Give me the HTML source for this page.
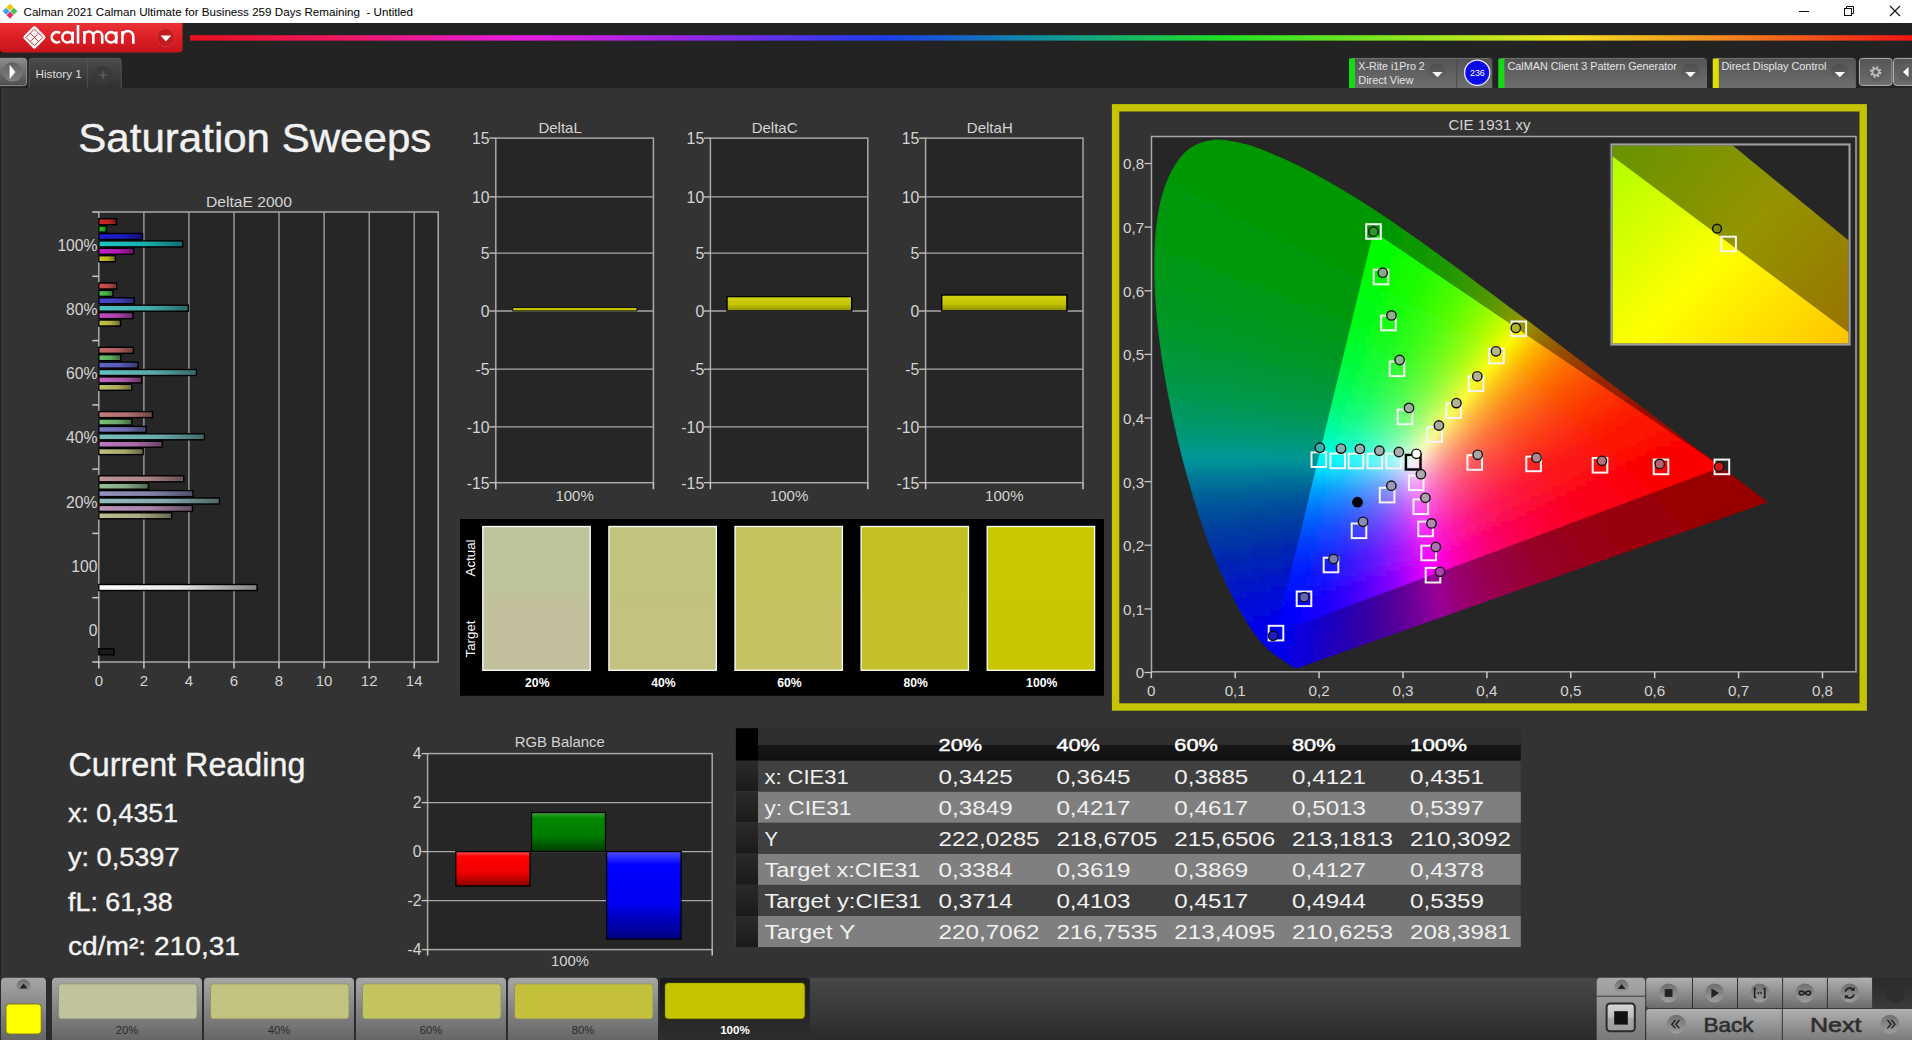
<!DOCTYPE html><html><head><meta charset="utf-8"><title>Calman</title><style>html,body{margin:0;padding:0;background:#333;overflow:hidden}svg{display:block}text{font-family:"Liberation Sans",sans-serif}</style></head><body><svg width="1912" height="1040" viewBox="0 0 1912 1040"><defs><linearGradient id="gRed" x1="0" y1="0" x2="0" y2="1"><stop offset="0" stop-color="#ea3236"/><stop offset="0.5" stop-color="#dc1e24"/><stop offset="1" stop-color="#c5151b"/></linearGradient><linearGradient id="gRain" x1="0" y1="0" x2="1" y2="0"><stop offset="0" stop-color="#e8101c"/><stop offset="0.09" stop-color="#ee1864"/><stop offset="0.192" stop-color="#e81ce0"/><stop offset="0.284" stop-color="#9a26e6"/><stop offset="0.403" stop-color="#1c3cee"/><stop offset="0.5" stop-color="#10949a"/><stop offset="0.6" stop-color="#1ee024"/><stop offset="0.73" stop-color="#a8e81c"/><stop offset="0.8" stop-color="#f4e21e"/><stop offset="0.888" stop-color="#f48a1e"/><stop offset="1" stop-color="#f01414"/></linearGradient><linearGradient id="gBtn" x1="0" y1="0" x2="0" y2="1"><stop offset="0" stop-color="#8c8c8c"/><stop offset="1" stop-color="#4e4e4e"/></linearGradient><linearGradient id="gKnob" x1="0" y1="0" x2="0" y2="1"><stop offset="0" stop-color="#5a5a5a"/><stop offset="1" stop-color="#8a8a8a"/></linearGradient><linearGradient id="gTab" x1="0" y1="0" x2="0" y2="1"><stop offset="0" stop-color="#4c4c4c"/><stop offset="1" stop-color="#303030"/></linearGradient><linearGradient id="gDev" x1="0" y1="0" x2="0" y2="1"><stop offset="0" stop-color="#545454"/><stop offset="1" stop-color="#6e6e6e"/></linearGradient><linearGradient id="gDrop" x1="0" y1="0" x2="0" y2="1"><stop offset="0" stop-color="#4a4a4a"/><stop offset="1" stop-color="#6a6a6a"/></linearGradient><linearGradient id="gb00" x1="0" y1="0" x2="1" y2="0"><stop offset="0" stop-color="#d42828"/><stop offset="0.55" stop-color="#be2424"/><stop offset="1" stop-color="#741616"/></linearGradient><linearGradient id="gb01" x1="0" y1="0" x2="1" y2="0"><stop offset="0" stop-color="#28c428"/><stop offset="0.55" stop-color="#24b024"/><stop offset="1" stop-color="#166b16"/></linearGradient><linearGradient id="gb02" x1="0" y1="0" x2="1" y2="0"><stop offset="0" stop-color="#1e1ed2"/><stop offset="0.55" stop-color="#1b1bbd"/><stop offset="1" stop-color="#101073"/></linearGradient><linearGradient id="gb03" x1="0" y1="0" x2="1" y2="0"><stop offset="0" stop-color="#20c4c4"/><stop offset="0.55" stop-color="#1cb0b0"/><stop offset="1" stop-color="#116b6b"/></linearGradient><linearGradient id="gb04" x1="0" y1="0" x2="1" y2="0"><stop offset="0" stop-color="#c420c4"/><stop offset="0.55" stop-color="#b01cb0"/><stop offset="1" stop-color="#6b116b"/></linearGradient><linearGradient id="gb05" x1="0" y1="0" x2="1" y2="0"><stop offset="0" stop-color="#c8c81e"/><stop offset="0.55" stop-color="#b4b41b"/><stop offset="1" stop-color="#6e6e10"/></linearGradient><linearGradient id="gb10" x1="0" y1="0" x2="1" y2="0"><stop offset="0" stop-color="#cc5151"/><stop offset="0.55" stop-color="#b74848"/><stop offset="1" stop-color="#702c2c"/></linearGradient><linearGradient id="gb11" x1="0" y1="0" x2="1" y2="0"><stop offset="0" stop-color="#51c151"/><stop offset="0.55" stop-color="#48ad48"/><stop offset="1" stop-color="#2c6a2c"/></linearGradient><linearGradient id="gb12" x1="0" y1="0" x2="1" y2="0"><stop offset="0" stop-color="#4949cb"/><stop offset="0.55" stop-color="#4141b6"/><stop offset="1" stop-color="#28286f"/></linearGradient><linearGradient id="gb13" x1="0" y1="0" x2="1" y2="0"><stop offset="0" stop-color="#4bc1c1"/><stop offset="0.55" stop-color="#43adad"/><stop offset="1" stop-color="#296a6a"/></linearGradient><linearGradient id="gb14" x1="0" y1="0" x2="1" y2="0"><stop offset="0" stop-color="#c14bc1"/><stop offset="0.55" stop-color="#ad43ad"/><stop offset="1" stop-color="#6a296a"/></linearGradient><linearGradient id="gb15" x1="0" y1="0" x2="1" y2="0"><stop offset="0" stop-color="#c4c449"/><stop offset="0.55" stop-color="#b0b041"/><stop offset="1" stop-color="#6b6b28"/></linearGradient><linearGradient id="gb20" x1="0" y1="0" x2="1" y2="0"><stop offset="0" stop-color="#c86969"/><stop offset="0.55" stop-color="#b45e5e"/><stop offset="1" stop-color="#6e3939"/></linearGradient><linearGradient id="gb21" x1="0" y1="0" x2="1" y2="0"><stop offset="0" stop-color="#69bf69"/><stop offset="0.55" stop-color="#5eab5e"/><stop offset="1" stop-color="#396939"/></linearGradient><linearGradient id="gb22" x1="0" y1="0" x2="1" y2="0"><stop offset="0" stop-color="#6464c7"/><stop offset="0.55" stop-color="#5a5ab3"/><stop offset="1" stop-color="#37376d"/></linearGradient><linearGradient id="gb23" x1="0" y1="0" x2="1" y2="0"><stop offset="0" stop-color="#65bfbf"/><stop offset="0.55" stop-color="#5aabab"/><stop offset="1" stop-color="#376969"/></linearGradient><linearGradient id="gb24" x1="0" y1="0" x2="1" y2="0"><stop offset="0" stop-color="#bf65bf"/><stop offset="0.55" stop-color="#ab5aab"/><stop offset="1" stop-color="#693769"/></linearGradient><linearGradient id="gb25" x1="0" y1="0" x2="1" y2="0"><stop offset="0" stop-color="#c1c164"/><stop offset="0.55" stop-color="#adad5a"/><stop offset="1" stop-color="#6a6a37"/></linearGradient><linearGradient id="gb30" x1="0" y1="0" x2="1" y2="0"><stop offset="0" stop-color="#c47c7c"/><stop offset="0.55" stop-color="#b06f6f"/><stop offset="1" stop-color="#6b4444"/></linearGradient><linearGradient id="gb31" x1="0" y1="0" x2="1" y2="0"><stop offset="0" stop-color="#7cbe7c"/><stop offset="0.55" stop-color="#6fab6f"/><stop offset="1" stop-color="#446844"/></linearGradient><linearGradient id="gb32" x1="0" y1="0" x2="1" y2="0"><stop offset="0" stop-color="#7878c4"/><stop offset="0.55" stop-color="#6c6cb0"/><stop offset="1" stop-color="#42426b"/></linearGradient><linearGradient id="gb33" x1="0" y1="0" x2="1" y2="0"><stop offset="0" stop-color="#79bebe"/><stop offset="0.55" stop-color="#6cabab"/><stop offset="1" stop-color="#426868"/></linearGradient><linearGradient id="gb34" x1="0" y1="0" x2="1" y2="0"><stop offset="0" stop-color="#be79be"/><stop offset="0.55" stop-color="#ab6cab"/><stop offset="1" stop-color="#684268"/></linearGradient><linearGradient id="gb35" x1="0" y1="0" x2="1" y2="0"><stop offset="0" stop-color="#bfbf78"/><stop offset="0.55" stop-color="#abab6c"/><stop offset="1" stop-color="#696942"/></linearGradient><linearGradient id="gb40" x1="0" y1="0" x2="1" y2="0"><stop offset="0" stop-color="#c09595"/><stop offset="0.55" stop-color="#ac8686"/><stop offset="1" stop-color="#695151"/></linearGradient><linearGradient id="gb41" x1="0" y1="0" x2="1" y2="0"><stop offset="0" stop-color="#95bc95"/><stop offset="0.55" stop-color="#86a986"/><stop offset="1" stop-color="#516751"/></linearGradient><linearGradient id="gb42" x1="0" y1="0" x2="1" y2="0"><stop offset="0" stop-color="#9292bf"/><stop offset="0.55" stop-color="#8383ab"/><stop offset="1" stop-color="#505069"/></linearGradient><linearGradient id="gb43" x1="0" y1="0" x2="1" y2="0"><stop offset="0" stop-color="#93bcbc"/><stop offset="0.55" stop-color="#84a9a9"/><stop offset="1" stop-color="#506767"/></linearGradient><linearGradient id="gb44" x1="0" y1="0" x2="1" y2="0"><stop offset="0" stop-color="#bc93bc"/><stop offset="0.55" stop-color="#a984a9"/><stop offset="1" stop-color="#675067"/></linearGradient><linearGradient id="gb45" x1="0" y1="0" x2="1" y2="0"><stop offset="0" stop-color="#bdbd92"/><stop offset="0.55" stop-color="#aaaa83"/><stop offset="1" stop-color="#676750"/></linearGradient><linearGradient id="gbW" x1="0" y1="0" x2="1" y2="0"><stop offset="0" stop-color="#ffffff"/><stop offset="0.5" stop-color="#e8e8e8"/><stop offset="1" stop-color="#808080"/></linearGradient><linearGradient id="gYbar" x1="0" y1="0" x2="0" y2="1"><stop offset="0" stop-color="#d4d418"/><stop offset="0.55" stop-color="#c4c400"/><stop offset="1" stop-color="#8a8a00"/></linearGradient><linearGradient id="gsw0" x1="0" y1="0" x2="0" y2="1"><stop offset="0" stop-color="#bfc39a"/><stop offset="0.45" stop-color="#bfc39a"/><stop offset="0.55" stop-color="#c2bf9d"/><stop offset="1" stop-color="#c2bf9d"/></linearGradient><linearGradient id="gsw1" x1="0" y1="0" x2="0" y2="1"><stop offset="0" stop-color="#c1c47d"/><stop offset="0.45" stop-color="#c1c47d"/><stop offset="0.55" stop-color="#c3c27f"/><stop offset="1" stop-color="#c3c27f"/></linearGradient><linearGradient id="gsw2" x1="0" y1="0" x2="0" y2="1"><stop offset="0" stop-color="#c3c45e"/><stop offset="0.45" stop-color="#c3c45e"/><stop offset="0.55" stop-color="#c4c262"/><stop offset="1" stop-color="#c4c262"/></linearGradient><linearGradient id="gsw3" x1="0" y1="0" x2="0" y2="1"><stop offset="0" stop-color="#c4c023"/><stop offset="0.45" stop-color="#c4c023"/><stop offset="0.55" stop-color="#c5c02a"/><stop offset="1" stop-color="#c5c02a"/></linearGradient><linearGradient id="gsw4" x1="0" y1="0" x2="0" y2="1"><stop offset="0" stop-color="#c8c800"/><stop offset="0.45" stop-color="#c8c800"/><stop offset="0.55" stop-color="#c8c600"/><stop offset="1" stop-color="#c8c600"/></linearGradient><clipPath id="cLoc"><path d="M1297.2 668.2C1297.1 668.2 1297.1 668.2 1297.1 668.2C1297.0 668.2 1297.0 668.2 1296.9 668.2C1296.8 668.2 1296.8 668.2 1296.7 668.2C1296.7 668.2 1296.6 668.3 1296.5 668.3C1296.4 668.3 1296.3 668.3 1296.2 668.3C1296.1 668.3 1296.0 668.3 1295.9 668.3C1295.8 668.3 1295.6 668.3 1295.5 668.3C1295.3 668.3 1295.1 668.2 1294.9 668.1C1294.6 668.0 1294.3 667.8 1294.0 667.7C1293.6 667.5 1293.3 667.2 1292.8 667.0C1292.3 666.7 1291.7 666.3 1291.1 665.9C1290.5 665.4 1289.8 665.0 1289.0 664.4C1288.2 663.8 1287.3 663.3 1286.2 662.6C1285.2 661.8 1283.9 661.0 1282.5 660.1C1281.1 659.1 1279.5 658.2 1277.8 656.9C1276.0 655.6 1274.1 654.2 1271.9 652.4C1269.7 650.6 1267.5 648.9 1264.8 645.9C1262.0 642.9 1258.8 639.5 1255.2 634.5C1251.6 629.5 1247.6 624.0 1243.0 616.0C1238.4 608.1 1233.4 598.9 1227.6 586.8C1221.9 574.7 1215.1 560.6 1208.7 543.4C1202.3 526.2 1195.4 505.8 1189.1 483.3C1182.8 460.8 1175.9 434.1 1170.7 408.3C1165.5 382.4 1160.6 353.8 1157.9 328.1C1155.1 302.4 1153.5 276.4 1154.3 253.9C1155.1 231.4 1157.8 209.8 1162.7 193.1C1167.6 176.4 1175.2 162.6 1183.7 153.7C1192.1 144.8 1202.8 141.3 1213.4 139.8C1223.9 138.3 1235.6 141.7 1246.9 144.6C1258.1 147.6 1269.9 152.8 1280.9 157.6C1291.9 162.3 1302.5 167.6 1312.9 173.1C1323.4 178.6 1333.5 184.4 1343.7 190.5C1353.9 196.6 1364.1 203.0 1374.1 209.6C1384.2 216.2 1394.2 223.1 1404.2 230.0C1414.2 237.0 1424.2 244.1 1434.2 251.3C1444.2 258.5 1454.2 265.9 1464.2 273.2C1474.2 280.6 1484.2 288.1 1494.1 295.5C1504.0 302.9 1514.0 310.4 1523.8 317.7C1533.6 325.1 1543.4 332.5 1553.0 339.7C1562.5 347.0 1572.0 354.2 1581.2 361.1C1590.5 368.1 1599.6 375.0 1608.4 381.7C1617.1 388.3 1625.8 394.8 1633.9 400.9C1642.0 407.1 1649.9 413.1 1657.1 418.6C1664.4 424.1 1671.0 429.1 1677.4 433.9C1683.7 438.7 1689.7 443.2 1695.2 447.3C1700.6 451.4 1705.5 455.1 1709.9 458.4C1714.4 461.8 1718.3 464.8 1721.9 467.5C1725.5 470.3 1728.6 472.6 1731.5 474.8C1734.4 477.0 1736.9 478.8 1739.2 480.5C1741.4 482.3 1743.4 483.8 1745.3 485.2C1747.2 486.6 1748.8 487.9 1750.4 489.1C1752.0 490.3 1753.3 491.3 1754.6 492.3C1755.9 493.2 1757.0 494.0 1758.0 494.8C1758.9 495.5 1759.7 496.1 1760.5 496.7C1761.2 497.2 1761.8 497.7 1762.4 498.1C1763.0 498.6 1763.4 498.9 1763.8 499.2C1764.2 499.5 1764.5 499.7 1764.8 499.9C1765.0 500.1 1765.3 500.3 1765.5 500.5C1765.7 500.7 1765.9 500.8 1766.1 500.9C1766.3 501.1 1766.5 501.3 1766.7 501.4C1766.9 501.5 1767.1 501.7 1767.2 501.8C1767.3 501.9 1767.4 502.0 1767.5 502.0C1767.6 502.1 1767.7 502.1 1767.7 502.2C1767.7 502.2 1767.8 502.2 1767.8 502.2Z"/></clipPath><clipPath id="cTri"><path d="M1373.5 231.5L1721.9 466.9L1276.0 633.1Z"/></clipPath><clipPath id="cPlot"><rect x="1151.5" y="136.5" width="704.5" height="535.3"/></clipPath><filter id="fBlur" x="-5%" y="-5%" width="110%" height="110%"><feGaussianBlur stdDeviation="3.2"/></filter><clipPath id="cIns"><rect x="1612.5" y="145.5" width="236" height="198"/></clipPath><linearGradient id="gInB" x1="0" y1="0" x2="1" y2="1"><stop offset="0" stop-color="#a8ff00"/><stop offset="0.45" stop-color="#ffff00"/><stop offset="1" stop-color="#ffb000"/></linearGradient><linearGradient id="gInO" x1="0" y1="0" x2="1" y2="1"><stop offset="0" stop-color="#5a9400"/><stop offset="0.5" stop-color="#949400"/><stop offset="1" stop-color="#9a6800"/></linearGradient><linearGradient id="gRb" x1="0" y1="0" x2="0" y2="1"><stop offset="0" stop-color="#ff5050"/><stop offset="0.15" stop-color="#ff0000"/><stop offset="0.6" stop-color="#f00000"/><stop offset="1" stop-color="#880000"/></linearGradient><linearGradient id="gGb" x1="0" y1="0" x2="0" y2="1"><stop offset="0" stop-color="#40a040"/><stop offset="0.15" stop-color="#008800"/><stop offset="0.6" stop-color="#007c00"/><stop offset="1" stop-color="#003c00"/></linearGradient><linearGradient id="gBb" x1="0" y1="0" x2="0" y2="1"><stop offset="0" stop-color="#5050ff"/><stop offset="0.15" stop-color="#0000ff"/><stop offset="0.6" stop-color="#0000f0"/><stop offset="1" stop-color="#000080"/></linearGradient><linearGradient id="gHdr" x1="0" y1="0" x2="0" y2="1"><stop offset="0" stop-color="#2e2e2e"/><stop offset="0.5" stop-color="#2e2e2e"/><stop offset="0.52" stop-color="#161616"/><stop offset="1" stop-color="#101010"/></linearGradient><linearGradient id="gNar" x1="0" y1="0" x2="0" y2="1"><stop offset="0" stop-color="#2a2a2a"/><stop offset="1" stop-color="#1a1a1a"/></linearGradient><linearGradient id="gBar" x1="0" y1="0" x2="0" y2="1"><stop offset="0" stop-color="#484848"/><stop offset="1" stop-color="#2a2a2a"/></linearGradient><linearGradient id="gGb2" x1="0" y1="0" x2="0" y2="1"><stop offset="0" stop-color="#a6a6a6"/><stop offset="0.35" stop-color="#8c8c8c"/><stop offset="1" stop-color="#5e5e5e"/></linearGradient><linearGradient id="gKnb" x1="0" y1="0" x2="0" y2="1"><stop offset="0" stop-color="#6e6e6e"/><stop offset="1" stop-color="#9e9e9e"/></linearGradient><linearGradient id="gSel" x1="0" y1="0" x2="0" y2="1"><stop offset="0" stop-color="#1b1b1d"/><stop offset="1" stop-color="#303030"/></linearGradient><linearGradient id="gCtl" x1="0" y1="0" x2="0" y2="1"><stop offset="0" stop-color="#a8a8a8"/><stop offset="1" stop-color="#747474"/></linearGradient><linearGradient id="gCtl2" x1="0" y1="0" x2="0" y2="1"><stop offset="0" stop-color="#b0b0b0"/><stop offset="1" stop-color="#6c6c6c"/></linearGradient><linearGradient id="gSq" x1="0" y1="0" x2="0" y2="1"><stop offset="0" stop-color="#d8d8d8"/><stop offset="0.5" stop-color="#bdbdbd"/><stop offset="0.52" stop-color="#a8a8a8"/><stop offset="1" stop-color="#9a9a9a"/></linearGradient><linearGradient id="gDk" x1="0" y1="0" x2="0" y2="1"><stop offset="0" stop-color="#2a2a2a"/><stop offset="1" stop-color="#3a3a3a"/></linearGradient></defs><rect x="0.0" y="0.0" width="1912.0" height="1040.0" fill="#333333" /><rect x="0.0" y="0.0" width="1912.0" height="23.0" fill="#ffffff" /><g transform="translate(10,11.2)"><rect x="-2.5" y="-6.4" width="5" height="5" fill="#f5c400" transform="rotate(45 0 -3.9)"/><rect x="-6.4" y="-2.5" width="5" height="5" fill="#3aa6e8" transform="rotate(45 -3.9 0)"/><rect x="1.4" y="-2.5" width="5" height="5" fill="#46c04a" transform="rotate(45 3.9 0)"/><rect x="-2.5" y="1.4" width="5" height="5" fill="#e0306a" transform="rotate(45 0 3.9)"/></g><text x="23.5" y="15.8" font-size="11.60" fill="#000000" textLength="389.5" lengthAdjust="spacingAndGlyphs" >Calman 2021 Calman Ultimate for Business 259 Days Remaining  - Untitled</text><line x1="1799.0" y1="11.5" x2="1809.0" y2="11.5" stroke="#111" stroke-width="1.0" /><rect x="1844.5" y="8.5" width="7" height="7" fill="none" stroke="#111" stroke-width="1"/><path d="M1846.5 8.5v-2h7v7h-2" fill="none" stroke="#111" stroke-width="1"/><path d="M1890 6l10 10M1900 6l-10 10" stroke="#111" stroke-width="1.1"/><rect x="0.0" y="23.0" width="1912.0" height="65.0" fill="#232323" /><rect x="0.0" y="88.0" width="0.9" height="890.0" fill="#1f1f1f" /><rect x="1.6" y="88.0" width="1.6" height="890.0" fill="#383838" /><path d="M0 23H182.5V48.5Q182.5 52.6 178.5 52.6H4Q0 52.6 0 48.5Z" fill="url(#gRed)"/><g transform="translate(34.4,37.4) rotate(45)"><rect x="-8.5" y="-8.5" width="17" height="17" rx="2.4" fill="#fff"/><rect x="-5.9" y="-5.9" width="11.8" height="11.8" fill="none" stroke="#d0262c" stroke-width="0.9"/><path d="M0 -5.9V5.9M-5.9 0H5.9" stroke="#d0262c" stroke-width="0.9"/></g><g fill="none" stroke="#ffffff" stroke-width="2.6"><path d="M60.1 33.2A5.15 5.15 0 1 0 60.1 41.3"/><circle cx="67.5" cy="37.3" r="5.15"/><path d="M72.65 31.6V43.7"/><path d="M78 25V43.7"/><path d="M84.4 30.9V43.7M84.4 43.7V36A4.45 4.45 0 0 1 93.3 36V43.7M93.3 36A4.45 4.45 0 0 1 102.2 36V43.7"/><circle cx="111.1" cy="37.3" r="5.15"/><path d="M116.25 31.6V43.7"/><path d="M122.4 30.9V43.7M122.4 43.7V36.4A5.45 5.45 0 0 1 133.3 36.4V43.7"/></g><circle cx="165.6" cy="37.6" r="9" fill="#c41a20"/><circle cx="165.6" cy="37.6" r="9" fill="none" stroke="#e84a4e" stroke-width="0.8" opacity="0.6"/><path d="M160.6 35.6H171.2L165.9 41.6Z" fill="#fff"/><rect x="190.0" y="35.2" width="1722.0" height="5.4" fill="url(#gRain)" /><rect x="-3" y="58.3" width="29.6" height="27.4" rx="3" fill="url(#gBtn)" stroke="#a0a0a0" stroke-width="0.8"/><circle cx="12.5" cy="72" r="9.8" fill="url(#gKnob)" opacity="0.8"/><path d="M9.6 64.8V79L15.4 71.9Z" fill="#fff"/><path d="M29.2 88V61Q29.2 58.3 32 58.3H118.5Q121.2 58.3 121.2 61V88" fill="url(#gTab)" stroke="#5c5c5c" stroke-width="0.8"/><line x1="87.6" y1="58.5" x2="87.6" y2="88.0" stroke="#555" stroke-width="0.8" /><text x="35.5" y="77.8" font-size="10.60" fill="#dcdcdc" textLength="46.3" lengthAdjust="spacingAndGlyphs" >History 1</text><circle cx="103" cy="75" r="9" fill="#3a3a3a"/><path d="M103 71V79M99 75H107" stroke="#6a6a6a" stroke-width="1.1"/><path d="M1349.0 88V61Q1349.0 58 1352.0 58H1489.3 Q1492.3 58 1492.3 61V88Z" fill="url(#gDev)"/><line x1="1352.0" y1="58.4" x2="1489.3" y2="58.4" stroke="#7a7a7a" stroke-width="0.8" /><rect x="1349.0" y="58.6" width="6.0" height="29.4" fill="#14dc14" /><circle cx="1437.4" cy="72.6" r="9.2" fill="url(#gDrop)" opacity="0.85"/><path d="M1432.2 72H1442.6 L1437.4 77.2Z" fill="#fff"/><line x1="1456.7" y1="61.0" x2="1456.7" y2="88.0" stroke="#4a4a4a" stroke-width="1.0" /><circle cx="1477.2" cy="72.7" r="12.6" fill="#0a0ae6" stroke="#e8e8ff" stroke-width="1.3"/><text x="1477.4" y="76.0" font-size="8.80" fill="#ffffff" text-anchor="middle" textLength="14.8" lengthAdjust="spacingAndGlyphs" >236</text><text x="1358.3" y="70.0" font-size="10.70" fill="#e4e4e4" textLength="66.5" lengthAdjust="spacingAndGlyphs" >X-Rite i1Pro 2</text><text x="1358.3" y="84.0" font-size="10.70" fill="#e4e4e4" textLength="55.0" lengthAdjust="spacingAndGlyphs" >Direct View</text><path d="M1498.4 88V61Q1498.4 58 1501.4 58H1704.0 Q1707.0 58 1707.0 61V88Z" fill="url(#gDev)"/><line x1="1501.4" y1="58.4" x2="1704.0" y2="58.4" stroke="#7a7a7a" stroke-width="0.8" /><rect x="1498.4" y="58.6" width="6.0" height="29.4" fill="#14dc14" /><circle cx="1690.5" cy="72.6" r="9.2" fill="url(#gDrop)" opacity="0.85"/><path d="M1685.3 72H1695.7 L1690.5 77.2Z" fill="#fff"/><text x="1507.5" y="70.0" font-size="10.70" fill="#e4e4e4" textLength="169.3" lengthAdjust="spacingAndGlyphs" >CalMAN Client 3 Pattern Generator</text><path d="M1712.8 88V61Q1712.8 58 1715.8 58H1852.9 Q1855.9 58 1855.9 61V88Z" fill="url(#gDev)"/><line x1="1715.8" y1="58.4" x2="1852.9" y2="58.4" stroke="#7a7a7a" stroke-width="0.8" /><rect x="1712.8" y="58.6" width="6.0" height="29.4" fill="#e0e000" /><circle cx="1839.8" cy="72.6" r="9.2" fill="url(#gDrop)" opacity="0.85"/><path d="M1834.6 72H1845.0 L1839.8 77.2Z" fill="#fff"/><text x="1721.5" y="70.0" font-size="10.70" fill="#e4e4e4" textLength="105.0" lengthAdjust="spacingAndGlyphs" >Direct Display Control</text><rect x="1859.4" y="58.4" width="32.6" height="27" rx="3" fill="url(#gDev)" stroke="#b0b0b0" stroke-width="1"/><circle cx="1875.7" cy="72" r="9" fill="#5e5e5e"/><g transform="translate(1875.7,72)"><circle r="4.6" fill="none" stroke="#bdbdbd" stroke-width="2.4" stroke-dasharray="2 1.6"/><circle r="3.2" fill="none" stroke="#bdbdbd" stroke-width="1.6"/></g><rect x="1893.5" y="58.4" width="30" height="27" rx="3" fill="url(#gDev)" stroke="#b0b0b0" stroke-width="1"/><circle cx="1906" cy="72" r="9" fill="#5e5e5e"/><path d="M1903 72L1908.5 67V77Z" fill="#fff"/><text x="78.3" y="151.5" font-size="41.50" fill="#f2f2f2" textLength="353.0" lengthAdjust="spacingAndGlyphs" stroke="#f2f2f2" stroke-width="0.4">Saturation Sweeps</text><rect x="98.8" y="212.0" width="339.4" height="450.0" fill="#262626" /><line x1="143.9" y1="212.0" x2="143.9" y2="662.0" stroke="#a8a8a8" stroke-width="1.3" /><line x1="188.9" y1="212.0" x2="188.9" y2="662.0" stroke="#a8a8a8" stroke-width="1.3" /><line x1="234.0" y1="212.0" x2="234.0" y2="662.0" stroke="#a8a8a8" stroke-width="1.3" /><line x1="279.0" y1="212.0" x2="279.0" y2="662.0" stroke="#a8a8a8" stroke-width="1.3" /><line x1="324.1" y1="212.0" x2="324.1" y2="662.0" stroke="#a8a8a8" stroke-width="1.3" /><line x1="369.2" y1="212.0" x2="369.2" y2="662.0" stroke="#a8a8a8" stroke-width="1.3" /><line x1="414.2" y1="212.0" x2="414.2" y2="662.0" stroke="#a8a8a8" stroke-width="1.3" /><rect x="98.8" y="212.0" width="339.4" height="450.0" fill="none" stroke="#a8a8a8" stroke-width="1.5"/><text x="206.0" y="207.0" font-size="15.00" fill="#d4d4d4" textLength="86.0" lengthAdjust="spacingAndGlyphs" >DeltaE 2000</text><line x1="92.3" y1="212.0" x2="98.8" y2="212.0" stroke="#c8c8c8" stroke-width="1.5" /><line x1="92.3" y1="276.3" x2="98.8" y2="276.3" stroke="#c8c8c8" stroke-width="1.5" /><line x1="92.3" y1="340.6" x2="98.8" y2="340.6" stroke="#c8c8c8" stroke-width="1.5" /><line x1="92.3" y1="404.9" x2="98.8" y2="404.9" stroke="#c8c8c8" stroke-width="1.5" /><line x1="92.3" y1="469.1" x2="98.8" y2="469.1" stroke="#c8c8c8" stroke-width="1.5" /><line x1="92.3" y1="533.4" x2="98.8" y2="533.4" stroke="#c8c8c8" stroke-width="1.5" /><line x1="92.3" y1="597.7" x2="98.8" y2="597.7" stroke="#c8c8c8" stroke-width="1.5" /><line x1="92.3" y1="662.0" x2="98.8" y2="662.0" stroke="#c8c8c8" stroke-width="1.5" /><line x1="98.8" y1="662.0" x2="98.8" y2="668.6" stroke="#c8c8c8" stroke-width="1.5" /><text x="98.8" y="685.5" font-size="15.00" fill="#d4d4d4" text-anchor="middle" >0</text><line x1="143.9" y1="662.0" x2="143.9" y2="668.6" stroke="#c8c8c8" stroke-width="1.5" /><text x="143.9" y="685.5" font-size="15.00" fill="#d4d4d4" text-anchor="middle" >2</text><line x1="188.9" y1="662.0" x2="188.9" y2="668.6" stroke="#c8c8c8" stroke-width="1.5" /><text x="188.9" y="685.5" font-size="15.00" fill="#d4d4d4" text-anchor="middle" >4</text><line x1="234.0" y1="662.0" x2="234.0" y2="668.6" stroke="#c8c8c8" stroke-width="1.5" /><text x="234.0" y="685.5" font-size="15.00" fill="#d4d4d4" text-anchor="middle" >6</text><line x1="279.0" y1="662.0" x2="279.0" y2="668.6" stroke="#c8c8c8" stroke-width="1.5" /><text x="279.0" y="685.5" font-size="15.00" fill="#d4d4d4" text-anchor="middle" >8</text><line x1="324.1" y1="662.0" x2="324.1" y2="668.6" stroke="#c8c8c8" stroke-width="1.5" /><text x="324.1" y="685.5" font-size="15.00" fill="#d4d4d4" text-anchor="middle" >10</text><line x1="369.2" y1="662.0" x2="369.2" y2="668.6" stroke="#c8c8c8" stroke-width="1.5" /><text x="369.2" y="685.5" font-size="15.00" fill="#d4d4d4" text-anchor="middle" >12</text><line x1="414.2" y1="662.0" x2="414.2" y2="668.6" stroke="#c8c8c8" stroke-width="1.5" /><text x="414.2" y="685.5" font-size="15.00" fill="#d4d4d4" text-anchor="middle" >14</text><text x="97.5" y="250.9" font-size="15.70" fill="#d4d4d4" text-anchor="end" >100%</text><text x="97.5" y="315.1" font-size="15.70" fill="#d4d4d4" text-anchor="end" >80%</text><text x="97.5" y="379.2" font-size="15.70" fill="#d4d4d4" text-anchor="end" >60%</text><text x="97.5" y="443.4" font-size="15.70" fill="#d4d4d4" text-anchor="end" >40%</text><text x="97.5" y="507.5" font-size="15.70" fill="#d4d4d4" text-anchor="end" >20%</text><text x="97.5" y="571.6" font-size="15.70" fill="#d4d4d4" text-anchor="end" >100</text><text x="97.5" y="635.8" font-size="15.70" fill="#d4d4d4" text-anchor="end" >0</text><rect x="98.8" y="218.7" width="17.6" height="6" fill="url(#gb00)" stroke="#000" stroke-width="1.4"/><rect x="98.8" y="226.1" width="7.7" height="6" fill="url(#gb01)" stroke="#000" stroke-width="1.4"/><rect x="98.8" y="233.5" width="43.8" height="6" fill="url(#gb02)" stroke="#000" stroke-width="1.4"/><rect x="98.8" y="240.9" width="84.0" height="6" fill="url(#gb03)" stroke="#000" stroke-width="1.4"/><rect x="98.8" y="248.3" width="34.9" height="6" fill="url(#gb04)" stroke="#000" stroke-width="1.4"/><rect x="98.8" y="255.7" width="16.6" height="6" fill="url(#gb05)" stroke="#000" stroke-width="1.4"/><rect x="98.8" y="283.0" width="17.9" height="6" fill="url(#gb10)" stroke="#000" stroke-width="1.4"/><rect x="98.8" y="290.4" width="14.2" height="6" fill="url(#gb11)" stroke="#000" stroke-width="1.4"/><rect x="98.8" y="297.8" width="35.5" height="6" fill="url(#gb12)" stroke="#000" stroke-width="1.4"/><rect x="98.8" y="305.2" width="89.5" height="6" fill="url(#gb13)" stroke="#000" stroke-width="1.4"/><rect x="98.8" y="312.6" width="34.2" height="6" fill="url(#gb14)" stroke="#000" stroke-width="1.4"/><rect x="98.8" y="320.0" width="21.7" height="6" fill="url(#gb15)" stroke="#000" stroke-width="1.4"/><rect x="98.8" y="347.3" width="34.7" height="6" fill="url(#gb20)" stroke="#000" stroke-width="1.4"/><rect x="98.8" y="354.7" width="21.9" height="6" fill="url(#gb21)" stroke="#000" stroke-width="1.4"/><rect x="98.8" y="362.1" width="39.2" height="6" fill="url(#gb22)" stroke="#000" stroke-width="1.4"/><rect x="98.8" y="369.5" width="97.7" height="6" fill="url(#gb23)" stroke="#000" stroke-width="1.4"/><rect x="98.8" y="376.9" width="42.7" height="6" fill="url(#gb24)" stroke="#000" stroke-width="1.4"/><rect x="98.8" y="384.3" width="33.0" height="6" fill="url(#gb25)" stroke="#000" stroke-width="1.4"/><rect x="98.8" y="411.6" width="53.7" height="6" fill="url(#gb30)" stroke="#000" stroke-width="1.4"/><rect x="98.8" y="419.0" width="33.0" height="6" fill="url(#gb31)" stroke="#000" stroke-width="1.4"/><rect x="98.8" y="426.4" width="47.5" height="6" fill="url(#gb32)" stroke="#000" stroke-width="1.4"/><rect x="98.8" y="433.8" width="105.7" height="6" fill="url(#gb33)" stroke="#000" stroke-width="1.4"/><rect x="98.8" y="441.2" width="63.4" height="6" fill="url(#gb34)" stroke="#000" stroke-width="1.4"/><rect x="98.8" y="448.6" width="44.4" height="6" fill="url(#gb35)" stroke="#000" stroke-width="1.4"/><rect x="98.8" y="475.8" width="84.9" height="6" fill="url(#gb40)" stroke="#000" stroke-width="1.4"/><rect x="98.8" y="483.2" width="49.6" height="6" fill="url(#gb41)" stroke="#000" stroke-width="1.4"/><rect x="98.8" y="490.6" width="94.2" height="6" fill="url(#gb42)" stroke="#000" stroke-width="1.4"/><rect x="98.8" y="498.0" width="120.6" height="6" fill="url(#gb43)" stroke="#000" stroke-width="1.4"/><rect x="98.8" y="505.4" width="93.6" height="6" fill="url(#gb44)" stroke="#000" stroke-width="1.4"/><rect x="98.8" y="512.8" width="72.8" height="6" fill="url(#gb45)" stroke="#000" stroke-width="1.4"/><rect x="98.8" y="584.5" width="158.2" height="6" fill="url(#gbW)" stroke="#000" stroke-width="1.4"/><rect x="98.8" y="648.8" width="15.2" height="6" fill="#1a1a1a" stroke="#000" stroke-width="1.4"/><rect x="495.8" y="138.1" width="157.6" height="344.6" fill="#262626" /><line x1="495.8" y1="196.9" x2="653.4" y2="196.9" stroke="#a8a8a8" stroke-width="1.3" /><line x1="495.8" y1="253.1" x2="653.4" y2="253.1" stroke="#a8a8a8" stroke-width="1.3" /><line x1="495.8" y1="311.0" x2="653.4" y2="311.0" stroke="#a8a8a8" stroke-width="1.3" /><line x1="495.8" y1="369.2" x2="653.4" y2="369.2" stroke="#a8a8a8" stroke-width="1.3" /><line x1="495.8" y1="426.9" x2="653.4" y2="426.9" stroke="#a8a8a8" stroke-width="1.3" /><rect x="495.8" y="138.1" width="157.6" height="344.6" fill="none" stroke="#a8a8a8" stroke-width="1.5"/><line x1="489.3" y1="138.1" x2="495.8" y2="138.1" stroke="#c8c8c8" stroke-width="1.3" /><text x="489.6" y="144.1" font-size="15.80" fill="#d4d4d4" text-anchor="end" >15</text><line x1="489.3" y1="196.9" x2="495.8" y2="196.9" stroke="#c8c8c8" stroke-width="1.3" /><text x="489.6" y="202.9" font-size="15.80" fill="#d4d4d4" text-anchor="end" >10</text><line x1="489.3" y1="253.1" x2="495.8" y2="253.1" stroke="#c8c8c8" stroke-width="1.3" /><text x="489.6" y="259.1" font-size="15.80" fill="#d4d4d4" text-anchor="end" >5</text><line x1="489.3" y1="311.0" x2="495.8" y2="311.0" stroke="#c8c8c8" stroke-width="1.3" /><text x="489.6" y="317.0" font-size="15.80" fill="#d4d4d4" text-anchor="end" >0</text><line x1="489.3" y1="369.2" x2="495.8" y2="369.2" stroke="#c8c8c8" stroke-width="1.3" /><text x="489.6" y="375.2" font-size="15.80" fill="#d4d4d4" text-anchor="end" >-5</text><line x1="489.3" y1="426.9" x2="495.8" y2="426.9" stroke="#c8c8c8" stroke-width="1.3" /><text x="489.6" y="432.9" font-size="15.80" fill="#d4d4d4" text-anchor="end" >-10</text><line x1="489.3" y1="482.7" x2="495.8" y2="482.7" stroke="#c8c8c8" stroke-width="1.3" /><text x="489.6" y="488.7" font-size="15.80" fill="#d4d4d4" text-anchor="end" >-15</text><line x1="495.8" y1="482.7" x2="495.8" y2="489.2" stroke="#c8c8c8" stroke-width="1.5" /><line x1="653.4" y1="482.7" x2="653.4" y2="489.2" stroke="#c8c8c8" stroke-width="1.5" /><text x="560.1" y="132.8" font-size="15.00" fill="#d4d4d4" text-anchor="middle" >DeltaL</text><text x="574.6" y="500.8" font-size="15.00" fill="#d4d4d4" text-anchor="middle" >100%</text><rect x="512.8" y="307.6" width="124.2" height="3.4" fill="url(#gYbar)" stroke="#000" stroke-width="0.9"/><rect x="710.4" y="138.1" width="157.4" height="344.6" fill="#262626" /><line x1="710.4" y1="196.9" x2="867.8" y2="196.9" stroke="#a8a8a8" stroke-width="1.3" /><line x1="710.4" y1="253.1" x2="867.8" y2="253.1" stroke="#a8a8a8" stroke-width="1.3" /><line x1="710.4" y1="311.0" x2="867.8" y2="311.0" stroke="#a8a8a8" stroke-width="1.3" /><line x1="710.4" y1="369.2" x2="867.8" y2="369.2" stroke="#a8a8a8" stroke-width="1.3" /><line x1="710.4" y1="426.9" x2="867.8" y2="426.9" stroke="#a8a8a8" stroke-width="1.3" /><rect x="710.4" y="138.1" width="157.4" height="344.6" fill="none" stroke="#a8a8a8" stroke-width="1.5"/><line x1="703.9" y1="138.1" x2="710.4" y2="138.1" stroke="#c8c8c8" stroke-width="1.3" /><text x="704.2" y="144.1" font-size="15.80" fill="#d4d4d4" text-anchor="end" >15</text><line x1="703.9" y1="196.9" x2="710.4" y2="196.9" stroke="#c8c8c8" stroke-width="1.3" /><text x="704.2" y="202.9" font-size="15.80" fill="#d4d4d4" text-anchor="end" >10</text><line x1="703.9" y1="253.1" x2="710.4" y2="253.1" stroke="#c8c8c8" stroke-width="1.3" /><text x="704.2" y="259.1" font-size="15.80" fill="#d4d4d4" text-anchor="end" >5</text><line x1="703.9" y1="311.0" x2="710.4" y2="311.0" stroke="#c8c8c8" stroke-width="1.3" /><text x="704.2" y="317.0" font-size="15.80" fill="#d4d4d4" text-anchor="end" >0</text><line x1="703.9" y1="369.2" x2="710.4" y2="369.2" stroke="#c8c8c8" stroke-width="1.3" /><text x="704.2" y="375.2" font-size="15.80" fill="#d4d4d4" text-anchor="end" >-5</text><line x1="703.9" y1="426.9" x2="710.4" y2="426.9" stroke="#c8c8c8" stroke-width="1.3" /><text x="704.2" y="432.9" font-size="15.80" fill="#d4d4d4" text-anchor="end" >-10</text><line x1="703.9" y1="482.7" x2="710.4" y2="482.7" stroke="#c8c8c8" stroke-width="1.3" /><text x="704.2" y="488.7" font-size="15.80" fill="#d4d4d4" text-anchor="end" >-15</text><line x1="710.4" y1="482.7" x2="710.4" y2="489.2" stroke="#c8c8c8" stroke-width="1.5" /><line x1="867.8" y1="482.7" x2="867.8" y2="489.2" stroke="#c8c8c8" stroke-width="1.5" /><text x="774.6" y="132.8" font-size="15.00" fill="#d4d4d4" text-anchor="middle" >DeltaC</text><text x="789.1" y="500.8" font-size="15.00" fill="#d4d4d4" text-anchor="middle" >100%</text><rect x="727.0" y="296.6" width="124.7" height="14.4" fill="url(#gYbar)" stroke="#000" stroke-width="1.4"/><rect x="925.6" y="138.1" width="157.4" height="344.6" fill="#262626" /><line x1="925.6" y1="196.9" x2="1083.0" y2="196.9" stroke="#a8a8a8" stroke-width="1.3" /><line x1="925.6" y1="253.1" x2="1083.0" y2="253.1" stroke="#a8a8a8" stroke-width="1.3" /><line x1="925.6" y1="311.0" x2="1083.0" y2="311.0" stroke="#a8a8a8" stroke-width="1.3" /><line x1="925.6" y1="369.2" x2="1083.0" y2="369.2" stroke="#a8a8a8" stroke-width="1.3" /><line x1="925.6" y1="426.9" x2="1083.0" y2="426.9" stroke="#a8a8a8" stroke-width="1.3" /><rect x="925.6" y="138.1" width="157.4" height="344.6" fill="none" stroke="#a8a8a8" stroke-width="1.5"/><line x1="919.1" y1="138.1" x2="925.6" y2="138.1" stroke="#c8c8c8" stroke-width="1.3" /><text x="919.4" y="144.1" font-size="15.80" fill="#d4d4d4" text-anchor="end" >15</text><line x1="919.1" y1="196.9" x2="925.6" y2="196.9" stroke="#c8c8c8" stroke-width="1.3" /><text x="919.4" y="202.9" font-size="15.80" fill="#d4d4d4" text-anchor="end" >10</text><line x1="919.1" y1="253.1" x2="925.6" y2="253.1" stroke="#c8c8c8" stroke-width="1.3" /><text x="919.4" y="259.1" font-size="15.80" fill="#d4d4d4" text-anchor="end" >5</text><line x1="919.1" y1="311.0" x2="925.6" y2="311.0" stroke="#c8c8c8" stroke-width="1.3" /><text x="919.4" y="317.0" font-size="15.80" fill="#d4d4d4" text-anchor="end" >0</text><line x1="919.1" y1="369.2" x2="925.6" y2="369.2" stroke="#c8c8c8" stroke-width="1.3" /><text x="919.4" y="375.2" font-size="15.80" fill="#d4d4d4" text-anchor="end" >-5</text><line x1="919.1" y1="426.9" x2="925.6" y2="426.9" stroke="#c8c8c8" stroke-width="1.3" /><text x="919.4" y="432.9" font-size="15.80" fill="#d4d4d4" text-anchor="end" >-10</text><line x1="919.1" y1="482.7" x2="925.6" y2="482.7" stroke="#c8c8c8" stroke-width="1.3" /><text x="919.4" y="488.7" font-size="15.80" fill="#d4d4d4" text-anchor="end" >-15</text><line x1="925.6" y1="482.7" x2="925.6" y2="489.2" stroke="#c8c8c8" stroke-width="1.5" /><line x1="1083.0" y1="482.7" x2="1083.0" y2="489.2" stroke="#c8c8c8" stroke-width="1.5" /><text x="989.8" y="132.8" font-size="15.00" fill="#d4d4d4" text-anchor="middle" >DeltaH</text><text x="1004.3" y="500.8" font-size="15.00" fill="#d4d4d4" text-anchor="middle" >100%</text><rect x="941.7" y="295.0" width="125.2" height="16.0" fill="url(#gYbar)" stroke="#000" stroke-width="1.4"/><rect x="460.0" y="519.0" width="644.0" height="176.8" fill="#000000" /><rect x="482.8" y="526.5" width="107.4" height="143.8" fill="url(#gsw0)" stroke="#ffffff" stroke-width="1.3"/><text x="537.3" y="686.8" font-size="12.20" fill="#ffffff" text-anchor="middle" font-weight="bold" >20%</text><rect x="608.9" y="526.5" width="107.4" height="143.8" fill="url(#gsw1)" stroke="#ffffff" stroke-width="1.3"/><text x="663.4" y="686.8" font-size="12.20" fill="#ffffff" text-anchor="middle" font-weight="bold" >40%</text><rect x="735.0" y="526.5" width="107.4" height="143.8" fill="url(#gsw2)" stroke="#ffffff" stroke-width="1.3"/><text x="789.5" y="686.8" font-size="12.20" fill="#ffffff" text-anchor="middle" font-weight="bold" >60%</text><rect x="861.1" y="526.5" width="107.4" height="143.8" fill="url(#gsw3)" stroke="#ffffff" stroke-width="1.3"/><text x="915.6" y="686.8" font-size="12.20" fill="#ffffff" text-anchor="middle" font-weight="bold" >80%</text><rect x="987.2" y="526.5" width="107.4" height="143.8" fill="url(#gsw4)" stroke="#ffffff" stroke-width="1.3"/><text x="1041.7" y="686.8" font-size="12.20" fill="#ffffff" text-anchor="middle" font-weight="bold" >100%</text><text transform="translate(474.6,558) rotate(-90)" font-size="13" fill="#ffffff" text-anchor="middle" textLength="37" lengthAdjust="spacingAndGlyphs">Actual</text><text transform="translate(474.6,639) rotate(-90)" font-size="13" fill="#ffffff" text-anchor="middle" textLength="37" lengthAdjust="spacingAndGlyphs">Target</text><rect x="1115.6" y="107.8" width="747.6" height="599.2" fill="none" stroke="#c4c400" stroke-width="7.4"/><rect x="1151.5" y="136.5" width="704.5" height="535.3" fill="#262626" /><text x="1489.5" y="130.3" font-size="14.20" fill="#d4d4d4" text-anchor="middle" textLength="82.0" lengthAdjust="spacingAndGlyphs" >CIE 1931 xy</text><g clip-path="url(#cLoc)"><g filter="url(#fBlur)"><path fill="#009804" d="M1163 136h6v6h-6zM1163 142h18v6h-18zM1157 148h36v6h-36zM1157 154h42v6h-42zM1151 160h60v6h-60zM1151 166h72v6h-72zM1157 172h72v6h-72zM1169 178h72v6h-72zM1181 184h72v6h-72zM1193 190h66v6h-66zM1205 196h66v6h-66zM1217 202h66v6h-66zM1223 208h66v6h-66zM1235 214h66v6h-66zM1247 220h66v6h-66zM1259 226h60v6h-60zM1271 232h60v6h-60zM1283 238h60v6h-60zM1295 244h54v6h-54zM1307 250h54v6h-54zM1319 256h54v6h-54zM1331 262h48v6h-48zM1343 268h36v6h-36zM1355 274h18v6h-18zM1367 280h6v6h-6z"/><path fill="#009800" d="M1169 136h114v6h-114zM1181 142h114v6h-114zM1193 148h114v6h-114zM1199 154h126v6h-126zM1211 160h126v6h-126zM1223 166h120v6h-120zM1229 172h126v6h-126zM1241 178h126v6h-126zM1253 184h120v6h-120zM1259 190h126v6h-126zM1271 196h120v6h-120zM1283 202h114v6h-114zM1289 208h102v6h-102zM1301 214h90v6h-90zM1313 220h78v6h-78zM1319 226h72v6h-72zM1331 232h54v6h-54zM1343 238h42v6h-42zM1349 244h36v6h-36zM1361 250h18v6h-18zM1373 256h6v6h-6z"/><path fill="#009808" d="M1151 172h6v6h-6zM1151 178h18v6h-18zM1151 184h30v6h-30zM1151 190h42v6h-42zM1151 196h54v6h-54zM1157 202h60v6h-60zM1169 208h54v6h-54zM1181 214h54v6h-54zM1193 220h54v6h-54zM1205 226h54v6h-54zM1217 232h54v6h-54zM1235 238h48v6h-48zM1247 244h48v6h-48zM1259 250h48v6h-48zM1271 256h48v6h-48zM1283 262h48v6h-48zM1295 268h48v6h-48zM1313 274h42v6h-42zM1325 280h42v6h-42zM1337 286h36v6h-36zM1349 292h24v6h-24zM1361 298h6v6h-6z"/><path fill="#00980c" d="M1151 202h6v6h-6zM1151 208h18v6h-18zM1151 214h30v6h-30zM1151 220h42v6h-42zM1157 226h48v6h-48zM1169 232h48v6h-48zM1181 238h54v6h-54zM1199 244h48v6h-48zM1211 250h48v6h-48zM1229 256h42v6h-42zM1241 262h42v6h-42zM1253 268h42v6h-42zM1271 274h42v6h-42zM1283 280h42v6h-42zM1295 286h42v6h-42zM1313 292h36v6h-36zM1325 298h36v6h-36zM1343 304h24v6h-24zM1355 310h12v6h-12z"/><path fill="#049800" d="M1391 208h18v6h-18zM1391 214h18v6h-18zM1391 220h18v6h-18zM1391 226h12v6h-12zM1385 232h18v6h-18zM1385 238h18v6h-18zM1385 244h12v6h-12zM1379 250h18v6h-18zM1379 256h18v6h-18zM1379 262h12v6h-12z"/><path fill="#089800" d="M1409 214h6v6h-6zM1409 220h12v6h-12zM1403 226h12v6h-12zM1403 232h12v6h-12zM1403 238h12v6h-12zM1397 244h12v6h-12zM1397 250h12v6h-12zM1397 256h12v6h-12zM1391 262h12v6h-12zM1391 268h12v6h-12z"/><path fill="#0c9800" d="M1421 220h6v6h-6zM1415 226h12v6h-12zM1415 232h12v6h-12zM1415 238h6v6h-6zM1409 244h12v6h-12zM1409 250h12v6h-12zM1409 256h6v6h-6zM1403 262h12v6h-12zM1403 268h6v6h-6zM1403 274h6v6h-6z"/><path fill="#009810" d="M1151 226h6v6h-6zM1151 232h18v6h-18zM1151 238h30v6h-30zM1151 244h48v6h-48zM1163 250h48v6h-48zM1181 256h48v6h-48zM1199 262h42v6h-42zM1211 268h42v6h-42zM1229 274h42v6h-42zM1241 280h42v6h-42zM1259 286h36v6h-36zM1277 292h36v6h-36zM1289 298h36v6h-36zM1307 304h36v6h-36zM1319 310h36v6h-36zM1337 316h24v6h-24zM1355 322h6v6h-6z"/><path fill="#109800" d="M1427 226h6v6h-6zM1427 232h6v6h-6zM1421 238h12v6h-12zM1421 244h6v6h-6zM1421 250h6v6h-6zM1415 256h12v6h-12zM1415 262h6v6h-6zM1409 268h12v6h-12zM1409 274h6v6h-6z"/><path fill="#149800" d="M1433 232h12v6h-12zM1433 238h6v6h-6zM1427 244h12v6h-12zM1427 250h6v6h-6zM1427 256h6v6h-6zM1421 262h6v6h-6zM1421 268h6v6h-6zM1415 274h12v6h-12zM1415 280h6v6h-6z"/><path fill="#189800" d="M1439 238h6v6h-6zM1439 244h6v6h-6zM1433 250h12v6h-12zM1433 256h6v6h-6zM1427 262h12v6h-12zM1427 268h6v6h-6zM1427 274h6v6h-6zM1421 280h6v6h-6zM1421 286h6v6h-6z"/><path fill="#1c9800" d="M1445 238h6v6h-6zM1445 244h6v6h-6zM1445 250h6v6h-6zM1439 256h6v6h-6zM1439 262h6v6h-6zM1433 268h6v6h-6zM1433 274h6v6h-6zM1427 280h6v6h-6zM1427 286h6v6h-6z"/><path fill="#209800" d="M1451 244h6v6h-6zM1451 250h6v6h-6zM1445 256h6v6h-6zM1445 262h6v6h-6zM1439 268h6v6h-6zM1439 274h6v6h-6zM1433 280h6v6h-6zM1433 286h6v6h-6zM1433 292h6v6h-6z"/><path fill="#009814" d="M1151 250h12v6h-12zM1151 256h30v6h-30zM1151 262h48v6h-48zM1169 268h42v6h-42zM1187 274h42v6h-42zM1205 280h36v6h-36zM1223 286h36v6h-36zM1235 292h42v6h-42zM1253 298h36v6h-36zM1271 304h36v6h-36zM1289 310h30v6h-30zM1307 316h30v6h-30zM1319 322h36v6h-36zM1337 328h24v6h-24zM1355 334h6v6h-6z"/><path fill="#249800" d="M1457 250h6v6h-6zM1451 256h6v6h-6zM1451 262h6v6h-6zM1445 268h6v6h-6zM1445 274h6v6h-6zM1439 280h6v6h-6zM1439 286h6v6h-6z"/><path fill="#289800" d="M1463 250h6v6h-6zM1457 256h6v6h-6zM1457 262h6v6h-6zM1451 268h6v6h-6zM1451 274h6v6h-6zM1445 280h6v6h-6zM1445 286h6v6h-6zM1439 292h6v6h-6z"/><path fill="#2c9800" d="M1463 256h6v6h-6zM1463 262h6v6h-6zM1457 268h6v6h-6zM1457 274h6v6h-6zM1451 280h6v6h-6zM1451 286h6v6h-6zM1445 292h6v6h-6zM1445 298h6v6h-6z"/><path fill="#309800" d="M1469 256h6v6h-6zM1469 262h6v6h-6zM1463 268h6v6h-6zM1463 274h6v6h-6zM1457 280h6v6h-6zM1457 286h6v6h-6zM1451 292h6v6h-6zM1451 298h6v6h-6z"/><path fill="#349800" d="M1475 262h6v6h-6zM1469 268h6v6h-6zM1463 280h6v6h-6zM1457 292h6v6h-6zM1451 304h6v6h-6z"/><path fill="#009818" d="M1151 268h18v6h-18zM1151 274h36v6h-36zM1163 280h42v6h-42zM1181 286h42v6h-42zM1199 292h36v6h-36zM1217 298h36v6h-36zM1235 304h36v6h-36zM1253 310h36v6h-36zM1271 316h36v6h-36zM1289 322h30v6h-30zM1307 328h30v6h-30zM1325 334h30v6h-30zM1343 340h12v6h-12z"/><path fill="#049804" d="M1379 268h12v6h-12zM1373 274h18v6h-18zM1373 280h12v6h-12zM1379 286h6v6h-6z"/><path fill="#389800" d="M1475 268h6v6h-6zM1469 274h6v6h-6zM1469 280h6v6h-6zM1463 286h6v6h-6zM1463 292h6v6h-6zM1457 298h6v6h-6z"/><path fill="#3c9800" d="M1481 268h6v6h-6zM1475 274h6v6h-6zM1469 286h6v6h-6zM1463 298h6v6h-6zM1457 304h6v6h-6z"/><path fill="#089804" d="M1391 274h6v6h-6zM1385 280h12v6h-12zM1385 286h12v6h-12z"/><path fill="#0c9804" d="M1397 274h6v6h-6zM1397 280h12v6h-12zM1397 286h6v6h-6zM1397 292h6v6h-6z"/><path fill="#409800" d="M1481 274h6v6h-6zM1475 280h6v6h-6zM1475 286h6v6h-6zM1469 292h6v6h-6zM1463 304h6v6h-6z"/><path fill="#449800" d="M1487 274h6v6h-6zM1481 280h6v6h-6zM1475 292h6v6h-6zM1469 298h6v6h-6zM1469 304h6v6h-6zM1463 310h6v6h-6z"/><path fill="#4c9800" d="M1493 274h6v6h-6zM1487 286h6v6h-6zM1481 292h6v6h-6zM1475 304h6v6h-6z"/><path fill="#00981c" d="M1151 280h12v6h-12zM1151 286h30v6h-30zM1157 292h42v6h-42zM1175 298h42v6h-42zM1199 304h36v6h-36zM1217 310h36v6h-36zM1235 316h36v6h-36zM1259 322h30v6h-30zM1277 328h30v6h-30zM1295 334h30v6h-30zM1313 340h30v6h-30zM1337 346h18v6h-18z"/><path fill="#109804" d="M1409 280h6v6h-6zM1403 286h12v6h-12zM1403 292h6v6h-6zM1403 298h6v6h-6z"/><path fill="#489800" d="M1487 280h6v6h-6zM1481 286h6v6h-6zM1475 298h6v6h-6zM1469 310h6v6h-6z"/><path fill="#509800" d="M1493 280h6v6h-6zM1487 292h6v6h-6zM1481 298h6v6h-6zM1475 310h6v6h-6z"/><path fill="#549800" d="M1499 280h6v6h-6zM1493 286h6v6h-6zM1487 298h6v6h-6zM1481 304h6v6h-6zM1475 316h6v6h-6z"/><path fill="#049808" d="M1373 286h6v6h-6zM1373 292h12v6h-12zM1367 298h12v6h-12zM1373 304h6v6h-6z"/><path fill="#149804" d="M1415 286h6v6h-6zM1409 292h6v6h-6zM1409 298h6v6h-6z"/><path fill="#589800" d="M1499 286h6v6h-6zM1493 292h6v6h-6zM1487 304h6v6h-6zM1481 310h6v6h-6z"/><path fill="#609800" d="M1505 286h6v6h-6zM1499 292h6v6h-6zM1493 304h6v6h-6zM1487 310h6v6h-6zM1481 322h6v6h-6z"/><path fill="#689800" d="M1511 286h6v6h-6zM1499 304h6v6h-6zM1487 322h6v6h-6z"/><path fill="#009820" d="M1151 292h6v6h-6zM1151 298h24v6h-24zM1157 304h42v6h-42zM1181 310h36v6h-36zM1199 316h36v6h-36zM1223 322h36v6h-36zM1241 328h36v6h-36zM1265 334h30v6h-30zM1283 340h30v6h-30zM1307 346h30v6h-30zM1325 352h30v6h-30zM1349 358h6v6h-6z"/><path fill="#089808" d="M1385 292h6v6h-6zM1379 298h6v6h-6zM1379 304h6v6h-6z"/><path fill="#189804" d="M1415 292h12v6h-12zM1415 298h6v6h-6zM1415 304h6v6h-6z"/><path fill="#1c9804" d="M1427 292h6v6h-6zM1421 298h6v6h-6zM1421 304h6v6h-6z"/><path fill="#649800" d="M1505 292h6v6h-6zM1499 298h6v6h-6zM1493 310h6v6h-6zM1487 316h6v6h-6z"/><path fill="#6c9800" d="M1511 292h6v6h-6zM1505 298h6v6h-6zM1499 310h6v6h-6zM1493 316h6v6h-6z"/><path fill="#749800" d="M1517 292h6v6h-6zM1505 310h6v6h-6zM1499 316h6v6h-6z"/><path fill="#209804" d="M1427 298h6v6h-6zM1427 304h6v6h-6zM1421 310h6v6h-6z"/><path fill="#249804" d="M1433 298h6v6h-6zM1433 304h6v6h-6zM1427 310h6v6h-6z"/><path fill="#289804" d="M1439 298h6v6h-6zM1433 310h6v6h-6z"/><path fill="#5c9800" d="M1493 298h6v6h-6zM1481 316h6v6h-6z"/><path fill="#709800" d="M1511 298h6v6h-6zM1505 304h6v6h-6zM1493 322h6v6h-6z"/><path fill="#789800" d="M1517 298h6v6h-6zM1511 304h6v6h-6zM1499 322h6v6h-6zM1493 328h6v6h-6z"/><path fill="#849800" d="M1523 298h6v6h-6zM1511 316h6v6h-6zM1505 322h6v6h-6z"/><path fill="#8c9800" d="M1529 298h6v6h-6zM1517 316h6v6h-6zM1511 322h6v6h-6z"/><path fill="#009824" d="M1151 304h6v6h-6zM1151 310h30v6h-30zM1163 316h36v6h-36zM1187 322h36v6h-36zM1211 328h30v6h-30zM1229 334h36v6h-36zM1253 340h30v6h-30zM1277 346h30v6h-30zM1301 352h24v6h-24zM1319 358h30v6h-30zM1343 364h6v6h-6z"/><path fill="#04980c" d="M1367 304h6v6h-6zM1367 310h12v6h-12zM1367 316h6v6h-6z"/><path fill="#2c9804" d="M1439 304h6v6h-6zM1439 310h6v6h-6zM1433 316h6v6h-6z"/><path fill="#309804" d="M1445 304h6v6h-6zM1439 316h6v6h-6z"/><path fill="#809800" d="M1517 304h6v6h-6zM1499 328h6v6h-6z"/><path fill="#889800" d="M1523 304h6v6h-6zM1517 310h6v6h-6zM1505 328h6v6h-6z"/><path fill="#909800" d="M1529 304h6v6h-6zM1523 310h6v6h-6zM1505 334h6v6h-6z"/><path fill="#989800" d="M1535 304h6v6h-6zM1529 310h6v6h-6zM1523 316h6v6h-6zM1511 334h6v6h-6z"/><path fill="#08980c" d="M1379 310h6v6h-6zM1373 316h12v6h-12z"/><path fill="#349804" d="M1445 310h6v6h-6zM1445 316h6v6h-6z"/><path fill="#389804" d="M1451 310h6v6h-6zM1445 322h6v6h-6z"/><path fill="#3c9804" d="M1457 310h6v6h-6zM1451 316h6v6h-6z"/><path fill="#7c9800" d="M1511 310h6v6h-6zM1505 316h6v6h-6z"/><path fill="#989000" d="M1535 310h6v6h-6zM1529 316h6v6h-6zM1511 340h6v6h-6z"/><path fill="#988800" d="M1541 310h6v6h-6zM1535 316h6v6h-6zM1529 322h6v6h-6z"/><path fill="#009828" d="M1151 316h12v6h-12zM1151 322h36v6h-36zM1175 328h36v6h-36zM1199 334h30v6h-30zM1223 340h30v6h-30zM1247 346h30v6h-30zM1271 352h30v6h-30zM1295 358h24v6h-24zM1319 364h24v6h-24zM1343 370h6v6h-6z"/><path fill="#049810" d="M1361 316h6v6h-6zM1361 322h12v6h-12zM1367 328h6v6h-6z"/><path fill="#409804" d="M1457 316h6v6h-6zM1451 322h6v6h-6z"/><path fill="#489804" d="M1463 316h6v6h-6zM1457 328h6v6h-6z"/><path fill="#4c9804" d="M1469 316h6v6h-6zM1463 322h6v6h-6z"/><path fill="#988000" d="M1541 316h6v6h-6zM1535 322h6v6h-6zM1517 346h6v6h-6z"/><path fill="#987800" d="M1547 316h6v6h-6zM1541 322h6v6h-6zM1523 346h6v6h-6z"/><path fill="#987000" d="M1553 316h6v6h-6zM1535 340h6v6h-6zM1529 346h6v6h-6z"/><path fill="#089810" d="M1373 322h6v6h-6zM1373 328h6v6h-6z"/><path fill="#349808" d="M1439 322h6v6h-6z"/><path fill="#449804" d="M1457 322h6v6h-6z"/><path fill="#509804" d="M1469 322h6v6h-6zM1463 328h6v6h-6z"/><path fill="#589804" d="M1475 322h6v6h-6zM1469 328h6v6h-6z"/><path fill="#949800" d="M1517 322h6v6h-6zM1511 328h6v6h-6z"/><path fill="#989400" d="M1523 322h6v6h-6zM1517 328h6v6h-6z"/><path fill="#987400" d="M1547 322h6v6h-6zM1541 328h6v6h-6zM1535 334h6v6h-6zM1529 340h6v6h-6z"/><path fill="#986c00" d="M1553 322h6v6h-6zM1547 328h6v6h-6zM1541 334h6v6h-6z"/><path fill="#986800" d="M1559 322h6v6h-6zM1553 328h6v6h-6zM1547 334h6v6h-6zM1541 340h6v6h-6zM1535 346h6v6h-6zM1529 352h6v6h-6z"/><path fill="#00982c" d="M1151 328h24v6h-24zM1163 334h36v6h-36zM1187 340h36v6h-36zM1211 346h36v6h-36zM1241 352h30v6h-30zM1265 358h30v6h-30zM1289 364h30v6h-30zM1313 370h30v6h-30zM1343 376h6v6h-6z"/><path fill="#049814" d="M1361 328h6v6h-6zM1361 334h12v6h-12z"/><path fill="#409808" d="M1451 328h6v6h-6z"/><path fill="#609804" d="M1475 328h6v6h-6z"/><path fill="#649804" d="M1481 328h6v6h-6zM1475 334h6v6h-6z"/><path fill="#709804" d="M1487 328h6v6h-6zM1481 340h6v6h-6z"/><path fill="#988c00" d="M1523 328h6v6h-6zM1517 334h6v6h-6z"/><path fill="#988400" d="M1529 328h6v6h-6zM1523 334h6v6h-6zM1517 340h6v6h-6z"/><path fill="#987c00" d="M1535 328h6v6h-6zM1529 334h6v6h-6zM1523 340h6v6h-6z"/><path fill="#986000" d="M1559 328h6v6h-6zM1553 334h6v6h-6zM1547 340h6v6h-6zM1541 346h6v6h-6z"/><path fill="#985c00" d="M1565 328h6v6h-6zM1559 334h6v6h-6zM1553 340h6v6h-6zM1547 346h6v6h-6zM1541 352h6v6h-6zM1535 358h6v6h-6z"/><path fill="#009830" d="M1151 334h12v6h-12zM1151 340h36v6h-36zM1181 346h30v6h-30zM1205 352h36v6h-36zM1235 358h30v6h-30zM1259 364h30v6h-30zM1289 370h24v6h-24zM1313 376h30v6h-30z"/><path fill="#089814" d="M1373 334h6v6h-6zM1373 340h6v6h-6z"/><path fill="#4c9808" d="M1457 334h6v6h-6z"/><path fill="#549808" d="M1463 334h6v6h-6z"/><path fill="#5c9804" d="M1469 334h6v6h-6z"/><path fill="#6c9804" d="M1481 334h6v6h-6z"/><path fill="#749804" d="M1487 334h6v6h-6z"/><path fill="#7c9804" d="M1493 334h6v6h-6zM1487 340h6v6h-6z"/><path fill="#889804" d="M1499 334h6v6h-6z"/><path fill="#985800" d="M1565 334h6v6h-6zM1559 340h6v6h-6zM1553 346h6v6h-6zM1547 352h6v6h-6zM1541 358h6v6h-6z"/><path fill="#985000" d="M1571 334h6v6h-6zM1565 340h6v6h-6zM1559 346h6v6h-6zM1553 352h6v6h-6zM1547 358h6v6h-6zM1541 364h6v6h-6z"/><path fill="#049818" d="M1355 340h12v6h-12zM1361 346h6v6h-6z"/><path fill="#089818" d="M1367 340h6v6h-6zM1367 346h6v6h-6z"/><path fill="#609808" d="M1469 340h6v6h-6z"/><path fill="#689808" d="M1475 340h6v6h-6z"/><path fill="#849804" d="M1493 340h6v6h-6z"/><path fill="#909804" d="M1499 340h6v6h-6z"/><path fill="#989804" d="M1505 340h6v6h-6zM1499 346h6v6h-6z"/><path fill="#984c00" d="M1571 340h6v6h-6zM1565 346h6v6h-6zM1559 352h6v6h-6zM1553 358h6v6h-6zM1547 364h6v6h-6z"/><path fill="#984800" d="M1577 340h6v6h-6zM1571 346h6v6h-6zM1565 352h6v6h-6zM1559 358h6v6h-6zM1553 364h6v6h-6zM1547 370h6v6h-6z"/><path fill="#984400" d="M1583 340h6v6h-6zM1577 346h6v6h-6zM1571 352h6v6h-6zM1565 358h6v6h-6zM1559 364h6v6h-6zM1553 370h6v6h-6z"/><path fill="#009834" d="M1151 346h30v6h-30zM1169 352h36v6h-36zM1199 358h36v6h-36zM1229 364h30v6h-30zM1259 370h30v6h-30zM1289 376h24v6h-24zM1319 382h24v6h-24z"/><path fill="#04981c" d="M1355 346h6v6h-6zM1355 352h12v6h-12z"/><path fill="#709808" d="M1475 346h6v6h-6z"/><path fill="#789808" d="M1481 346h6v6h-6z"/><path fill="#849808" d="M1487 346h6v6h-6z"/><path fill="#8c9804" d="M1493 346h6v6h-6z"/><path fill="#989004" d="M1505 346h6v6h-6z"/><path fill="#988804" d="M1511 346h6v6h-6zM1505 352h6v6h-6z"/><path fill="#984000" d="M1583 346h6v6h-6zM1577 352h6v6h-6zM1571 358h6v6h-6zM1565 364h6v6h-6zM1559 370h6v6h-6z"/><path fill="#983c00" d="M1589 346h6v6h-6zM1583 352h6v6h-6zM1577 358h6v6h-6zM1571 364h6v6h-6zM1565 370h6v6h-6zM1559 376h6v6h-6z"/><path fill="#009838" d="M1151 352h18v6h-18zM1163 358h36v6h-36zM1199 364h30v6h-30zM1229 370h30v6h-30zM1259 376h30v6h-30zM1289 382h30v6h-30zM1325 388h18v6h-18z"/><path fill="#08981c" d="M1367 352h6v6h-6z"/><path fill="#889808" d="M1487 352h6v6h-6z"/><path fill="#949808" d="M1493 352h6v6h-6z"/><path fill="#989408" d="M1499 352h6v6h-6zM1493 358h6v6h-6z"/><path fill="#988004" d="M1511 352h6v6h-6z"/><path fill="#987804" d="M1517 352h6v6h-6zM1511 358h6v6h-6z"/><path fill="#987004" d="M1523 352h6v6h-6zM1517 358h6v6h-6z"/><path fill="#986400" d="M1535 352h6v6h-6z"/><path fill="#983800" d="M1589 352h12v6h-12zM1583 358h12v6h-12zM1577 364h6v6h-6zM1571 370h6v6h-6zM1565 376h6v6h-6z"/><path fill="#00983c" d="M1151 358h12v6h-12zM1163 364h36v6h-36zM1193 370h36v6h-36zM1229 376h30v6h-30zM1259 382h30v6h-30zM1295 388h30v6h-30zM1331 394h12v6h-12z"/><path fill="#049820" d="M1355 358h6v6h-6z"/><path fill="#089820" d="M1361 358h12v6h-12z"/><path fill="#988c08" d="M1499 358h6v6h-6z"/><path fill="#988008" d="M1505 358h6v6h-6z"/><path fill="#986804" d="M1523 358h6v6h-6zM1517 364h6v6h-6z"/><path fill="#986404" d="M1529 358h6v6h-6zM1523 364h6v6h-6z"/><path fill="#983400" d="M1595 358h6v6h-6zM1583 364h12v6h-12zM1577 370h12v6h-12zM1571 376h6v6h-6zM1565 382h6v6h-6z"/><path fill="#983000" d="M1601 358h12v6h-12zM1595 364h6v6h-6zM1589 370h6v6h-6zM1577 376h12v6h-12zM1571 382h12v6h-12z"/><path fill="#009840" d="M1151 364h12v6h-12zM1157 370h36v6h-36zM1193 376h36v6h-36zM1229 382h30v6h-30zM1265 388h30v6h-30zM1301 394h30v6h-30zM1337 400h6v6h-6z"/><path fill="#049824" d="M1349 364h12v6h-12z"/><path fill="#089824" d="M1361 364h6v6h-6z"/><path fill="#0c9820" d="M1367 364h6v6h-6z"/><path fill="#987808" d="M1505 364h6v6h-6z"/><path fill="#987008" d="M1511 364h6v6h-6z"/><path fill="#985c04" d="M1529 364h6v6h-6zM1523 370h6v6h-6z"/><path fill="#985804" d="M1535 364h6v6h-6zM1529 370h6v6h-6z"/><path fill="#982c00" d="M1601 364h12v6h-12zM1595 370h12v6h-12zM1589 376h6v6h-6zM1583 382h6v6h-6zM1571 388h12v6h-12z"/><path fill="#982800" d="M1613 364h6v6h-6zM1607 370h6v6h-6zM1595 376h12v6h-12zM1589 382h12v6h-12zM1583 388h12v6h-12zM1577 394h6v6h-6z"/><path fill="#009844" d="M1151 370h6v6h-6zM1157 376h36v6h-36zM1199 382h30v6h-30zM1235 388h30v6h-30zM1277 394h24v6h-24zM1313 400h24v6h-24z"/><path fill="#049828" d="M1349 370h12v6h-12z"/><path fill="#089828" d="M1361 370h6v6h-6z"/><path fill="#986c08" d="M1511 370h6v6h-6z"/><path fill="#986408" d="M1517 370h6v6h-6z"/><path fill="#985004" d="M1535 370h6v6h-6zM1529 376h6v6h-6z"/><path fill="#984c04" d="M1541 370h6v6h-6zM1535 376h6v6h-6z"/><path fill="#982400" d="M1613 370h12v6h-12zM1607 376h12v6h-12zM1601 382h12v6h-12zM1595 388h6v6h-6zM1583 394h12v6h-12z"/><path fill="#009848" d="M1151 376h6v6h-6zM1163 382h36v6h-36zM1205 388h30v6h-30zM1241 394h36v6h-36zM1283 400h30v6h-30zM1325 406h12v6h-12z"/><path fill="#04982c" d="M1349 376h6v6h-6z"/><path fill="#08982c" d="M1355 376h12v6h-12z"/><path fill="#985808" d="M1523 376h6v6h-6z"/><path fill="#984804" d="M1541 376h6v6h-6zM1535 382h6v6h-6z"/><path fill="#984404" d="M1547 376h6v6h-6zM1541 382h6v6h-6z"/><path fill="#984004" d="M1553 376h6v6h-6zM1547 382h6v6h-6zM1541 388h6v6h-6z"/><path fill="#982000" d="M1619 376h12v6h-12zM1613 382h12v6h-12zM1601 388h18v6h-18zM1595 394h12v6h-12zM1589 400h12v6h-12z"/><path fill="#981c00" d="M1631 376h6v6h-6zM1625 382h12v6h-12zM1619 388h12v6h-12zM1607 394h18v6h-18zM1601 400h12v6h-12zM1595 406h12v6h-12z"/><path fill="#00984c" d="M1151 382h12v6h-12zM1169 388h36v6h-36zM1211 394h30v6h-30zM1253 400h30v6h-30zM1295 406h30v6h-30z"/><path fill="#049830" d="M1343 382h12v6h-12z"/><path fill="#089830" d="M1355 382h6v6h-6z"/><path fill="#0c9830" d="M1361 382h6v6h-6z"/><path fill="#984c08" d="M1529 382h6v6h-6z"/><path fill="#983c04" d="M1553 382h6v6h-6zM1547 388h6v6h-6z"/><path fill="#983804" d="M1559 382h6v6h-6zM1553 388h6v6h-6zM1547 394h6v6h-6z"/><path fill="#981800" d="M1637 382h6v6h-6zM1631 388h18v6h-18zM1625 394h12v6h-12zM1613 400h18v6h-18zM1607 406h12v6h-12zM1601 412h12v6h-12z"/><path fill="#009850" d="M1151 388h18v6h-18zM1175 394h36v6h-36zM1223 400h30v6h-30zM1265 406h30v6h-30zM1313 412h24v6h-24z"/><path fill="#049838" d="M1343 388h6v6h-6z"/><path fill="#049834" d="M1349 388h6v6h-6z"/><path fill="#089834" d="M1355 388h6v6h-6z"/><path fill="#0c9834" d="M1361 388h6v6h-6z"/><path fill="#983404" d="M1559 388h6v6h-6zM1553 394h6v6h-6z"/><path fill="#983004" d="M1565 388h6v6h-6zM1559 394h6v6h-6z"/><path fill="#009854" d="M1151 394h24v6h-24zM1187 400h36v6h-36zM1235 406h30v6h-30zM1283 412h30v6h-30z"/><path fill="#04983c" d="M1343 394h6v6h-6z"/><path fill="#08983c" d="M1349 394h6v6h-6z"/><path fill="#089838" d="M1355 394h6v6h-6z"/><path fill="#0c9838" d="M1361 394h6v6h-6z"/><path fill="#982c04" d="M1565 394h12v6h-12zM1559 400h6v6h-6z"/><path fill="#981400" d="M1637 394h24v6h-24zM1631 400h18v6h-18zM1619 406h18v6h-18zM1613 412h18v6h-18zM1607 418h12v6h-12z"/><path fill="#009858" d="M1151 400h36v6h-36zM1199 406h36v6h-36zM1253 412h30v6h-30zM1307 418h30v6h-30z"/><path fill="#049840" d="M1343 400h6v6h-6z"/><path fill="#089840" d="M1349 400h6v6h-6z"/><path fill="#0c9840" d="M1355 400h6v6h-6z"/><path fill="#982804" d="M1565 400h12v6h-12zM1565 406h6v6h-6z"/><path fill="#982404" d="M1577 400h12v6h-12zM1571 406h6v6h-6z"/><path fill="#981000" d="M1649 400h18v6h-18zM1637 406h24v6h-24zM1631 412h18v6h-18zM1619 418h24v6h-24zM1619 424h12v6h-12z"/><path fill="#009860" d="M1151 406h12v6h-12zM1181 412h36v6h-36zM1241 418h36v6h-36zM1301 424h30v6h-30z"/><path fill="#00985c" d="M1163 406h36v6h-36zM1217 412h36v6h-36zM1277 418h30v6h-30z"/><path fill="#049848" d="M1337 406h12v6h-12z"/><path fill="#089844" d="M1349 406h6v6h-6z"/><path fill="#0c9844" d="M1355 406h6v6h-6z"/><path fill="#982004" d="M1577 406h12v6h-12zM1577 412h6v6h-6z"/><path fill="#981c04" d="M1589 406h6v6h-6zM1583 412h12v6h-12zM1583 418h6v6h-6z"/><path fill="#980c00" d="M1661 406h12v6h-12zM1649 412h30v6h-30zM1643 418h24v6h-24zM1631 424h30v6h-30zM1625 430h24v6h-24zM1631 436h6v6h-6z"/><path fill="#009864" d="M1151 412h30v6h-30zM1205 418h36v6h-36zM1271 424h30v6h-30z"/><path fill="#049850" d="M1337 412h6v6h-6z"/><path fill="#08984c" d="M1343 412h12v6h-12z"/><path fill="#10984c" d="M1355 412h6v6h-6z"/><path fill="#981804" d="M1595 412h6v6h-6zM1589 418h12v6h-12z"/><path fill="#980800" d="M1679 412h6v6h-6zM1667 418h24v6h-24zM1661 424h36v6h-36zM1649 430h36v6h-36zM1637 436h36v6h-36zM1637 442h24v6h-24z"/><path fill="#00986c" d="M1151 418h6v6h-6zM1187 424h48v6h-48zM1271 430h36v6h-36z"/><path fill="#009868" d="M1157 418h48v6h-48zM1235 424h36v6h-36zM1307 430h24v6h-24z"/><path fill="#049854" d="M1337 418h6v6h-6z"/><path fill="#089854" d="M1343 418h6v6h-6z"/><path fill="#0c9854" d="M1349 418h6v6h-6z"/><path fill="#109854" d="M1355 418h6v6h-6z"/><path fill="#981404" d="M1601 418h6v6h-6zM1595 424h18v6h-18z"/><path fill="#009870" d="M1151 424h36v6h-36zM1229 430h42v6h-42zM1313 436h18v6h-18z"/><path fill="#04985c" d="M1331 424h12v6h-12z"/><path fill="#08985c" d="M1343 424h6v6h-6z"/><path fill="#0c985c" d="M1349 424h6v6h-6z"/><path fill="#981004" d="M1613 424h6v6h-6zM1601 430h18v6h-18z"/><path fill="#009878" d="M1157 430h24v6h-24zM1229 436h48v6h-48z"/><path fill="#009874" d="M1181 430h48v6h-48zM1277 436h36v6h-36z"/><path fill="#049868" d="M1331 430h6v6h-6z"/><path fill="#089864" d="M1337 430h12v6h-12z"/><path fill="#109864" d="M1349 430h6v6h-6z"/><path fill="#980c04" d="M1619 430h6v6h-6zM1613 436h18v6h-18zM1619 442h6v6h-6z"/><path fill="#980400" d="M1685 430h24v6h-24zM1673 436h42v6h-42zM1661 442h54v6h-54zM1649 448h54v6h-54zM1655 454h30v6h-30zM1661 460h12v6h-12z"/><path fill="#009880" d="M1157 436h18v6h-18zM1241 442h48v6h-48z"/><path fill="#00987c" d="M1175 436h54v6h-54zM1289 442h42v6h-42z"/><path fill="#049870" d="M1331 436h6v6h-6z"/><path fill="#089870" d="M1337 436h6v6h-6z"/><path fill="#0c9870" d="M1343 436h6v6h-6z"/><path fill="#10986c" d="M1349 436h6v6h-6z"/><path fill="#009888" d="M1157 442h24v6h-24zM1271 448h54v6h-54z"/><path fill="#009884" d="M1181 442h60v6h-60z"/><path fill="#049878" d="M1331 442h6v6h-6z"/><path fill="#089878" d="M1337 442h6v6h-6z"/><path fill="#0c9878" d="M1343 442h6v6h-6z"/><path fill="#149878" d="M1349 442h6v6h-6z"/><path fill="#980804" d="M1625 442h12v6h-12zM1631 448h18v6h-18zM1625 454h12v6h-12zM1613 460h12v6h-12z"/><path fill="#980000" d="M1715 442h6v6h-6zM1703 448h30v6h-30zM1685 454h60v6h-60zM1673 460h78v6h-78zM1667 466h90v6h-90zM1679 472h90v6h-90zM1685 478h90v6h-90zM1691 484h90v6h-90zM1697 490h84v6h-84zM1703 496h78v6h-78zM1715 502h66v6h-66zM1721 508h60v6h-60zM1727 514h36v6h-36zM1733 520h12v6h-12z"/><path fill="#009890" d="M1157 448h42v6h-42z"/><path fill="#00988c" d="M1199 448h72v6h-72z"/><path fill="#049884" d="M1325 448h12v6h-12z"/><path fill="#0c9884" d="M1337 448h6v6h-6z"/><path fill="#109884" d="M1343 448h6v6h-6z"/><path fill="#009898" d="M1163 454h90v6h-90z"/><path fill="#009894" d="M1253 454h72v6h-72z"/><path fill="#049894" d="M1325 454h6v6h-6z"/><path fill="#089890" d="M1331 454h6v6h-6z"/><path fill="#0c9890" d="M1337 454h6v6h-6z"/><path fill="#109890" d="M1343 454h6v6h-6z"/><path fill="#980404" d="M1637 454h18v6h-18zM1625 460h36v6h-36zM1619 466h42v6h-42zM1625 472h18v6h-18z"/><path fill="#009098" d="M1163 460h150v6h-150z"/><path fill="#009498" d="M1313 460h12v6h-12z"/><path fill="#049498" d="M1325 460h6v6h-6z"/><path fill="#089498" d="M1331 460h6v6h-6z"/><path fill="#0c9498" d="M1337 460h6v6h-6z"/><path fill="#149498" d="M1343 460h6v6h-6z"/><path fill="#008898" d="M1163 466h96v6h-96z"/><path fill="#008498" d="M1259 466h66v6h-66z"/><path fill="#048498" d="M1325 466h6v6h-6z"/><path fill="#088498" d="M1331 466h6v6h-6z"/><path fill="#108498" d="M1337 466h6v6h-6z"/><path fill="#148498" d="M1343 466h6v6h-6z"/><path fill="#980808" d="M1595 466h18v6h-18zM1595 472h6v6h-6z"/><path fill="#980408" d="M1613 466h6v6h-6zM1601 472h24v6h-24zM1601 478h30v6h-30zM1607 484h12v6h-12z"/><path fill="#980004" d="M1661 466h6v6h-6zM1643 472h36v6h-36zM1637 478h48v6h-48zM1643 484h48v6h-48zM1649 490h48v6h-48zM1655 496h48v6h-48zM1661 502h54v6h-54zM1667 508h54v6h-54zM1673 514h54v6h-54zM1679 520h54v6h-54zM1685 526h48v6h-48zM1691 532h24v6h-24z"/><path fill="#007c98" d="M1163 472h156v6h-156z"/><path fill="#047898" d="M1319 472h12v6h-12z"/><path fill="#087898" d="M1331 472h6v6h-6z"/><path fill="#107898" d="M1337 472h6v6h-6z"/><path fill="#98080c" d="M1577 472h18v6h-18zM1583 478h6v6h-6z"/><path fill="#007498" d="M1169 478h96v6h-96z"/><path fill="#007098" d="M1265 478h54v6h-54z"/><path fill="#047098" d="M1319 478h6v6h-6z"/><path fill="#087098" d="M1325 478h6v6h-6z"/><path fill="#0c7098" d="M1331 478h6v6h-6z"/><path fill="#106c98" d="M1337 478h6v6h-6z"/><path fill="#980810" d="M1565 478h18v6h-18zM1565 484h6v6h-6z"/><path fill="#98040c" d="M1589 478h12v6h-12zM1583 484h24v6h-24zM1589 490h12v6h-12z"/><path fill="#980008" d="M1631 478h6v6h-6zM1619 484h24v6h-24zM1613 490h36v6h-36zM1619 496h36v6h-36zM1625 502h36v6h-36zM1631 508h36v6h-36zM1637 514h36v6h-36zM1643 520h36v6h-36zM1649 526h36v6h-36zM1655 532h36v6h-36zM1661 538h36v6h-36zM1661 544h18v6h-18z"/><path fill="#006c98" d="M1169 484h78v6h-78z"/><path fill="#006898" d="M1247 484h60v6h-60zM1169 490h12v6h-12z"/><path fill="#006498" d="M1307 484h12v6h-12zM1181 490h66v6h-66z"/><path fill="#046498" d="M1319 484h6v6h-6z"/><path fill="#086498" d="M1325 484h6v6h-6z"/><path fill="#0c6498" d="M1331 484h6v6h-6z"/><path fill="#106498" d="M1337 484h6v6h-6z"/><path fill="#980818" d="M1547 484h6v6h-6zM1541 490h18v6h-18z"/><path fill="#980814" d="M1553 484h12v6h-12z"/><path fill="#980410" d="M1571 484h12v6h-12zM1571 490h18v6h-18zM1577 496h12v6h-12z"/><path fill="#006098" d="M1247 490h48v6h-48zM1169 496h30v6h-30z"/><path fill="#005c98" d="M1295 490h24v6h-24zM1199 496h48v6h-48z"/><path fill="#045c98" d="M1319 490h6v6h-6z"/><path fill="#085c98" d="M1325 490h6v6h-6z"/><path fill="#0c5c98" d="M1331 490h6v6h-6z"/><path fill="#105c9c" d="M1337 490h6v6h-6z"/><path fill="#98081c" d="M1535 490h6v6h-6zM1535 496h12v6h-12z"/><path fill="#980414" d="M1559 490h12v6h-12zM1559 496h18v6h-18zM1565 502h12v6h-12z"/><path fill="#98000c" d="M1601 490h12v6h-12zM1595 496h24v6h-24zM1601 502h24v6h-24zM1607 508h24v6h-24zM1613 514h24v6h-24zM1613 520h30v6h-30zM1619 526h30v6h-30zM1625 532h30v6h-30zM1631 538h30v6h-30zM1637 544h24v6h-24zM1643 550h18v6h-18z"/><path fill="#005c9c" d="M1247 496h6v6h-6z"/><path fill="#00589c" d="M1253 496h42v6h-42zM1175 502h42v6h-42z"/><path fill="#00549c" d="M1295 496h24v6h-24zM1217 502h42v6h-42zM1175 508h12v6h-12z"/><path fill="#04549c" d="M1319 496h6v6h-6z"/><path fill="#08549c" d="M1325 496h6v6h-6z"/><path fill="#0c549c" d="M1331 496h6v6h-6z"/><path fill="#980c24" d="M1517 496h6v6h-6z"/><path fill="#980824" d="M1523 496h6v6h-6zM1523 502h6v6h-6z"/><path fill="#980820" d="M1529 496h6v6h-6zM1529 502h6v6h-6z"/><path fill="#980418" d="M1547 496h12v6h-12zM1553 502h12v6h-12zM1553 508h6v6h-6z"/><path fill="#980010" d="M1589 496h6v6h-6zM1583 502h18v6h-18zM1583 508h24v6h-24zM1589 514h24v6h-24zM1595 520h18v6h-18zM1601 526h18v6h-18zM1601 532h24v6h-24zM1607 538h24v6h-24zM1613 544h24v6h-24zM1619 550h24v6h-24zM1625 556h18v6h-18zM1625 562h6v6h-6z"/><path fill="#00509c" d="M1259 502h42v6h-42zM1187 508h48v6h-48z"/><path fill="#004c9c" d="M1301 502h12v6h-12zM1235 508h42v6h-42zM1181 514h36v6h-36z"/><path fill="#044c9c" d="M1313 502h12v6h-12z"/><path fill="#084c9c" d="M1325 502h6v6h-6z"/><path fill="#0c4c9c" d="M1331 502h6v6h-6z"/><path fill="#980c30" d="M1499 502h6v6h-6zM1499 508h6v6h-6z"/><path fill="#980c2c" d="M1505 502h6v6h-6z"/><path fill="#980c28" d="M1511 502h6v6h-6z"/><path fill="#980828" d="M1517 502h6v6h-6zM1517 508h6v6h-6z"/><path fill="#980420" d="M1535 502h6v6h-6zM1535 508h6v6h-6zM1535 514h12v6h-12z"/><path fill="#98041c" d="M1541 502h12v6h-12zM1541 508h12v6h-12z"/><path fill="#980014" d="M1577 502h6v6h-6zM1571 508h12v6h-12zM1571 514h18v6h-18zM1577 520h18v6h-18zM1583 526h18v6h-18zM1589 532h12v6h-12zM1589 538h18v6h-18zM1595 544h18v6h-18zM1601 550h18v6h-18zM1601 556h24v6h-24zM1607 562h18v6h-18z"/><path fill="#00489c" d="M1277 508h36v6h-36zM1217 514h36v6h-36zM1181 520h18v6h-18z"/><path fill="#04449c" d="M1313 508h6v6h-6z"/><path fill="#08449c" d="M1319 508h6v6h-6z"/><path fill="#0c44a0" d="M1325 508h6v6h-6z"/><path fill="#1044a0" d="M1331 508h6v6h-6z"/><path fill="#980c3c" d="M1487 508h6v6h-6zM1487 514h6v6h-6z"/><path fill="#980c34" d="M1493 508h6v6h-6z"/><path fill="#980830" d="M1505 508h6v6h-6zM1505 514h6v6h-6z"/><path fill="#98082c" d="M1511 508h6v6h-6z"/><path fill="#980424" d="M1523 508h12v6h-12zM1529 514h6v6h-6zM1529 520h6v6h-6z"/><path fill="#980018" d="M1559 508h12v6h-12zM1559 514h12v6h-12zM1565 520h12v6h-12zM1565 526h18v6h-18zM1571 532h18v6h-18zM1577 538h12v6h-12zM1577 544h18v6h-18zM1583 550h18v6h-18zM1589 556h12v6h-12zM1589 562h18v6h-18zM1595 568h18v6h-18z"/><path fill="#00449c" d="M1253 514h18v6h-18zM1199 520h18v6h-18z"/><path fill="#0044a0" d="M1271 514h18v6h-18zM1217 520h24v6h-24zM1181 526h6v6h-6z"/><path fill="#0040a0" d="M1289 514h24v6h-24zM1241 520h36v6h-36zM1187 526h42v6h-42z"/><path fill="#0440a0" d="M1313 514h6v6h-6z"/><path fill="#0840a0" d="M1319 514h6v6h-6z"/><path fill="#0c3ca0" d="M1325 514h6v6h-6z"/><path fill="#103ca0" d="M1331 514h6v6h-6z"/><path fill="#98104c" d="M1469 514h6v6h-6z"/><path fill="#980c44" d="M1475 514h6v6h-6z"/><path fill="#980c40" d="M1481 514h6v6h-6z"/><path fill="#980838" d="M1493 514h6v6h-6zM1493 520h6v6h-6z"/><path fill="#980834" d="M1499 514h6v6h-6z"/><path fill="#98042c" d="M1511 514h6v6h-6zM1517 520h6v6h-6z"/><path fill="#980428" d="M1517 514h12v6h-12zM1523 520h6v6h-6z"/><path fill="#98001c" d="M1547 514h12v6h-12zM1553 520h12v6h-12zM1553 526h12v6h-12zM1559 532h12v6h-12zM1559 538h18v6h-18zM1565 544h12v6h-12zM1571 550h12v6h-12zM1571 556h18v6h-18zM1577 562h12v6h-12zM1583 568h12v6h-12zM1583 574h12v6h-12z"/><path fill="#003ca0" d="M1277 520h30v6h-30zM1229 526h36v6h-36zM1187 532h30v6h-30z"/><path fill="#003ca4" d="M1307 520h6v6h-6zM1217 532h6v6h-6z"/><path fill="#0438a4" d="M1313 520h6v6h-6z"/><path fill="#0838a4" d="M1319 520h6v6h-6z"/><path fill="#0c38a4" d="M1325 520h6v6h-6z"/><path fill="#981464" d="M1451 520h6v6h-6z"/><path fill="#98105c" d="M1457 520h6v6h-6z"/><path fill="#981054" d="M1463 520h6v6h-6z"/><path fill="#980c4c" d="M1469 520h6v6h-6z"/><path fill="#980c48" d="M1475 520h6v6h-6z"/><path fill="#980844" d="M1481 520h6v6h-6zM1481 526h6v6h-6z"/><path fill="#98083c" d="M1487 520h6v6h-6z"/><path fill="#980434" d="M1499 520h6v6h-6zM1505 526h6v6h-6z"/><path fill="#980430" d="M1505 520h12v6h-12zM1511 526h6v6h-6z"/><path fill="#980024" d="M1535 520h6v6h-6zM1535 526h6v6h-6zM1535 532h12v6h-12zM1541 538h12v6h-12zM1541 544h12v6h-12zM1547 550h12v6h-12zM1553 556h6v6h-6zM1553 562h12v6h-12zM1559 568h6v6h-6zM1559 574h12v6h-12zM1565 580h12v6h-12z"/><path fill="#980020" d="M1541 520h12v6h-12zM1541 526h12v6h-12zM1547 532h12v6h-12zM1553 538h6v6h-6zM1553 544h12v6h-12zM1559 550h12v6h-12zM1559 556h12v6h-12zM1565 562h12v6h-12zM1565 568h18v6h-18zM1571 574h12v6h-12z"/><path fill="#0038a4" d="M1265 526h36v6h-36zM1223 532h36v6h-36zM1187 538h30v6h-30z"/><path fill="#0034a4" d="M1301 526h6v6h-6zM1259 532h18v6h-18zM1217 538h18v6h-18zM1193 544h6v6h-6z"/><path fill="#0434a4" d="M1307 526h12v6h-12z"/><path fill="#0834a8" d="M1319 526h6v6h-6z"/><path fill="#0c34a8" d="M1325 526h6v6h-6z"/><path fill="#981478" d="M1439 526h6v6h-6z"/><path fill="#98106c" d="M1445 526h6v6h-6z"/><path fill="#981064" d="M1451 526h6v6h-6z"/><path fill="#980c5c" d="M1457 526h6v6h-6z"/><path fill="#980c58" d="M1463 526h6v6h-6z"/><path fill="#980850" d="M1469 526h6v6h-6zM1469 532h6v6h-6z"/><path fill="#980848" d="M1475 526h6v6h-6z"/><path fill="#980440" d="M1487 526h6v6h-6zM1487 532h6v6h-6z"/><path fill="#98043c" d="M1493 526h6v6h-6zM1493 532h6v6h-6z"/><path fill="#980438" d="M1499 526h6v6h-6zM1499 532h6v6h-6z"/><path fill="#98002c" d="M1517 526h6v6h-6zM1523 532h6v6h-6zM1523 538h6v6h-6zM1523 544h12v6h-12zM1529 550h6v6h-6zM1529 556h12v6h-12zM1535 562h6v6h-6zM1535 568h12v6h-12zM1541 574h6v6h-6zM1541 580h12v6h-12zM1547 586h6v6h-6z"/><path fill="#980028" d="M1523 526h12v6h-12zM1529 532h6v6h-6zM1529 538h12v6h-12zM1535 544h6v6h-6zM1535 550h12v6h-12zM1541 556h12v6h-12zM1541 562h12v6h-12zM1547 568h12v6h-12zM1547 574h12v6h-12zM1553 580h12v6h-12zM1553 586h6v6h-6z"/><path fill="#0034a8" d="M1277 532h12v6h-12zM1235 538h18v6h-18zM1199 544h18v6h-18z"/><path fill="#0030a8" d="M1289 532h18v6h-18zM1253 538h30v6h-30zM1217 544h30v6h-30zM1193 550h18v6h-18z"/><path fill="#0430a8" d="M1307 532h12v6h-12z"/><path fill="#082cac" d="M1319 532h6v6h-6z"/><path fill="#0c2cac" d="M1325 532h6v6h-6z"/><path fill="#941898" d="M1421 532h6v6h-6z"/><path fill="#981490" d="M1427 532h6v6h-6z"/><path fill="#981084" d="M1433 532h6v6h-6z"/><path fill="#981078" d="M1439 532h6v6h-6z"/><path fill="#980c70" d="M1445 532h6v6h-6z"/><path fill="#980c68" d="M1451 532h6v6h-6z"/><path fill="#980860" d="M1457 532h6v6h-6zM1457 538h6v6h-6z"/><path fill="#980858" d="M1463 532h6v6h-6z"/><path fill="#98044c" d="M1475 532h6v6h-6zM1475 538h6v6h-6z"/><path fill="#980448" d="M1481 532h6v6h-6zM1481 538h6v6h-6z"/><path fill="#980034" d="M1505 532h6v6h-6zM1511 538h6v6h-6zM1511 544h6v6h-6zM1517 550h6v6h-6zM1517 556h6v6h-6zM1517 562h12v6h-12zM1523 568h6v6h-6zM1523 574h12v6h-12zM1529 580h6v6h-6zM1529 586h6v6h-6zM1535 592h6v6h-6z"/><path fill="#980030" d="M1511 532h12v6h-12zM1517 538h6v6h-6zM1517 544h6v6h-6zM1523 550h6v6h-6zM1523 556h6v6h-6zM1529 562h6v6h-6zM1529 568h6v6h-6zM1535 574h6v6h-6zM1535 580h6v6h-6zM1535 586h12v6h-12z"/><path fill="#002cac" d="M1283 538h24v6h-24zM1253 544h30v6h-30zM1217 550h30v6h-30zM1193 556h24v6h-24z"/><path fill="#042cac" d="M1307 538h6v6h-6z"/><path fill="#0828b0" d="M1313 538h6v6h-6z"/><path fill="#0c28b0" d="M1319 538h6v6h-6z"/><path fill="#1028b0" d="M1325 538h6v6h-6z"/><path fill="#6c1498" d="M1403 538h6v6h-6z"/><path fill="#781498" d="M1409 538h6v6h-6z"/><path fill="#841498" d="M1415 538h6v6h-6z"/><path fill="#901098" d="M1421 538h6v6h-6z"/><path fill="#981094" d="M1427 538h6v6h-6z"/><path fill="#980c88" d="M1433 538h6v6h-6zM1433 544h6v6h-6z"/><path fill="#980c7c" d="M1439 538h6v6h-6z"/><path fill="#980874" d="M1445 538h6v6h-6zM1445 544h6v6h-6z"/><path fill="#980868" d="M1451 538h6v6h-6z"/><path fill="#98045c" d="M1463 538h6v6h-6zM1463 544h6v6h-6z"/><path fill="#980454" d="M1469 538h6v6h-6zM1469 544h6v6h-6z"/><path fill="#980444" d="M1487 538h6v6h-6z"/><path fill="#980040" d="M1493 538h6v6h-6zM1493 544h6v6h-6zM1499 556h6v6h-6zM1499 562h6v6h-6zM1505 568h6v6h-6zM1505 574h6v6h-6zM1505 580h6v6h-6zM1511 586h6v6h-6zM1511 592h6v6h-6zM1517 598h6v6h-6z"/><path fill="#98003c" d="M1499 538h6v6h-6zM1499 544h6v6h-6zM1499 550h6v6h-6zM1505 556h6v6h-6zM1505 562h6v6h-6zM1511 568h6v6h-6zM1511 574h6v6h-6zM1511 580h12v6h-12zM1517 586h6v6h-6zM1517 592h6v6h-6zM1523 598h6v6h-6z"/><path fill="#980038" d="M1505 538h6v6h-6zM1505 544h6v6h-6zM1505 550h12v6h-12zM1511 556h6v6h-6zM1511 562h6v6h-6zM1517 568h6v6h-6zM1517 574h6v6h-6zM1523 580h6v6h-6zM1523 586h6v6h-6zM1523 592h12v6h-12z"/><path fill="#0030ac" d="M1247 544h6v6h-6zM1211 550h6v6h-6z"/><path fill="#0028b0" d="M1283 544h24v6h-24zM1247 550h30v6h-30zM1217 556h30v6h-30zM1199 562h18v6h-18z"/><path fill="#0428b4" d="M1307 544h6v6h-6z"/><path fill="#0824b4" d="M1313 544h6v6h-6z"/><path fill="#0c24b4" d="M1319 544h6v6h-6z"/><path fill="#1024b4" d="M1325 544h6v6h-6z"/><path fill="#58149c" d="M1391 544h6v6h-6z"/><path fill="#601098" d="M1397 544h6v6h-6z"/><path fill="#6c1098" d="M1403 544h6v6h-6z"/><path fill="#781098" d="M1409 544h6v6h-6z"/><path fill="#841098" d="M1415 544h6v6h-6z"/><path fill="#900c98" d="M1421 544h6v6h-6z"/><path fill="#980c94" d="M1427 544h6v6h-6z"/><path fill="#980880" d="M1439 544h6v6h-6z"/><path fill="#98046c" d="M1451 544h6v6h-6zM1451 550h6v6h-6z"/><path fill="#980464" d="M1457 544h6v6h-6zM1457 550h6v6h-6z"/><path fill="#980050" d="M1475 544h6v6h-6zM1475 550h6v6h-6zM1481 562h6v6h-6zM1481 568h6v6h-6zM1487 580h6v6h-6zM1487 586h6v6h-6zM1493 598h6v6h-6zM1493 604h6v6h-6z"/><path fill="#98004c" d="M1481 544h6v6h-6zM1481 550h6v6h-6zM1481 556h6v6h-6zM1487 562h6v6h-6zM1487 568h6v6h-6zM1487 574h6v6h-6zM1493 580h6v6h-6zM1493 586h6v6h-6zM1493 592h6v6h-6zM1499 598h6v6h-6zM1499 604h6v6h-6z"/><path fill="#980044" d="M1487 544h6v6h-6zM1493 550h6v6h-6zM1493 556h6v6h-6zM1493 562h6v6h-6zM1499 568h6v6h-6zM1499 574h6v6h-6zM1505 586h6v6h-6zM1505 592h6v6h-6zM1511 598h6v6h-6z"/><path fill="#0028b4" d="M1277 550h6v6h-6zM1247 556h6v6h-6z"/><path fill="#0024b4" d="M1283 550h18v6h-18zM1253 556h24v6h-24zM1217 562h30v6h-30zM1199 568h18v6h-18z"/><path fill="#0424b8" d="M1301 550h6v6h-6z"/><path fill="#0420b8" d="M1307 550h6v6h-6z"/><path fill="#0820b8" d="M1313 550h6v6h-6z"/><path fill="#0c20b8" d="M1319 550h6v6h-6z"/><path fill="#4014a0" d="M1373 550h6v6h-6z"/><path fill="#48109c" d="M1379 550h6v6h-6z"/><path fill="#50109c" d="M1385 550h6v6h-6z"/><path fill="#58109c" d="M1391 550h6v6h-6z"/><path fill="#600c98" d="M1397 550h6v6h-6zM1397 556h6v6h-6z"/><path fill="#6c0c98" d="M1403 550h6v6h-6z"/><path fill="#740c98" d="M1409 550h6v6h-6z"/><path fill="#800c98" d="M1415 550h6v6h-6z"/><path fill="#8c0898" d="M1421 550h6v6h-6zM1421 556h6v6h-6z"/><path fill="#980898" d="M1427 550h6v6h-6z"/><path fill="#98088c" d="M1433 550h6v6h-6z"/><path fill="#980480" d="M1439 550h6v6h-6z"/><path fill="#980478" d="M1445 550h6v6h-6zM1445 556h6v6h-6z"/><path fill="#980060" d="M1463 550h6v6h-6zM1463 556h6v6h-6zM1469 574h6v6h-6zM1469 580h6v6h-6zM1475 592h6v6h-6zM1475 598h6v6h-6zM1475 604h6v6h-6z"/><path fill="#980058" d="M1469 550h6v6h-6zM1469 556h6v6h-6zM1475 568h6v6h-6zM1475 574h6v6h-6zM1481 586h6v6h-6zM1481 592h6v6h-6zM1487 604h6v6h-6zM1487 610h6v6h-6z"/><path fill="#980048" d="M1487 550h6v6h-6zM1487 556h6v6h-6zM1493 568h6v6h-6zM1493 574h6v6h-6zM1499 580h6v6h-6zM1499 586h6v6h-6zM1499 592h6v6h-6zM1505 598h6v6h-6zM1505 604h6v6h-6z"/><path fill="#0024b8" d="M1277 556h6v6h-6zM1247 562h6v6h-6zM1217 568h6v6h-6z"/><path fill="#0020b8" d="M1283 556h12v6h-12zM1253 562h18v6h-18zM1223 568h18v6h-18zM1205 574h6v6h-6z"/><path fill="#0020bc" d="M1295 556h6v6h-6zM1271 562h12v6h-12zM1241 568h12v6h-12zM1211 574h18v6h-18z"/><path fill="#0420bc" d="M1301 556h6v6h-6z"/><path fill="#041cbc" d="M1307 556h6v6h-6z"/><path fill="#081cbc" d="M1313 556h6v6h-6z"/><path fill="#0c1cc0" d="M1319 556h6v6h-6z"/><path fill="#2c14ac" d="M1355 556h6v6h-6z"/><path fill="#3410a8" d="M1361 556h6v6h-6z"/><path fill="#3810a4" d="M1367 556h6v6h-6z"/><path fill="#4010a0" d="M1373 556h6v6h-6z"/><path fill="#480c9c" d="M1379 556h6v6h-6z"/><path fill="#500c9c" d="M1385 556h6v6h-6z"/><path fill="#580c9c" d="M1391 556h6v6h-6z"/><path fill="#680898" d="M1403 556h6v6h-6zM1403 562h6v6h-6z"/><path fill="#740898" d="M1409 556h6v6h-6z"/><path fill="#800898" d="M1415 556h6v6h-6z"/><path fill="#980498" d="M1427 556h6v6h-6z"/><path fill="#98048c" d="M1433 556h6v6h-6z"/><path fill="#980484" d="M1439 556h6v6h-6z"/><path fill="#980070" d="M1451 556h6v6h-6zM1451 562h6v6h-6zM1457 580h6v6h-6zM1457 586h6v6h-6zM1463 604h6v6h-6zM1463 610h6v6h-6z"/><path fill="#980068" d="M1457 556h6v6h-6zM1457 562h6v6h-6zM1463 574h6v6h-6zM1463 580h6v6h-6zM1463 586h6v6h-6zM1469 598h6v6h-6zM1469 604h6v6h-6z"/><path fill="#980054" d="M1475 556h6v6h-6zM1475 562h6v6h-6zM1481 574h6v6h-6zM1481 580h6v6h-6zM1487 592h6v6h-6zM1487 598h6v6h-6z"/><path fill="#001cbc" d="M1283 562h6v6h-6zM1253 568h12v6h-12zM1229 574h6v6h-6zM1205 580h6v6h-6z"/><path fill="#001cc0" d="M1289 562h12v6h-12zM1265 568h18v6h-18zM1235 574h24v6h-24zM1211 580h24v6h-24z"/><path fill="#041cc0" d="M1301 562h6v6h-6z"/><path fill="#0818c4" d="M1307 562h6v6h-6z"/><path fill="#0c18c4" d="M1313 562h6v6h-6z"/><path fill="#1018c4" d="M1319 562h6v6h-6z"/><path fill="#2410b8" d="M1343 562h6v6h-6z"/><path fill="#2810b0" d="M1349 562h6v6h-6z"/><path fill="#2c10ac" d="M1355 562h6v6h-6z"/><path fill="#340ca8" d="M1361 562h6v6h-6zM1361 568h6v6h-6z"/><path fill="#380ca4" d="M1367 562h6v6h-6z"/><path fill="#400ca0" d="M1373 562h6v6h-6z"/><path fill="#48089c" d="M1379 562h6v6h-6zM1379 568h6v6h-6z"/><path fill="#50089c" d="M1385 562h6v6h-6z"/><path fill="#58089c" d="M1391 562h6v6h-6z"/><path fill="#600898" d="M1397 562h6v6h-6z"/><path fill="#740498" d="M1409 562h6v6h-6zM1409 568h6v6h-6z"/><path fill="#800498" d="M1415 562h6v6h-6z"/><path fill="#880498" d="M1421 562h6v6h-6z"/><path fill="#940498" d="M1427 562h6v6h-6z"/><path fill="#980090" d="M1433 562h6v6h-6zM1439 592h6v6h-6zM1439 598h6v6h-6zM1445 622h6v6h-6z"/><path fill="#980084" d="M1439 562h6v6h-6zM1445 586h6v6h-6zM1445 592h6v6h-6zM1451 616h6v6h-6zM1451 622h6v6h-6z"/><path fill="#98007c" d="M1445 562h6v6h-6zM1445 568h6v6h-6zM1451 592h6v6h-6zM1451 598h6v6h-6zM1457 616h6v6h-6z"/><path fill="#980064" d="M1463 562h6v6h-6zM1463 568h6v6h-6zM1469 586h6v6h-6zM1469 592h6v6h-6zM1475 610h6v6h-6z"/><path fill="#98005c" d="M1469 562h6v6h-6zM1469 568h6v6h-6zM1475 580h6v6h-6zM1475 586h6v6h-6zM1481 598h6v6h-6zM1481 604h6v6h-6zM1481 610h6v6h-6z"/><path fill="#0018c4" d="M1283 568h18v6h-18zM1259 574h18v6h-18zM1235 580h18v6h-18zM1211 586h18v6h-18z"/><path fill="#0418c8" d="M1301 568h6v6h-6z"/><path fill="#0818c8" d="M1307 568h6v6h-6z"/><path fill="#0c14c8" d="M1313 568h6v6h-6z"/><path fill="#1014cc" d="M1319 568h6v6h-6z"/><path fill="#1414cc" d="M1325 568h6v6h-6z"/><path fill="#1810c4" d="M1331 568h6v6h-6z"/><path fill="#2010bc" d="M1337 568h6v6h-6z"/><path fill="#2410b4" d="M1343 568h6v6h-6z"/><path fill="#280cb0" d="M1349 568h6v6h-6z"/><path fill="#2c0cac" d="M1355 568h6v6h-6z"/><path fill="#3808a4" d="M1367 568h6v6h-6zM1367 574h6v6h-6z"/><path fill="#4008a0" d="M1373 568h6v6h-6z"/><path fill="#4c049c" d="M1385 568h6v6h-6zM1385 574h6v6h-6z"/><path fill="#58049c" d="M1391 568h6v6h-6z"/><path fill="#600498" d="M1397 568h6v6h-6zM1397 574h6v6h-6z"/><path fill="#680498" d="M1403 568h6v6h-6z"/><path fill="#7c0498" d="M1415 568h6v6h-6z"/><path fill="#880098" d="M1421 568h6v6h-6zM1421 574h6v6h-6zM1427 604h6v6h-6zM1427 610h6v6h-6z"/><path fill="#940098" d="M1427 568h6v6h-6zM1433 598h6v6h-6zM1433 604h6v6h-6z"/><path fill="#980094" d="M1433 568h6v6h-6zM1433 574h6v6h-6zM1439 604h6v6h-6zM1439 610h6v6h-6z"/><path fill="#980088" d="M1439 568h6v6h-6zM1439 574h6v6h-6zM1445 598h6v6h-6zM1445 604h6v6h-6z"/><path fill="#980074" d="M1451 568h6v6h-6zM1451 574h6v6h-6zM1457 592h6v6h-6zM1457 598h6v6h-6zM1463 616h6v6h-6z"/><path fill="#98006c" d="M1457 568h6v6h-6zM1457 574h6v6h-6zM1463 592h6v6h-6zM1463 598h6v6h-6zM1469 610h6v6h-6zM1469 616h6v6h-6z"/><path fill="#0018c8" d="M1277 574h12v6h-12zM1253 580h12v6h-12zM1229 586h12v6h-12zM1211 592h6v6h-6z"/><path fill="#0014c8" d="M1289 574h6v6h-6zM1265 580h6v6h-6zM1241 586h6v6h-6zM1217 592h6v6h-6z"/><path fill="#0014cc" d="M1295 574h6v6h-6zM1271 580h18v6h-18zM1247 586h18v6h-18zM1223 592h24v6h-24zM1211 598h12v6h-12z"/><path fill="#0414cc" d="M1301 574h6v6h-6z"/><path fill="#0814cc" d="M1307 574h6v6h-6z"/><path fill="#0c10d0" d="M1313 574h6v6h-6z"/><path fill="#1010d0" d="M1319 574h6v6h-6z"/><path fill="#1410c8" d="M1325 574h6v6h-6z"/><path fill="#180cc4" d="M1331 574h6v6h-6z"/><path fill="#200cbc" d="M1337 574h6v6h-6z"/><path fill="#240cb4" d="M1343 574h6v6h-6z"/><path fill="#2808b0" d="M1349 574h6v6h-6zM1349 580h6v6h-6z"/><path fill="#2c08ac" d="M1355 574h6v6h-6z"/><path fill="#3408a8" d="M1361 574h6v6h-6z"/><path fill="#4004a0" d="M1373 574h6v6h-6zM1373 580h6v6h-6z"/><path fill="#48049c" d="M1379 574h6v6h-6zM1379 580h6v6h-6z"/><path fill="#54049c" d="M1391 574h6v6h-6z"/><path fill="#680098" d="M1403 574h6v6h-6zM1403 580h6v6h-6zM1409 622h6v6h-6zM1409 628h6v6h-6zM1409 634h6v6h-6z"/><path fill="#700098" d="M1409 574h6v6h-6zM1409 580h6v6h-6zM1409 586h6v6h-6zM1415 622h6v6h-6zM1415 628h6v6h-6zM1415 634h6v6h-6z"/><path fill="#7c0098" d="M1415 574h6v6h-6zM1421 610h6v6h-6zM1421 616h6v6h-6zM1421 622h6v6h-6z"/><path fill="#900098" d="M1427 574h6v6h-6zM1427 580h6v6h-6zM1427 586h6v6h-6zM1433 610h6v6h-6zM1433 616h6v6h-6zM1433 622h6v6h-6z"/><path fill="#980080" d="M1445 574h6v6h-6zM1445 580h6v6h-6zM1451 604h6v6h-6zM1451 610h6v6h-6z"/><path fill="#0010d0" d="M1289 580h6v6h-6zM1271 586h12v6h-12zM1247 592h12v6h-12zM1223 598h18v6h-18z"/><path fill="#0410d0" d="M1295 580h12v6h-12z"/><path fill="#0810d4" d="M1307 580h6v6h-6z"/><path fill="#0c10d4" d="M1313 580h6v6h-6z"/><path fill="#100cd0" d="M1319 580h6v6h-6z"/><path fill="#140cc8" d="M1325 580h6v6h-6z"/><path fill="#1c08c0" d="M1331 580h6v6h-6zM1331 586h6v6h-6z"/><path fill="#2008bc" d="M1337 580h6v6h-6z"/><path fill="#2408b4" d="M1343 580h6v6h-6z"/><path fill="#3004ac" d="M1355 580h6v6h-6zM1355 586h6v6h-6z"/><path fill="#3404a8" d="M1361 580h6v6h-6zM1361 586h6v6h-6z"/><path fill="#3804a4" d="M1367 580h6v6h-6z"/><path fill="#4c009c" d="M1385 580h6v6h-6zM1385 586h6v6h-6zM1385 592h6v6h-6zM1385 598h6v6h-6zM1385 604h6v6h-6zM1385 610h6v6h-6zM1385 616h6v6h-6zM1385 622h6v6h-6zM1385 628h6v6h-6zM1385 634h6v6h-6zM1385 640h6v6h-6zM1385 646h6v6h-6z"/><path fill="#54009c" d="M1391 580h6v6h-6zM1391 586h6v6h-6zM1391 592h6v6h-6zM1391 598h6v6h-6zM1391 604h6v6h-6zM1391 610h6v6h-6zM1391 616h6v6h-6zM1391 622h6v6h-6z"/><path fill="#5c0098" d="M1397 580h6v6h-6zM1397 586h6v6h-6zM1397 592h6v6h-6zM1397 598h6v6h-6zM1397 604h6v6h-6z"/><path fill="#780098" d="M1415 580h6v6h-6zM1415 586h6v6h-6zM1415 592h6v6h-6zM1415 598h6v6h-6zM1421 628h6v6h-6zM1421 634h6v6h-6z"/><path fill="#840098" d="M1421 580h6v6h-6zM1421 586h6v6h-6zM1427 616h6v6h-6zM1427 622h6v6h-6zM1427 628h6v6h-6z"/><path fill="#980098" d="M1433 580h6v6h-6zM1433 586h6v6h-6zM1433 592h6v6h-6zM1439 616h6v6h-6zM1439 622h6v6h-6zM1439 628h6v6h-6z"/><path fill="#98008c" d="M1439 580h6v6h-6zM1439 586h6v6h-6zM1445 610h6v6h-6zM1445 616h6v6h-6z"/><path fill="#980078" d="M1451 580h6v6h-6zM1451 586h6v6h-6zM1457 604h6v6h-6zM1457 610h6v6h-6z"/><path fill="#0014d0" d="M1265 586h6v6h-6z"/><path fill="#0010d4" d="M1283 586h12v6h-12zM1259 592h18v6h-18zM1241 598h12v6h-12zM1217 604h12v6h-12z"/><path fill="#040cd4" d="M1295 586h6v6h-6z"/><path fill="#080cd8" d="M1301 586h12v6h-12z"/><path fill="#0c0cd4" d="M1313 586h6v6h-6z"/><path fill="#1408d0" d="M1319 586h6v6h-6z"/><path fill="#1808c8" d="M1325 586h6v6h-6z"/><path fill="#2004bc" d="M1337 586h6v6h-6z"/><path fill="#2404b4" d="M1343 586h6v6h-6zM1343 592h6v6h-6z"/><path fill="#2804b0" d="M1349 586h6v6h-6z"/><path fill="#3800a4" d="M1367 586h6v6h-6zM1367 592h6v6h-6zM1367 598h6v6h-6zM1367 604h6v6h-6zM1367 610h6v6h-6zM1367 616h6v6h-6zM1367 622h6v6h-6zM1367 628h6v6h-6zM1367 634h6v6h-6zM1367 640h6v6h-6zM1367 646h6v6h-6zM1367 652h6v6h-6z"/><path fill="#4000a0" d="M1373 586h6v6h-6zM1373 592h6v6h-6zM1373 598h6v6h-6zM1373 604h6v6h-6zM1373 610h6v6h-6zM1373 616h6v6h-6zM1373 622h6v6h-6zM1373 628h6v6h-6zM1373 634h6v6h-6zM1373 640h6v6h-6zM1373 646h6v6h-6z"/><path fill="#48009c" d="M1379 586h6v6h-6z"/><path fill="#640098" d="M1403 586h6v6h-6zM1403 592h6v6h-6zM1403 598h6v6h-6zM1403 604h6v6h-6zM1403 610h6v6h-6z"/><path fill="#000cd8" d="M1277 592h18v6h-18zM1259 598h18v6h-18zM1235 604h18v6h-18zM1217 610h18v6h-18z"/><path fill="#040cdc" d="M1295 592h6v6h-6z"/><path fill="#0808dc" d="M1301 592h6v6h-6z"/><path fill="#0c08dc" d="M1307 592h6v6h-6z"/><path fill="#1008d4" d="M1313 592h6v6h-6z"/><path fill="#1408cc" d="M1319 592h6v6h-6z"/><path fill="#1804c8" d="M1325 592h6v6h-6z"/><path fill="#1c04c0" d="M1331 592h6v6h-6zM1331 598h6v6h-6z"/><path fill="#2004b8" d="M1337 592h6v6h-6z"/><path fill="#2800b0" d="M1349 592h6v6h-6zM1349 598h6v6h-6zM1343 628h6v6h-6zM1343 634h6v6h-6zM1343 640h6v6h-6zM1343 646h6v6h-6zM1343 652h6v6h-6zM1343 658h6v6h-6z"/><path fill="#3000a8" d="M1355 592h6v6h-6zM1355 598h6v6h-6zM1355 604h6v6h-6zM1355 610h6v6h-6zM1355 616h6v6h-6zM1355 622h6v6h-6zM1355 628h6v6h-6zM1355 634h6v6h-6zM1355 640h6v6h-6zM1355 646h6v6h-6zM1355 652h6v6h-6z"/><path fill="#3400a4" d="M1361 592h6v6h-6zM1361 598h6v6h-6zM1361 604h6v6h-6zM1361 610h6v6h-6zM1361 616h6v6h-6zM1361 622h6v6h-6zM1361 628h6v6h-6zM1361 634h6v6h-6zM1361 640h6v6h-6zM1361 646h6v6h-6zM1361 652h6v6h-6z"/><path fill="#44009c" d="M1379 592h6v6h-6zM1379 598h6v6h-6zM1379 604h6v6h-6zM1379 610h6v6h-6zM1379 616h6v6h-6zM1379 622h6v6h-6zM1379 628h6v6h-6zM1379 634h6v6h-6zM1379 640h6v6h-6zM1379 646h6v6h-6z"/><path fill="#6c0098" d="M1409 592h6v6h-6zM1409 598h6v6h-6zM1409 604h6v6h-6zM1409 610h6v6h-6zM1409 616h6v6h-6z"/><path fill="#800098" d="M1421 592h6v6h-6zM1421 598h6v6h-6zM1421 604h6v6h-6z"/><path fill="#8c0098" d="M1427 592h6v6h-6zM1427 598h6v6h-6zM1433 628h6v6h-6z"/><path fill="#000cd4" d="M1253 598h6v6h-6zM1229 604h6v6h-6z"/><path fill="#000cdc" d="M1277 598h6v6h-6zM1253 604h6v6h-6zM1235 610h6v6h-6z"/><path fill="#0008dc" d="M1283 598h6v6h-6zM1259 604h12v6h-12zM1241 610h12v6h-12zM1223 616h12v6h-12z"/><path fill="#0008e0" d="M1289 598h6v6h-6zM1271 604h18v6h-18zM1253 610h18v6h-18zM1235 616h18v6h-18zM1223 622h12v6h-12z"/><path fill="#0408e0" d="M1295 598h6v6h-6z"/><path fill="#0808e0" d="M1301 598h6v6h-6z"/><path fill="#0c04d8" d="M1307 598h6v6h-6zM1307 604h6v6h-6z"/><path fill="#1004d4" d="M1313 598h6v6h-6z"/><path fill="#1404cc" d="M1319 598h6v6h-6z"/><path fill="#1804c4" d="M1325 598h6v6h-6z"/><path fill="#2000b8" d="M1337 598h6v6h-6zM1337 604h6v6h-6zM1337 610h6v6h-6zM1337 616h6v6h-6zM1337 622h6v6h-6zM1331 658h6v6h-6zM1331 664h6v6h-6z"/><path fill="#2400b4" d="M1343 598h6v6h-6zM1343 604h6v6h-6zM1343 610h6v6h-6zM1337 640h6v6h-6zM1337 646h6v6h-6zM1337 652h6v6h-6zM1337 658h6v6h-6zM1337 664h6v6h-6z"/><path fill="#0404e4" d="M1289 604h12v6h-12zM1295 610h6v6h-6z"/><path fill="#0804e0" d="M1301 604h6v6h-6z"/><path fill="#1004d0" d="M1313 604h6v6h-6z"/><path fill="#1400cc" d="M1319 604h6v6h-6zM1319 610h6v6h-6zM1313 634h6v6h-6zM1313 640h6v6h-6zM1313 646h6v6h-6zM1313 652h6v6h-6z"/><path fill="#1800c4" d="M1325 604h6v6h-6zM1325 610h6v6h-6zM1325 616h6v6h-6zM1325 622h6v6h-6zM1319 646h6v6h-6zM1319 652h6v6h-6zM1319 658h6v6h-6zM1319 664h6v6h-6zM1319 670h6v6h-6z"/><path fill="#1c00c0" d="M1331 604h6v6h-6zM1325 628h6v6h-6zM1325 634h6v6h-6zM1325 640h6v6h-6zM1325 646h6v6h-6zM1325 652h6v6h-6zM1325 658h6v6h-6zM1325 664h6v6h-6z"/><path fill="#2c00b0" d="M1349 604h6v6h-6z"/><path fill="#740098" d="M1415 604h6v6h-6zM1415 610h6v6h-6zM1415 616h6v6h-6z"/><path fill="#0004e4" d="M1271 610h18v6h-18zM1253 616h18v6h-18zM1235 622h18v6h-18zM1229 628h6v6h-6z"/><path fill="#0404e8" d="M1289 610h6v6h-6z"/><path fill="#0804dc" d="M1301 610h6v6h-6z"/><path fill="#0c00d8" d="M1307 610h6v6h-6zM1307 616h6v6h-6zM1301 634h6v6h-6zM1301 640h6v6h-6zM1301 646h6v6h-6zM1301 652h6v6h-6zM1295 664h6v6h-6zM1295 670h6v6h-6z"/><path fill="#1000d0" d="M1313 610h6v6h-6zM1313 616h6v6h-6zM1313 622h6v6h-6zM1307 646h6v6h-6zM1307 652h6v6h-6zM1307 658h6v6h-6zM1307 664h6v6h-6zM1307 670h6v6h-6z"/><path fill="#1c00bc" d="M1331 610h6v6h-6zM1331 616h6v6h-6zM1331 622h6v6h-6z"/><path fill="#2c00ac" d="M1349 610h6v6h-6zM1349 616h6v6h-6zM1349 622h6v6h-6zM1349 628h6v6h-6zM1349 634h6v6h-6zM1349 640h6v6h-6zM1349 646h6v6h-6zM1349 652h6v6h-6zM1349 658h6v6h-6z"/><path fill="#5c009c" d="M1397 610h6v6h-6z"/><path fill="#0004e8" d="M1271 616h18v6h-18zM1253 622h18v6h-18zM1235 628h18v6h-18zM1229 634h6v6h-6z"/><path fill="#0400e8" d="M1289 616h6v6h-6zM1283 628h6v6h-6zM1283 634h6v6h-6zM1283 640h6v6h-6zM1283 646h6v6h-6zM1277 658h6v6h-6zM1277 664h6v6h-6zM1277 670h6v6h-6z"/><path fill="#0800e0" d="M1295 616h6v6h-6zM1295 622h6v6h-6zM1295 628h6v6h-6zM1295 634h6v6h-6zM1289 646h6v6h-6zM1289 652h6v6h-6zM1289 658h6v6h-6zM1289 664h6v6h-6zM1289 670h6v6h-6z"/><path fill="#0800dc" d="M1301 616h6v6h-6zM1295 640h6v6h-6zM1295 646h6v6h-6zM1295 652h6v6h-6z"/><path fill="#1400c8" d="M1319 616h6v6h-6zM1319 622h6v6h-6zM1313 658h6v6h-6zM1313 664h6v6h-6zM1313 670h6v6h-6z"/><path fill="#2800b4" d="M1343 616h6v6h-6zM1343 622h6v6h-6z"/><path fill="#58009c" d="M1397 616h6v6h-6zM1397 622h6v6h-6zM1397 628h6v6h-6zM1397 634h6v6h-6zM1397 640h6v6h-6z"/><path fill="#600098" d="M1403 616h6v6h-6zM1403 622h6v6h-6zM1403 628h6v6h-6zM1403 634h6v6h-6zM1403 640h6v6h-6z"/><path fill="#0000ec" d="M1271 622h18v6h-18zM1259 628h24v6h-24zM1241 634h42v6h-42zM1235 640h48v6h-48zM1241 646h42v6h-42zM1247 652h30v6h-30zM1253 658h24v6h-24zM1259 664h18v6h-18zM1271 670h6v6h-6z"/><path fill="#0400e4" d="M1289 622h6v6h-6zM1289 628h6v6h-6zM1289 634h6v6h-6zM1289 640h6v6h-6zM1283 652h6v6h-6zM1283 658h6v6h-6zM1283 664h6v6h-6zM1283 670h6v6h-6z"/><path fill="#0c00dc" d="M1301 622h6v6h-6zM1301 628h6v6h-6zM1295 658h6v6h-6z"/><path fill="#0c00d4" d="M1307 622h6v6h-6zM1301 658h6v6h-6z"/><path fill="#0000e8" d="M1253 628h6v6h-6zM1235 634h6v6h-6zM1277 652h6v6h-6z"/><path fill="#1000d4" d="M1307 628h6v6h-6zM1307 634h6v6h-6zM1307 640h6v6h-6zM1301 664h6v6h-6zM1301 670h6v6h-6z"/><path fill="#1400d0" d="M1313 628h6v6h-6z"/><path fill="#1800c8" d="M1319 628h6v6h-6zM1319 634h6v6h-6zM1319 640h6v6h-6z"/><path fill="#2000bc" d="M1331 628h6v6h-6zM1331 634h6v6h-6zM1331 640h6v6h-6zM1331 646h6v6h-6zM1331 652h6v6h-6z"/><path fill="#2400b8" d="M1337 628h6v6h-6zM1337 634h6v6h-6z"/><path fill="#50009c" d="M1391 628h6v6h-6zM1391 634h6v6h-6zM1391 640h6v6h-6z"/></g></g><g clip-path="url(#cTri)"><g filter="url(#fBlur)"><path fill="#00fc00" d="M1356 211h35v5h-35zM1356 216h35v5h-35zM1356 221h35v5h-35zM1351 226h35v5h-35zM1351 231h35v5h-35zM1351 236h35v5h-35zM1351 241h30v5h-30zM1356 246h25v5h-25zM1366 251h15v5h-15zM1376 256h5v5h-5z"/><path fill="#06fc00" d="M1391 216h5v5h-5zM1391 221h15v5h-15zM1386 226h15v5h-15zM1386 231h15v5h-15zM1386 236h15v5h-15zM1381 241h15v5h-15zM1381 246h15v5h-15zM1381 251h15v5h-15zM1381 256h10v5h-10zM1381 261h10v5h-10z"/><path fill="#0cfc00" d="M1401 226h10v5h-10zM1401 231h10v5h-10zM1401 236h10v5h-10zM1396 241h15v5h-15zM1396 246h10v5h-10zM1396 251h10v5h-10zM1391 256h15v5h-15zM1391 261h10v5h-10zM1391 266h10v5h-10z"/><path fill="#12fc00" d="M1411 231h10v5h-10zM1411 236h10v5h-10zM1411 241h5v5h-5zM1406 246h10v5h-10zM1406 251h10v5h-10zM1406 256h5v5h-5zM1401 261h10v5h-10zM1401 266h10v5h-10zM1401 271h5v5h-5z"/><path fill="#18fc00" d="M1421 236h5v5h-5zM1416 241h10v5h-10zM1416 246h10v5h-10zM1416 251h5v5h-5zM1411 256h10v5h-10zM1411 261h10v5h-10zM1411 266h5v5h-5zM1406 271h10v5h-10zM1406 276h5v5h-5z"/><path fill="#1efc00" d="M1426 241h10v5h-10zM1426 246h5v5h-5zM1421 251h10v5h-10zM1421 256h5v5h-5zM1421 261h5v5h-5zM1416 266h10v5h-10zM1416 271h5v5h-5zM1411 276h10v5h-10z"/><path fill="#00fc06" d="M1346 246h10v5h-10zM1346 251h20v5h-20zM1346 256h30v5h-30zM1346 261h30v5h-30zM1346 266h30v5h-30zM1356 271h20v5h-20zM1361 276h15v5h-15z"/><path fill="#24fc00" d="M1431 246h10v5h-10zM1431 251h5v5h-5zM1426 256h10v5h-10zM1426 261h5v5h-5zM1426 266h5v5h-5zM1421 271h10v5h-10zM1421 276h5v5h-5zM1416 281h10v5h-10z"/><path fill="#2afc00" d="M1436 251h10v5h-10zM1436 256h5v5h-5zM1431 261h10v5h-10zM1431 266h5v5h-5zM1431 271h5v5h-5zM1426 276h5v5h-5zM1426 281h5v5h-5zM1426 286h5v5h-5z"/><path fill="#30fc00" d="M1446 251h5v5h-5zM1441 256h5v5h-5zM1441 261h5v5h-5zM1436 266h5v5h-5zM1436 271h5v5h-5zM1431 276h10v5h-10zM1431 281h5v5h-5zM1431 286h5v5h-5z"/><path fill="#36fc00" d="M1446 256h10v5h-10zM1446 261h5v5h-5zM1441 266h10v5h-10zM1441 271h5v5h-5zM1441 276h5v5h-5zM1436 281h5v5h-5zM1436 286h5v5h-5zM1431 291h5v5h-5z"/><path fill="#06fc06" d="M1376 261h5v5h-5zM1376 266h15v5h-15zM1376 271h10v5h-10zM1376 276h10v5h-10zM1371 281h15v5h-15zM1381 286h5v5h-5z"/><path fill="#3cfc00" d="M1451 261h5v5h-5zM1451 266h5v5h-5zM1446 271h5v5h-5zM1446 276h5v5h-5zM1441 281h5v5h-5zM1441 286h5v5h-5zM1436 291h5v5h-5z"/><path fill="#42fc00" d="M1456 261h5v5h-5zM1456 266h5v5h-5zM1451 271h5v5h-5zM1451 276h5v5h-5zM1446 281h5v5h-5zM1446 286h5v5h-5zM1441 291h5v5h-5zM1441 296h5v5h-5z"/><path fill="#48fc00" d="M1461 261h5v5h-5zM1461 266h5v5h-5zM1456 271h5v5h-5zM1456 276h5v5h-5zM1451 281h5v5h-5zM1451 286h5v5h-5zM1446 291h5v5h-5zM1446 296h5v5h-5z"/><path fill="#00fc0c" d="M1341 266h5v5h-5zM1341 271h15v5h-15zM1341 276h20v5h-20zM1341 281h30v5h-30zM1346 286h25v5h-25zM1356 291h15v5h-15z"/><path fill="#4efc00" d="M1466 266h5v5h-5zM1461 271h5v5h-5zM1461 276h5v5h-5zM1456 281h5v5h-5zM1456 286h5v5h-5zM1451 291h5v5h-5zM1451 296h5v5h-5z"/><path fill="#0cfc06" d="M1386 271h15v5h-15zM1386 276h10v5h-10zM1386 281h10v5h-10zM1386 286h10v5h-10z"/><path fill="#54fc00" d="M1466 271h5v5h-5zM1466 276h5v5h-5zM1461 281h5v5h-5zM1456 291h5v5h-5zM1451 301h5v5h-5z"/><path fill="#5afc00" d="M1471 271h5v5h-5zM1466 281h5v5h-5zM1461 286h5v5h-5zM1461 291h5v5h-5zM1456 296h5v5h-5zM1456 301h5v5h-5z"/><path fill="#60fc00" d="M1476 271h5v5h-5zM1471 276h5v5h-5zM1471 281h5v5h-5zM1466 286h5v5h-5zM1466 291h5v5h-5zM1461 296h5v5h-5zM1456 306h5v5h-5z"/><path fill="#12fc06" d="M1396 276h10v5h-10zM1396 281h10v5h-10zM1396 286h5v5h-5zM1391 291h10v5h-10z"/><path fill="#66fc00" d="M1476 276h5v5h-5zM1476 281h5v5h-5zM1471 286h5v5h-5zM1466 296h5v5h-5zM1461 301h5v5h-5zM1461 306h5v5h-5z"/><path fill="#6cfc00" d="M1481 276h5v5h-5zM1476 286h5v5h-5zM1471 291h5v5h-5zM1471 296h5v5h-5zM1466 301h5v5h-5z"/><path fill="#18fc06" d="M1406 281h5v5h-5zM1401 286h10v5h-10zM1401 291h5v5h-5zM1401 296h5v5h-5z"/><path fill="#1efc06" d="M1411 281h5v5h-5zM1411 286h5v5h-5zM1406 291h10v5h-10zM1406 296h5v5h-5z"/><path fill="#72fc00" d="M1481 281h5v5h-5zM1476 291h5v5h-5zM1471 301h5v5h-5zM1466 306h5v5h-5z"/><path fill="#78fc00" d="M1486 281h5v5h-5zM1481 286h5v5h-5zM1481 291h5v5h-5zM1476 296h5v5h-5zM1471 306h5v5h-5zM1466 311h5v5h-5z"/><path fill="#7efc00" d="M1491 281h5v5h-5zM1486 286h5v5h-5zM1481 296h5v5h-5zM1476 301h5v5h-5zM1471 311h5v5h-5z"/><path fill="#00fc12" d="M1336 286h10v5h-10zM1336 291h20v5h-20zM1336 296h30v5h-30zM1346 301h20v5h-20zM1356 306h10v5h-10z"/><path fill="#06fc0c" d="M1371 286h10v5h-10zM1371 291h10v5h-10zM1366 296h15v5h-15zM1376 301h5v5h-5z"/><path fill="#24fc06" d="M1416 286h5v5h-5zM1416 291h5v5h-5zM1411 296h5v5h-5zM1411 301h5v5h-5z"/><path fill="#2afc06" d="M1421 286h5v5h-5zM1421 291h5v5h-5zM1416 296h10v5h-10zM1416 301h5v5h-5z"/><path fill="#84fc00" d="M1491 286h5v5h-5zM1486 291h5v5h-5zM1481 301h5v5h-5zM1476 306h5v5h-5z"/><path fill="#90fc00" d="M1496 286h5v5h-5zM1491 296h5v5h-5zM1486 301h5v5h-5zM1481 311h5v5h-5zM1476 316h5v5h-5z"/><path fill="#0cfc0c" d="M1381 291h10v5h-10zM1381 296h10v5h-10zM1381 301h5v5h-5z"/><path fill="#30fc06" d="M1426 291h5v5h-5zM1426 296h5v5h-5zM1421 301h5v5h-5zM1421 306h5v5h-5z"/><path fill="#8afc00" d="M1491 291h5v5h-5zM1486 296h5v5h-5zM1481 306h5v5h-5zM1476 311h5v5h-5z"/><path fill="#96fc00" d="M1496 291h5v5h-5zM1491 301h5v5h-5zM1486 306h5v5h-5zM1481 316h5v5h-5z"/><path fill="#9cfc00" d="M1501 291h5v5h-5zM1496 296h5v5h-5zM1491 306h5v5h-5zM1486 311h5v5h-5zM1481 321h5v5h-5z"/><path fill="#12fc0c" d="M1391 296h5v5h-5zM1386 301h10v5h-10zM1386 306h10v5h-10z"/><path fill="#18fc0c" d="M1396 296h5v5h-5zM1396 301h10v5h-10zM1396 306h5v5h-5zM1396 311h5v5h-5z"/><path fill="#36fc06" d="M1431 296h5v5h-5zM1426 301h5v5h-5zM1426 306h5v5h-5z"/><path fill="#3cfc06" d="M1436 296h5v5h-5zM1431 301h5v5h-5zM1431 306h5v5h-5z"/><path fill="#a2fc00" d="M1501 296h5v5h-5zM1496 301h5v5h-5zM1491 311h5v5h-5zM1486 316h5v5h-5z"/><path fill="#aefc00" d="M1506 296h5v5h-5zM1501 301h5v5h-5zM1496 311h5v5h-5zM1491 316h5v5h-5z"/><path fill="#bafc00" d="M1511 296h5v5h-5zM1501 311h5v5h-5zM1491 326h5v5h-5z"/><path fill="#00fc18" d="M1336 301h10v5h-10zM1331 306h25v5h-25zM1336 311h30v5h-30zM1351 316h10v5h-10z"/><path fill="#06fc12" d="M1366 301h10v5h-10zM1366 306h10v5h-10zM1366 311h10v5h-10z"/><path fill="#1efc0c" d="M1406 301h5v5h-5zM1401 306h5v5h-5zM1401 311h5v5h-5z"/><path fill="#42fc06" d="M1436 301h5v5h-5zM1436 306h5v5h-5zM1431 311h5v5h-5z"/><path fill="#48fc06" d="M1441 301h5v5h-5zM1441 306h5v5h-5zM1436 311h5v5h-5z"/><path fill="#4efc06" d="M1446 301h5v5h-5zM1441 311h5v5h-5z"/><path fill="#b4fc00" d="M1506 301h5v5h-5zM1501 306h5v5h-5zM1496 316h5v5h-5zM1491 321h5v5h-5z"/><path fill="#c0fc00" d="M1511 301h5v5h-5zM1506 306h5v5h-5zM1501 316h5v5h-5zM1496 321h5v5h-5z"/><path fill="#ccfc00" d="M1516 301h5v5h-5zM1506 316h5v5h-5zM1501 321h5v5h-5z"/><path fill="#0cfc12" d="M1376 306h10v5h-10zM1376 311h10v5h-10z"/><path fill="#24fc0c" d="M1406 306h10v5h-10zM1406 311h5v5h-5zM1406 316h5v5h-5z"/><path fill="#2afc0c" d="M1416 306h5v5h-5zM1411 311h5v5h-5zM1411 316h5v5h-5z"/><path fill="#54fc06" d="M1446 306h5v5h-5zM1446 311h5v5h-5zM1441 316h5v5h-5z"/><path fill="#5afc06" d="M1451 306h5v5h-5zM1451 311h5v5h-5zM1446 316h5v5h-5z"/><path fill="#a8fc00" d="M1496 306h5v5h-5zM1486 321h5v5h-5z"/><path fill="#c6fc00" d="M1511 306h5v5h-5zM1506 311h5v5h-5zM1496 326h5v5h-5z"/><path fill="#d2fc00" d="M1516 306h5v5h-5zM1511 311h5v5h-5zM1501 326h5v5h-5z"/><path fill="#defc00" d="M1521 306h5v5h-5zM1516 311h5v5h-5zM1506 326h5v5h-5zM1501 331h5v5h-5z"/><path fill="#eafc00" d="M1526 306h5v5h-5zM1521 311h5v5h-5zM1516 316h5v5h-5zM1506 331h5v5h-5z"/><path fill="#00fc1e" d="M1331 311h5v5h-5zM1331 316h20v5h-20zM1336 321h25v5h-25zM1346 326h15v5h-15z"/><path fill="#12fc12" d="M1386 311h5v5h-5zM1381 316h10v5h-10z"/><path fill="#18fc12" d="M1391 311h5v5h-5zM1391 316h5v5h-5zM1391 321h5v5h-5z"/><path fill="#30fc0c" d="M1416 311h5v5h-5zM1416 316h5v5h-5z"/><path fill="#36fc0c" d="M1421 311h5v5h-5zM1421 316h5v5h-5z"/><path fill="#3cfc0c" d="M1426 311h5v5h-5zM1426 316h5v5h-5zM1421 321h5v5h-5z"/><path fill="#66fc06" d="M1456 311h5v5h-5zM1451 321h5v5h-5z"/><path fill="#6cfc06" d="M1461 311h5v5h-5zM1456 316h5v5h-5zM1456 321h5v5h-5z"/><path fill="#f6fc00" d="M1526 311h5v5h-5zM1521 316h5v5h-5zM1506 336h5v5h-5z"/><path fill="#fcfc00" d="M1531 311h5v5h-5zM1526 316h5v5h-5zM1521 321h5v5h-5zM1516 326h5v5h-5zM1511 331h5v5h-5zM1511 336h5v5h-5z"/><path fill="#06fc18" d="M1361 316h15v5h-15zM1361 321h10v5h-10z"/><path fill="#0cfc18" d="M1376 316h5v5h-5zM1371 321h10v5h-10zM1376 326h5v5h-5z"/><path fill="#1efc12" d="M1396 316h10v5h-10zM1396 321h5v5h-5z"/><path fill="#42fc0c" d="M1431 316h5v5h-5zM1426 321h5v5h-5z"/><path fill="#48fc0c" d="M1436 316h5v5h-5zM1431 321h5v5h-5zM1431 326h5v5h-5z"/><path fill="#60fc06" d="M1451 316h5v5h-5z"/><path fill="#72fc06" d="M1461 316h5v5h-5zM1456 326h5v5h-5z"/><path fill="#78fc06" d="M1466 316h5v5h-5zM1461 321h5v5h-5z"/><path fill="#84fc06" d="M1471 316h5v5h-5zM1466 326h5v5h-5z"/><path fill="#d8fc00" d="M1511 316h5v5h-5zM1506 321h5v5h-5z"/><path fill="#fcf000" d="M1531 316h5v5h-5zM1526 321h5v5h-5z"/><path fill="#fce400" d="M1536 316h5v5h-5zM1531 321h5v5h-5zM1516 341h5v5h-5z"/><path fill="#fcd800" d="M1541 316h5v5h-5zM1536 321h5v5h-5zM1521 341h5v5h-5z"/><path fill="#00fc24" d="M1331 321h5v5h-5zM1326 326h20v5h-20zM1336 331h25v5h-25zM1351 336h5v5h-5z"/><path fill="#12fc18" d="M1381 321h10v5h-10zM1381 326h5v5h-5z"/><path fill="#24fc12" d="M1401 321h5v5h-5zM1401 326h5v5h-5z"/><path fill="#2afc12" d="M1406 321h5v5h-5zM1406 326h5v5h-5z"/><path fill="#30fc12" d="M1411 321h5v5h-5zM1411 326h5v5h-5z"/><path fill="#36fc12" d="M1416 321h5v5h-5zM1416 326h5v5h-5z"/><path fill="#4efc0c" d="M1436 321h5v5h-5z"/><path fill="#54fc0c" d="M1441 321h5v5h-5zM1436 326h5v5h-5z"/><path fill="#60fc0c" d="M1446 321h5v5h-5zM1446 326h5v5h-5zM1441 331h5v5h-5z"/><path fill="#7efc06" d="M1466 321h5v5h-5zM1461 326h5v5h-5z"/><path fill="#8afc06" d="M1471 321h5v5h-5zM1466 331h5v5h-5z"/><path fill="#96fc06" d="M1476 321h5v5h-5zM1471 331h5v5h-5z"/><path fill="#e4fc00" d="M1511 321h5v5h-5z"/><path fill="#f0fc00" d="M1516 321h5v5h-5zM1511 326h5v5h-5z"/><path fill="#fccc00" d="M1541 321h5v5h-5zM1526 341h5v5h-5zM1521 346h5v5h-5z"/><path fill="#fcc600" d="M1546 321h5v5h-5zM1541 326h5v5h-5zM1536 331h5v5h-5zM1531 336h5v5h-5z"/><path fill="#06fc1e" d="M1361 326h10v5h-10zM1361 331h10v5h-10z"/><path fill="#0cfc1e" d="M1371 326h5v5h-5zM1371 331h5v5h-5z"/><path fill="#18fc18" d="M1386 326h10v5h-10zM1386 331h5v5h-5z"/><path fill="#1efc18" d="M1396 326h5v5h-5zM1391 331h5v5h-5z"/><path fill="#3cfc12" d="M1421 326h5v5h-5zM1416 331h5v5h-5z"/><path fill="#42fc12" d="M1426 326h5v5h-5zM1421 331h5v5h-5z"/><path fill="#5afc0c" d="M1441 326h5v5h-5z"/><path fill="#6cfc0c" d="M1451 326h5v5h-5z"/><path fill="#90fc06" d="M1471 326h5v5h-5z"/><path fill="#9cfc06" d="M1476 326h5v5h-5z"/><path fill="#a8fc06" d="M1481 326h5v5h-5zM1476 336h5v5h-5z"/><path fill="#aefc06" d="M1486 326h5v5h-5zM1481 331h5v5h-5z"/><path fill="#fcf600" d="M1521 326h5v5h-5zM1516 331h5v5h-5z"/><path fill="#fcea00" d="M1526 326h5v5h-5zM1521 331h5v5h-5zM1516 336h5v5h-5z"/><path fill="#fcde00" d="M1531 326h5v5h-5zM1526 331h5v5h-5zM1521 336h5v5h-5z"/><path fill="#fcd200" d="M1536 326h5v5h-5zM1531 331h5v5h-5zM1526 336h5v5h-5z"/><path fill="#fcba00" d="M1546 326h5v5h-5zM1526 351h5v5h-5z"/><path fill="#fcb400" d="M1551 326h5v5h-5zM1546 331h5v5h-5zM1541 336h5v5h-5zM1536 341h5v5h-5zM1531 346h5v5h-5z"/><path fill="#fca800" d="M1556 326h5v5h-5zM1536 351h5v5h-5zM1531 356h5v5h-5z"/><path fill="#00fc2a" d="M1326 331h10v5h-10zM1326 336h25v5h-25zM1336 341h20v5h-20z"/><path fill="#12fc1e" d="M1376 331h10v5h-10zM1376 336h10v5h-10z"/><path fill="#24fc18" d="M1396 331h10v5h-10z"/><path fill="#2afc18" d="M1406 331h5v5h-5zM1401 336h5v5h-5z"/><path fill="#30fc18" d="M1411 331h5v5h-5zM1406 336h5v5h-5z"/><path fill="#48fc12" d="M1426 331h5v5h-5zM1426 336h5v5h-5z"/><path fill="#4efc12" d="M1431 331h5v5h-5z"/><path fill="#54fc12" d="M1436 331h5v5h-5zM1431 336h5v5h-5z"/><path fill="#66fc0c" d="M1446 331h5v5h-5z"/><path fill="#72fc0c" d="M1451 331h5v5h-5z"/><path fill="#78fc0c" d="M1456 331h5v5h-5zM1451 336h5v5h-5z"/><path fill="#84fc0c" d="M1461 331h5v5h-5z"/><path fill="#a2fc06" d="M1476 331h5v5h-5z"/><path fill="#bafc06" d="M1486 331h5v5h-5z"/><path fill="#c6fc06" d="M1491 331h5v5h-5z"/><path fill="#d2fc06" d="M1496 331h5v5h-5z"/><path fill="#fcc000" d="M1541 331h5v5h-5zM1536 336h5v5h-5zM1531 341h5v5h-5zM1526 346h5v5h-5z"/><path fill="#fcae00" d="M1551 331h5v5h-5zM1546 336h5v5h-5zM1541 341h5v5h-5zM1536 346h5v5h-5zM1531 351h5v5h-5z"/><path fill="#fca200" d="M1556 331h5v5h-5zM1551 336h5v5h-5zM1546 341h5v5h-5zM1541 346h5v5h-5z"/><path fill="#fc9c00" d="M1561 331h5v5h-5zM1556 336h5v5h-5zM1551 341h5v5h-5zM1546 346h5v5h-5zM1541 351h5v5h-5zM1536 356h5v5h-5z"/><path fill="#06fc24" d="M1356 336h10v5h-10z"/><path fill="#0cfc24" d="M1366 336h10v5h-10zM1366 341h10v5h-10z"/><path fill="#18fc1e" d="M1386 336h5v5h-5z"/><path fill="#1efc1e" d="M1391 336h5v5h-5zM1386 341h10v5h-10z"/><path fill="#24fc1e" d="M1396 336h5v5h-5zM1396 341h5v5h-5z"/><path fill="#36fc18" d="M1411 336h5v5h-5zM1411 341h5v5h-5z"/><path fill="#3cfc18" d="M1416 336h5v5h-5z"/><path fill="#42fc18" d="M1421 336h5v5h-5zM1416 341h5v5h-5z"/><path fill="#5afc12" d="M1436 336h5v5h-5z"/><path fill="#66fc12" d="M1441 336h5v5h-5zM1441 341h5v5h-5z"/><path fill="#6cfc12" d="M1446 336h5v5h-5z"/><path fill="#7efc0c" d="M1456 336h5v5h-5z"/><path fill="#8afc0c" d="M1461 336h5v5h-5z"/><path fill="#96fc0c" d="M1466 336h5v5h-5z"/><path fill="#9cfc0c" d="M1471 336h5v5h-5zM1466 341h5v5h-5z"/><path fill="#b4fc06" d="M1481 336h5v5h-5z"/><path fill="#c0fc06" d="M1486 336h5v5h-5z"/><path fill="#ccfc06" d="M1491 336h5v5h-5zM1486 341h5v5h-5z"/><path fill="#d8fc06" d="M1496 336h5v5h-5zM1491 341h5v5h-5z"/><path fill="#eafc06" d="M1501 336h5v5h-5z"/><path fill="#fc9600" d="M1561 336h5v5h-5zM1556 341h5v5h-5zM1551 346h5v5h-5zM1546 351h5v5h-5zM1541 356h5v5h-5z"/><path fill="#fc9000" d="M1566 336h5v5h-5zM1561 341h5v5h-5zM1556 346h5v5h-5zM1551 351h5v5h-5zM1546 356h5v5h-5zM1541 361h5v5h-5z"/><path fill="#fc8400" d="M1571 336h5v5h-5zM1566 341h5v5h-5zM1561 346h5v5h-5zM1556 351h5v5h-5zM1551 356h5v5h-5zM1546 361h5v5h-5z"/><path fill="#00fc30" d="M1326 341h10v5h-10zM1331 346h25v5h-25zM1346 351h5v5h-5z"/><path fill="#06fc2a" d="M1356 341h10v5h-10zM1356 346h10v5h-10z"/><path fill="#12fc24" d="M1376 341h5v5h-5zM1376 346h5v5h-5z"/><path fill="#18fc24" d="M1381 341h5v5h-5zM1381 346h5v5h-5z"/><path fill="#2afc1e" d="M1401 341h5v5h-5z"/><path fill="#30fc1e" d="M1406 341h5v5h-5zM1401 346h5v5h-5z"/><path fill="#48fc18" d="M1421 341h5v5h-5z"/><path fill="#4efc18" d="M1426 341h5v5h-5z"/><path fill="#54fc18" d="M1431 341h5v5h-5zM1426 346h5v5h-5z"/><path fill="#60fc12" d="M1436 341h5v5h-5z"/><path fill="#72fc12" d="M1446 341h5v5h-5z"/><path fill="#78fc12" d="M1451 341h5v5h-5zM1446 346h5v5h-5z"/><path fill="#84fc12" d="M1456 341h5v5h-5zM1451 346h5v5h-5z"/><path fill="#90fc0c" d="M1461 341h5v5h-5z"/><path fill="#a8fc0c" d="M1471 341h5v5h-5z"/><path fill="#b4fc0c" d="M1476 341h5v5h-5z"/><path fill="#c0fc0c" d="M1481 341h5v5h-5z"/><path fill="#e4fc06" d="M1496 341h5v5h-5z"/><path fill="#f6fc06" d="M1501 341h5v5h-5z"/><path fill="#fcfc06" d="M1506 341h5v5h-5zM1501 346h5v5h-5z"/><path fill="#fcf006" d="M1511 341h5v5h-5zM1506 346h5v5h-5z"/><path fill="#fc7e00" d="M1571 341h5v5h-5zM1566 346h5v5h-5zM1561 351h5v5h-5zM1556 356h5v5h-5zM1551 361h5v5h-5zM1546 366h5v5h-5z"/><path fill="#fc7800" d="M1576 341h5v5h-5zM1571 346h5v5h-5zM1566 351h5v5h-5zM1561 356h5v5h-5zM1556 361h5v5h-5zM1551 366h5v5h-5z"/><path fill="#00fc36" d="M1321 346h10v5h-10zM1321 351h25v5h-25zM1336 356h15v5h-15z"/><path fill="#0cfc2a" d="M1366 346h5v5h-5z"/><path fill="#12fc2a" d="M1371 346h5v5h-5zM1371 351h5v5h-5z"/><path fill="#1efc24" d="M1386 346h5v5h-5z"/><path fill="#24fc24" d="M1391 346h5v5h-5zM1391 351h5v5h-5z"/><path fill="#2afc24" d="M1396 346h5v5h-5zM1396 351h5v5h-5z"/><path fill="#36fc1e" d="M1406 346h5v5h-5z"/><path fill="#3cfc1e" d="M1411 346h5v5h-5z"/><path fill="#42fc1e" d="M1416 346h5v5h-5z"/><path fill="#48fc1e" d="M1421 346h5v5h-5zM1416 351h5v5h-5z"/><path fill="#5afc18" d="M1431 346h5v5h-5z"/><path fill="#66fc18" d="M1436 346h5v5h-5z"/><path fill="#6cfc18" d="M1441 346h5v5h-5zM1436 351h5v5h-5z"/><path fill="#8afc12" d="M1456 346h5v5h-5z"/><path fill="#96fc12" d="M1461 346h5v5h-5z"/><path fill="#a2fc12" d="M1466 346h5v5h-5z"/><path fill="#aefc0c" d="M1471 346h5v5h-5z"/><path fill="#bafc0c" d="M1476 346h5v5h-5z"/><path fill="#c6fc0c" d="M1481 346h5v5h-5z"/><path fill="#d2fc0c" d="M1486 346h5v5h-5zM1481 351h5v5h-5z"/><path fill="#e4fc0c" d="M1491 346h5v5h-5z"/><path fill="#f0fc06" d="M1496 346h5v5h-5z"/><path fill="#fce406" d="M1511 346h5v5h-5zM1506 351h5v5h-5z"/><path fill="#fcd806" d="M1516 346h5v5h-5zM1511 351h5v5h-5z"/><path fill="#fc7200" d="M1576 346h10v5h-10zM1571 351h10v5h-10zM1566 356h5v5h-5zM1561 361h5v5h-5zM1556 366h5v5h-5zM1551 371h5v5h-5z"/><path fill="#fc6c00" d="M1586 346h5v5h-5zM1581 351h5v5h-5zM1571 356h10v5h-10zM1566 361h10v5h-10zM1561 366h5v5h-5zM1556 371h5v5h-5z"/><path fill="#06fc30" d="M1351 351h15v5h-15z"/><path fill="#0cfc30" d="M1366 351h5v5h-5zM1361 356h10v5h-10z"/><path fill="#18fc2a" d="M1376 351h10v5h-10z"/><path fill="#1efc2a" d="M1386 351h5v5h-5z"/><path fill="#30fc24" d="M1401 351h5v5h-5z"/><path fill="#36fc24" d="M1406 351h5v5h-5z"/><path fill="#42fc24" d="M1411 351h5v5h-5zM1411 356h5v5h-5z"/><path fill="#4efc1e" d="M1421 351h5v5h-5z"/><path fill="#5afc1e" d="M1426 351h5v5h-5z"/><path fill="#60fc1e" d="M1431 351h5v5h-5z"/><path fill="#72fc18" d="M1441 351h5v5h-5z"/><path fill="#7efc18" d="M1446 351h5v5h-5z"/><path fill="#8afc18" d="M1451 351h5v5h-5z"/><path fill="#90fc18" d="M1456 351h5v5h-5zM1451 356h5v5h-5z"/><path fill="#9cfc12" d="M1461 351h5v5h-5z"/><path fill="#a8fc12" d="M1466 351h5v5h-5z"/><path fill="#b4fc12" d="M1471 351h5v5h-5z"/><path fill="#c0fc12" d="M1476 351h5v5h-5zM1471 356h5v5h-5z"/><path fill="#defc0c" d="M1486 351h5v5h-5z"/><path fill="#eafc0c" d="M1491 351h5v5h-5z"/><path fill="#fcfc0c" d="M1496 351h5v5h-5z"/><path fill="#fcf60c" d="M1501 351h5v5h-5zM1496 356h5v5h-5z"/><path fill="#fccc06" d="M1516 351h5v5h-5zM1511 356h5v5h-5z"/><path fill="#fcc006" d="M1521 351h5v5h-5z"/><path fill="#fc6600" d="M1586 351h5v5h-5zM1581 356h5v5h-5zM1576 361h5v5h-5zM1566 366h10v5h-10zM1561 371h10v5h-10zM1556 376h5v5h-5z"/><path fill="#fc6000" d="M1591 351h5v5h-5zM1586 356h5v5h-5zM1581 361h5v5h-5zM1576 366h5v5h-5zM1571 371h5v5h-5zM1561 376h10v5h-10z"/><path fill="#00fc3c" d="M1321 356h15v5h-15zM1331 361h20v5h-20z"/><path fill="#06fc36" d="M1351 356h10v5h-10zM1356 361h5v5h-5z"/><path fill="#12fc30" d="M1371 356h5v5h-5z"/><path fill="#18fc30" d="M1376 356h5v5h-5z"/><path fill="#1efc30" d="M1381 356h5v5h-5zM1381 361h5v5h-5z"/><path fill="#24fc2a" d="M1386 356h5v5h-5z"/><path fill="#2afc2a" d="M1391 356h5v5h-5z"/><path fill="#30fc2a" d="M1396 356h5v5h-5z"/><path fill="#36fc2a" d="M1401 356h5v5h-5zM1401 361h5v5h-5z"/><path fill="#3cfc24" d="M1406 356h5v5h-5z"/><path fill="#4efc24" d="M1416 356h5v5h-5z"/><path fill="#54fc24" d="M1421 356h5v5h-5z"/><path fill="#5afc24" d="M1426 356h5v5h-5zM1421 361h5v5h-5z"/><path fill="#66fc1e" d="M1431 356h5v5h-5z"/><path fill="#72fc1e" d="M1436 356h5v5h-5z"/><path fill="#78fc1e" d="M1441 356h5v5h-5z"/><path fill="#84fc1e" d="M1446 356h5v5h-5z"/><path fill="#9cfc18" d="M1456 356h5v5h-5z"/><path fill="#a8fc18" d="M1461 356h5v5h-5z"/><path fill="#b4fc18" d="M1466 356h5v5h-5z"/><path fill="#ccfc12" d="M1476 356h5v5h-5z"/><path fill="#d8fc12" d="M1481 356h5v5h-5z"/><path fill="#eafc12" d="M1486 356h5v5h-5z"/><path fill="#f6fc0c" d="M1491 356h5v5h-5z"/><path fill="#fcea0c" d="M1501 356h5v5h-5z"/><path fill="#fcd80c" d="M1506 356h5v5h-5z"/><path fill="#fcc606" d="M1516 356h5v5h-5z"/><path fill="#fcba06" d="M1521 356h5v5h-5zM1516 361h5v5h-5z"/><path fill="#fcae06" d="M1526 356h5v5h-5zM1521 361h5v5h-5z"/><path fill="#fc5a00" d="M1591 356h10v5h-10zM1586 361h5v5h-5zM1581 366h5v5h-5zM1576 371h5v5h-5zM1571 376h5v5h-5zM1566 381h5v5h-5z"/><path fill="#fc5400" d="M1601 356h5v5h-5zM1591 361h10v5h-10zM1586 366h10v5h-10zM1581 371h10v5h-10zM1576 376h5v5h-5zM1571 381h5v5h-5z"/><path fill="#00fc42" d="M1321 361h10v5h-10zM1326 366h25v5h-25z"/><path fill="#06fc3c" d="M1351 361h5v5h-5zM1351 366h10v5h-10z"/><path fill="#0cfc36" d="M1361 361h5v5h-5z"/><path fill="#12fc36" d="M1366 361h10v5h-10z"/><path fill="#18fc36" d="M1376 361h5v5h-5zM1376 366h5v5h-5z"/><path fill="#24fc30" d="M1386 361h5v5h-5z"/><path fill="#2afc30" d="M1391 361h5v5h-5z"/><path fill="#30fc30" d="M1396 361h5v5h-5z"/><path fill="#42fc2a" d="M1406 361h5v5h-5z"/><path fill="#48fc2a" d="M1411 361h5v5h-5z"/><path fill="#4efc2a" d="M1416 361h5v5h-5z"/><path fill="#60fc24" d="M1426 361h5v5h-5z"/><path fill="#6cfc24" d="M1431 361h5v5h-5z"/><path fill="#78fc24" d="M1436 361h5v5h-5z"/><path fill="#7efc1e" d="M1441 361h5v5h-5z"/><path fill="#8afc1e" d="M1446 361h5v5h-5z"/><path fill="#96fc1e" d="M1451 361h5v5h-5z"/><path fill="#a2fc1e" d="M1456 361h5v5h-5z"/><path fill="#aefc18" d="M1461 361h5v5h-5z"/><path fill="#bafc18" d="M1466 361h5v5h-5z"/><path fill="#c6fc18" d="M1471 361h5v5h-5z"/><path fill="#d8fc18" d="M1476 361h5v5h-5z"/><path fill="#e4fc12" d="M1481 361h5v5h-5z"/><path fill="#f6fc12" d="M1486 361h5v5h-5z"/><path fill="#fcfc12" d="M1491 361h5v5h-5z"/><path fill="#fcea12" d="M1496 361h5v5h-5zM1491 366h5v5h-5z"/><path fill="#fcde0c" d="M1501 361h5v5h-5z"/><path fill="#fcd20c" d="M1506 361h5v5h-5zM1501 366h5v5h-5z"/><path fill="#fcc60c" d="M1511 361h5v5h-5zM1506 366h5v5h-5z"/><path fill="#fca806" d="M1526 361h5v5h-5zM1521 366h5v5h-5z"/><path fill="#fc9c06" d="M1531 361h5v5h-5zM1526 366h5v5h-5z"/><path fill="#fc9606" d="M1536 361h5v5h-5zM1531 366h5v5h-5zM1526 371h5v5h-5z"/><path fill="#fc4e00" d="M1601 361h10v5h-10zM1596 366h5v5h-5zM1591 371h5v5h-5zM1581 376h10v5h-10zM1576 381h10v5h-10zM1571 386h10v5h-10z"/><path fill="#00fc48" d="M1316 366h10v5h-10zM1326 371h20v5h-20z"/><path fill="#0cfc3c" d="M1361 366h5v5h-5z"/><path fill="#12fc3c" d="M1366 366h5v5h-5z"/><path fill="#18fc3c" d="M1371 366h5v5h-5zM1371 371h5v5h-5z"/><path fill="#1efc36" d="M1381 366h5v5h-5z"/><path fill="#24fc36" d="M1386 366h5v5h-5z"/><path fill="#30fc36" d="M1391 366h5v5h-5zM1391 371h5v5h-5z"/><path fill="#36fc30" d="M1396 366h5v5h-5z"/><path fill="#3cfc30" d="M1401 366h5v5h-5z"/><path fill="#42fc30" d="M1406 366h5v5h-5z"/><path fill="#4efc30" d="M1411 366h5v5h-5zM1411 371h5v5h-5z"/><path fill="#54fc2a" d="M1416 366h5v5h-5z"/><path fill="#60fc2a" d="M1421 366h5v5h-5z"/><path fill="#66fc2a" d="M1426 366h5v5h-5z"/><path fill="#72fc2a" d="M1431 366h5v5h-5z"/><path fill="#7efc24" d="M1436 366h5v5h-5z"/><path fill="#84fc24" d="M1441 366h5v5h-5z"/><path fill="#90fc24" d="M1446 366h5v5h-5z"/><path fill="#9cfc24" d="M1451 366h5v5h-5z"/><path fill="#a8fc1e" d="M1456 366h5v5h-5z"/><path fill="#bafc1e" d="M1461 366h5v5h-5z"/><path fill="#c6fc1e" d="M1466 366h5v5h-5z"/><path fill="#d2fc1e" d="M1471 366h5v5h-5z"/><path fill="#e4fc18" d="M1476 366h5v5h-5z"/><path fill="#f0fc18" d="M1481 366h5v5h-5z"/><path fill="#fcfc18" d="M1486 366h5v5h-5z"/><path fill="#fcde12" d="M1496 366h5v5h-5z"/><path fill="#fcba0c" d="M1511 366h5v5h-5zM1506 371h5v5h-5z"/><path fill="#fcae0c" d="M1516 366h5v5h-5z"/><path fill="#fc9006" d="M1536 366h5v5h-5zM1531 371h5v5h-5z"/><path fill="#fc8406" d="M1541 366h5v5h-5zM1536 371h5v5h-5zM1531 376h5v5h-5z"/><path fill="#fc4800" d="M1601 366h10v5h-10zM1596 371h10v5h-10zM1591 376h10v5h-10zM1586 381h5v5h-5zM1581 386h5v5h-5zM1576 391h5v5h-5z"/><path fill="#fc4200" d="M1611 366h10v5h-10zM1606 371h10v5h-10zM1601 376h10v5h-10zM1591 381h10v5h-10zM1586 386h10v5h-10zM1581 391h10v5h-10z"/><path fill="#00fc4e" d="M1316 371h10v5h-10zM1321 376h25v5h-25z"/><path fill="#06fc42" d="M1346 371h10v5h-10z"/><path fill="#0cfc42" d="M1356 371h10v5h-10z"/><path fill="#12fc42" d="M1366 371h5v5h-5zM1366 376h5v5h-5z"/><path fill="#1efc3c" d="M1376 371h5v5h-5z"/><path fill="#24fc3c" d="M1381 371h5v5h-5z"/><path fill="#2afc3c" d="M1386 371h5v5h-5z"/><path fill="#36fc36" d="M1396 371h5v5h-5z"/><path fill="#42fc36" d="M1401 371h5v5h-5z"/><path fill="#48fc36" d="M1406 371h5v5h-5z"/><path fill="#5afc30" d="M1416 371h5v5h-5z"/><path fill="#60fc30" d="M1421 371h5v5h-5z"/><path fill="#6cfc30" d="M1426 371h5v5h-5z"/><path fill="#78fc2a" d="M1431 371h5v5h-5z"/><path fill="#84fc2a" d="M1436 371h5v5h-5z"/><path fill="#90fc2a" d="M1441 371h5v5h-5z"/><path fill="#9cfc2a" d="M1446 371h5v5h-5z"/><path fill="#a8fc24" d="M1451 371h5v5h-5z"/><path fill="#b4fc24" d="M1456 371h5v5h-5z"/><path fill="#c0fc24" d="M1461 371h5v5h-5z"/><path fill="#d2fc24" d="M1466 371h5v5h-5z"/><path fill="#defc1e" d="M1471 371h5v5h-5z"/><path fill="#f0fc1e" d="M1476 371h5v5h-5z"/><path fill="#fcfc1e" d="M1481 371h5v5h-5z"/><path fill="#fcf018" d="M1486 371h5v5h-5z"/><path fill="#fce418" d="M1491 371h5v5h-5z"/><path fill="#fcd212" d="M1496 371h5v5h-5z"/><path fill="#fcc612" d="M1501 371h5v5h-5z"/><path fill="#fcb40c" d="M1511 371h5v5h-5z"/><path fill="#fca80c" d="M1516 371h5v5h-5zM1511 376h5v5h-5z"/><path fill="#fc9c0c" d="M1521 371h5v5h-5zM1516 376h5v5h-5z"/><path fill="#fc7e06" d="M1541 371h5v5h-5zM1536 376h5v5h-5z"/><path fill="#fc7806" d="M1546 371h5v5h-5zM1541 376h5v5h-5zM1536 381h5v5h-5z"/><path fill="#fc3c00" d="M1616 371h10v5h-10zM1611 376h10v5h-10zM1601 381h10v5h-10zM1596 386h10v5h-10zM1591 391h10v5h-10zM1581 396h10v5h-10z"/><path fill="#00fc54" d="M1316 376h5v5h-5zM1321 381h25v5h-25z"/><path fill="#06fc48" d="M1346 376h10v5h-10z"/><path fill="#0cfc48" d="M1356 376h5v5h-5z"/><path fill="#12fc48" d="M1361 376h5v5h-5z"/><path fill="#18fc42" d="M1371 376h5v5h-5z"/><path fill="#1efc42" d="M1376 376h5v5h-5z"/><path fill="#24fc42" d="M1381 376h5v5h-5z"/><path fill="#2afc42" d="M1386 376h5v5h-5z"/><path fill="#36fc3c" d="M1391 376h5v5h-5z"/><path fill="#3cfc3c" d="M1396 376h5v5h-5z"/><path fill="#42fc3c" d="M1401 376h5v5h-5z"/><path fill="#4efc3c" d="M1406 376h5v5h-5zM1406 381h5v5h-5z"/><path fill="#54fc36" d="M1411 376h5v5h-5z"/><path fill="#60fc36" d="M1416 376h5v5h-5z"/><path fill="#66fc36" d="M1421 376h5v5h-5z"/><path fill="#72fc30" d="M1426 376h5v5h-5z"/><path fill="#7efc30" d="M1431 376h5v5h-5z"/><path fill="#8afc30" d="M1436 376h5v5h-5z"/><path fill="#96fc30" d="M1441 376h5v5h-5z"/><path fill="#a2fc2a" d="M1446 376h5v5h-5z"/><path fill="#aefc2a" d="M1451 376h5v5h-5z"/><path fill="#c0fc2a" d="M1456 376h5v5h-5z"/><path fill="#ccfc2a" d="M1461 376h5v5h-5z"/><path fill="#d8fc24" d="M1466 376h5v5h-5z"/><path fill="#eafc24" d="M1471 376h5v5h-5z"/><path fill="#fcfc24" d="M1476 376h5v5h-5z"/><path fill="#fcf01e" d="M1481 376h5v5h-5z"/><path fill="#fce41e" d="M1486 376h5v5h-5z"/><path fill="#fcd818" d="M1491 376h5v5h-5z"/><path fill="#fcc618" d="M1496 376h5v5h-5z"/><path fill="#fcc012" d="M1501 376h5v5h-5z"/><path fill="#fcb412" d="M1506 376h5v5h-5z"/><path fill="#fc960c" d="M1521 376h5v5h-5zM1516 381h5v5h-5z"/><path fill="#fc900c" d="M1526 376h5v5h-5zM1521 381h5v5h-5z"/><path fill="#fc7206" d="M1546 376h5v5h-5zM1541 381h5v5h-5z"/><path fill="#fc6c06" d="M1551 376h5v5h-5zM1546 381h5v5h-5zM1541 386h5v5h-5z"/><path fill="#fc3600" d="M1621 376h10v5h-10zM1611 381h15v5h-15zM1606 386h10v5h-10zM1601 391h10v5h-10zM1591 396h15v5h-15zM1591 401h5v5h-5z"/><path fill="#00fc5a" d="M1316 381h5v5h-5zM1326 386h20v5h-20z"/><path fill="#06fc4e" d="M1346 381h10v5h-10z"/><path fill="#0cfc4e" d="M1356 381h5v5h-5z"/><path fill="#12fc4e" d="M1361 381h5v5h-5z"/><path fill="#18fc48" d="M1366 381h5v5h-5z"/><path fill="#1efc48" d="M1371 381h5v5h-5z"/><path fill="#24fc48" d="M1376 381h5v5h-5z"/><path fill="#2afc48" d="M1381 381h5v5h-5z"/><path fill="#30fc42" d="M1386 381h5v5h-5z"/><path fill="#36fc42" d="M1391 381h5v5h-5z"/><path fill="#3cfc42" d="M1396 381h5v5h-5z"/><path fill="#48fc42" d="M1401 381h5v5h-5z"/><path fill="#5afc3c" d="M1411 381h5v5h-5z"/><path fill="#66fc3c" d="M1416 381h5v5h-5z"/><path fill="#6cfc3c" d="M1421 381h5v5h-5z"/><path fill="#78fc36" d="M1426 381h5v5h-5z"/><path fill="#84fc36" d="M1431 381h5v5h-5z"/><path fill="#90fc36" d="M1436 381h5v5h-5z"/><path fill="#9cfc36" d="M1441 381h5v5h-5z"/><path fill="#aefc30" d="M1446 381h5v5h-5z"/><path fill="#bafc30" d="M1451 381h5v5h-5z"/><path fill="#c6fc30" d="M1456 381h5v5h-5z"/><path fill="#d8fc2a" d="M1461 381h5v5h-5z"/><path fill="#e4fc2a" d="M1466 381h5v5h-5z"/><path fill="#f6fc2a" d="M1471 381h5v5h-5z"/><path fill="#fcf624" d="M1476 381h5v5h-5z"/><path fill="#fce424" d="M1481 381h5v5h-5z"/><path fill="#fcd81e" d="M1486 381h5v5h-5z"/><path fill="#fccc18" d="M1491 381h5v5h-5z"/><path fill="#fcc018" d="M1496 381h5v5h-5z"/><path fill="#fcb418" d="M1501 381h5v5h-5zM1496 386h5v5h-5z"/><path fill="#fca812" d="M1506 381h5v5h-5z"/><path fill="#fca212" d="M1511 381h5v5h-5zM1506 386h5v5h-5z"/><path fill="#fc840c" d="M1526 381h5v5h-5zM1521 386h5v5h-5z"/><path fill="#fc7e0c" d="M1531 381h5v5h-5zM1526 386h5v5h-5z"/><path fill="#fc6606" d="M1551 381h5v5h-5zM1546 386h5v5h-5z"/><path fill="#fc6006" d="M1556 381h5v5h-5zM1551 386h5v5h-5zM1546 391h5v5h-5z"/><path fill="#fc5a06" d="M1561 381h5v5h-5zM1556 386h10v5h-10zM1551 391h5v5h-5z"/><path fill="#fc3000" d="M1626 381h10v5h-10zM1616 386h15v5h-15zM1611 391h15v5h-15zM1606 396h10v5h-10zM1596 401h15v5h-15zM1596 406h5v5h-5z"/><path fill="#fc2a00" d="M1636 381h5v5h-5zM1631 386h15v5h-15zM1626 391h10v5h-10zM1616 396h15v5h-15zM1611 401h10v5h-10zM1601 406h15v5h-15zM1601 411h5v5h-5z"/><path fill="#00fc60" d="M1311 386h15v5h-15zM1326 391h15v5h-15z"/><path fill="#06fc54" d="M1346 386h5v5h-5z"/><path fill="#0cfc54" d="M1351 386h10v5h-10z"/><path fill="#12fc54" d="M1361 386h5v5h-5z"/><path fill="#18fc4e" d="M1366 386h5v5h-5z"/><path fill="#1efc4e" d="M1371 386h5v5h-5z"/><path fill="#24fc4e" d="M1376 386h5v5h-5z"/><path fill="#2afc4e" d="M1381 386h5v5h-5z"/><path fill="#30fc48" d="M1386 386h5v5h-5z"/><path fill="#3cfc48" d="M1391 386h5v5h-5z"/><path fill="#42fc48" d="M1396 386h5v5h-5z"/><path fill="#4efc48" d="M1401 386h5v5h-5z"/><path fill="#54fc42" d="M1406 386h5v5h-5z"/><path fill="#60fc42" d="M1411 386h5v5h-5z"/><path fill="#6cfc42" d="M1416 386h5v5h-5z"/><path fill="#72fc42" d="M1421 386h5v5h-5z"/><path fill="#7efc3c" d="M1426 386h5v5h-5z"/><path fill="#8afc3c" d="M1431 386h5v5h-5z"/><path fill="#9cfc3c" d="M1436 386h5v5h-5z"/><path fill="#a8fc3c" d="M1441 386h5v5h-5z"/><path fill="#b4fc36" d="M1446 386h5v5h-5z"/><path fill="#c6fc36" d="M1451 386h5v5h-5z"/><path fill="#d2fc36" d="M1456 386h5v5h-5z"/><path fill="#e4fc30" d="M1461 386h5v5h-5z"/><path fill="#f6fc30" d="M1466 386h5v5h-5z"/><path fill="#fcf630" d="M1471 386h5v5h-5z"/><path fill="#fcea2a" d="M1476 386h5v5h-5z"/><path fill="#fcd824" d="M1481 386h5v5h-5z"/><path fill="#fccc1e" d="M1486 386h5v5h-5z"/><path fill="#fcc01e" d="M1491 386h5v5h-5z"/><path fill="#fca818" d="M1501 386h5v5h-5z"/><path fill="#fc9612" d="M1511 386h5v5h-5z"/><path fill="#fc9012" d="M1516 386h5v5h-5zM1511 391h5v5h-5z"/><path fill="#fc780c" d="M1531 386h5v5h-5zM1526 391h5v5h-5z"/><path fill="#fc720c" d="M1536 386h5v5h-5zM1531 391h5v5h-5z"/><path fill="#fc5406" d="M1566 386h5v5h-5zM1556 391h10v5h-10zM1551 396h10v5h-10z"/><path fill="#00fc66" d="M1311 391h15v5h-15zM1331 396h10v5h-10z"/><path fill="#06fc60" d="M1341 391h10v5h-10z"/><path fill="#0cfc5a" d="M1351 391h5v5h-5z"/><path fill="#12fc5a" d="M1356 391h10v5h-10z"/><path fill="#18fc5a" d="M1366 391h5v5h-5z"/><path fill="#1efc54" d="M1371 391h5v5h-5z"/><path fill="#2afc54" d="M1376 391h5v5h-5z"/><path fill="#30fc54" d="M1381 391h5v5h-5z"/><path fill="#36fc54" d="M1386 391h5v5h-5z"/><path fill="#3cfc4e" d="M1391 391h5v5h-5z"/><path fill="#48fc4e" d="M1396 391h5v5h-5z"/><path fill="#4efc4e" d="M1401 391h5v5h-5z"/><path fill="#5afc4e" d="M1406 391h5v5h-5z"/><path fill="#66fc48" d="M1411 391h5v5h-5z"/><path fill="#72fc48" d="M1416 391h5v5h-5z"/><path fill="#7efc48" d="M1421 391h5v5h-5z"/><path fill="#8afc42" d="M1426 391h5v5h-5z"/><path fill="#96fc42" d="M1431 391h5v5h-5z"/><path fill="#a2fc42" d="M1436 391h5v5h-5z"/><path fill="#aefc42" d="M1441 391h5v5h-5z"/><path fill="#c0fc3c" d="M1446 391h5v5h-5z"/><path fill="#ccfc3c" d="M1451 391h5v5h-5z"/><path fill="#defc3c" d="M1456 391h5v5h-5z"/><path fill="#f0fc36" d="M1461 391h5v5h-5z"/><path fill="#fcfc36" d="M1466 391h5v5h-5z"/><path fill="#fcea30" d="M1471 391h5v5h-5z"/><path fill="#fcde2a" d="M1476 391h5v5h-5z"/><path fill="#fccc2a" d="M1481 391h5v5h-5z"/><path fill="#fcc024" d="M1486 391h5v5h-5z"/><path fill="#fcb41e" d="M1491 391h5v5h-5z"/><path fill="#fca81e" d="M1496 391h5v5h-5z"/><path fill="#fca218" d="M1501 391h5v5h-5z"/><path fill="#fc9618" d="M1506 391h5v5h-5z"/><path fill="#fc8412" d="M1516 391h5v5h-5z"/><path fill="#fc7e12" d="M1521 391h5v5h-5zM1516 396h5v5h-5z"/><path fill="#fc6c0c" d="M1536 391h5v5h-5zM1531 396h5v5h-5z"/><path fill="#fc660c" d="M1541 391h5v5h-5zM1536 396h5v5h-5z"/><path fill="#fc4e06" d="M1566 391h5v5h-5zM1561 396h5v5h-5zM1556 401h5v5h-5z"/><path fill="#fc4806" d="M1571 391h5v5h-5zM1566 396h10v5h-10zM1561 401h5v5h-5z"/><path fill="#fc2400" d="M1636 391h20v5h-20zM1631 396h15v5h-15zM1621 401h20v5h-20zM1616 406h15v5h-15zM1606 411h15v5h-15zM1611 416h5v5h-5z"/><path fill="#00fc6c" d="M1311 396h20v5h-20zM1336 401h5v5h-5z"/><path fill="#06fc66" d="M1341 396h10v5h-10z"/><path fill="#0cfc60" d="M1351 396h5v5h-5z"/><path fill="#12fc60" d="M1356 396h5v5h-5z"/><path fill="#18fc60" d="M1361 396h5v5h-5z"/><path fill="#1efc60" d="M1366 396h5v5h-5z"/><path fill="#24fc60" d="M1371 396h5v5h-5z"/><path fill="#2afc5a" d="M1376 396h5v5h-5z"/><path fill="#30fc5a" d="M1381 396h5v5h-5z"/><path fill="#3cfc5a" d="M1386 396h5v5h-5z"/><path fill="#42fc5a" d="M1391 396h5v5h-5z"/><path fill="#4efc54" d="M1396 396h5v5h-5z"/><path fill="#54fc54" d="M1401 396h5v5h-5z"/><path fill="#60fc54" d="M1406 396h5v5h-5z"/><path fill="#6cfc4e" d="M1411 396h5v5h-5z"/><path fill="#78fc4e" d="M1416 396h5v5h-5z"/><path fill="#84fc4e" d="M1421 396h5v5h-5z"/><path fill="#90fc4e" d="M1426 396h5v5h-5z"/><path fill="#9cfc48" d="M1431 396h5v5h-5z"/><path fill="#aefc48" d="M1436 396h5v5h-5z"/><path fill="#bafc48" d="M1441 396h5v5h-5z"/><path fill="#ccfc42" d="M1446 396h5v5h-5z"/><path fill="#d8fc42" d="M1451 396h5v5h-5z"/><path fill="#eafc42" d="M1456 396h5v5h-5z"/><path fill="#fcfc42" d="M1461 396h5v5h-5z"/><path fill="#fcf03c" d="M1466 396h5v5h-5z"/><path fill="#fcde36" d="M1471 396h5v5h-5z"/><path fill="#fcd230" d="M1476 396h5v5h-5z"/><path fill="#fcc02a" d="M1481 396h5v5h-5z"/><path fill="#fcb424" d="M1486 396h5v5h-5z"/><path fill="#fcae24" d="M1491 396h5v5h-5z"/><path fill="#fca21e" d="M1496 396h5v5h-5z"/><path fill="#fc961e" d="M1501 396h5v5h-5z"/><path fill="#fc9018" d="M1506 396h5v5h-5z"/><path fill="#fc8418" d="M1511 396h5v5h-5z"/><path fill="#fc7812" d="M1521 396h5v5h-5z"/><path fill="#fc7212" d="M1526 396h5v5h-5zM1521 401h5v5h-5z"/><path fill="#fc600c" d="M1541 396h5v5h-5zM1536 401h5v5h-5z"/><path fill="#fc5a0c" d="M1546 396h5v5h-5zM1541 401h5v5h-5z"/><path fill="#fc4206" d="M1576 396h5v5h-5zM1566 401h10v5h-10zM1561 406h10v5h-10z"/><path fill="#fc1e00" d="M1646 396h15v5h-15zM1641 401h15v5h-15zM1631 406h20v5h-20zM1621 411h20v5h-20zM1616 416h15v5h-15zM1616 421h10v5h-10z"/><path fill="#00fc78" d="M1311 401h5v5h-5zM1321 406h15v5h-15z"/><path fill="#00fc72" d="M1316 401h20v5h-20z"/><path fill="#06fc6c" d="M1341 401h5v5h-5z"/><path fill="#0cfc6c" d="M1346 401h10v5h-10z"/><path fill="#12fc6c" d="M1356 401h5v5h-5z"/><path fill="#18fc66" d="M1361 401h5v5h-5z"/><path fill="#1efc66" d="M1366 401h5v5h-5z"/><path fill="#24fc66" d="M1371 401h5v5h-5z"/><path fill="#30fc66" d="M1376 401h5v5h-5z"/><path fill="#36fc60" d="M1381 401h5v5h-5z"/><path fill="#3cfc60" d="M1386 401h5v5h-5z"/><path fill="#48fc60" d="M1391 401h5v5h-5z"/><path fill="#54fc60" d="M1396 401h5v5h-5z"/><path fill="#5afc5a" d="M1401 401h5v5h-5z"/><path fill="#66fc5a" d="M1406 401h5v5h-5z"/><path fill="#72fc5a" d="M1411 401h5v5h-5z"/><path fill="#7efc54" d="M1416 401h5v5h-5z"/><path fill="#8afc54" d="M1421 401h5v5h-5z"/><path fill="#9cfc54" d="M1426 401h5v5h-5z"/><path fill="#a8fc54" d="M1431 401h5v5h-5z"/><path fill="#b4fc4e" d="M1436 401h5v5h-5z"/><path fill="#c6fc4e" d="M1441 401h5v5h-5z"/><path fill="#d8fc4e" d="M1446 401h5v5h-5z"/><path fill="#eafc48" d="M1451 401h5v5h-5z"/><path fill="#fcfc48" d="M1456 401h5v5h-5z"/><path fill="#fcf042" d="M1461 401h5v5h-5z"/><path fill="#fce43c" d="M1466 401h5v5h-5z"/><path fill="#fcd236" d="M1471 401h5v5h-5z"/><path fill="#fcc630" d="M1476 401h5v5h-5z"/><path fill="#fcba30" d="M1481 401h5v5h-5z"/><path fill="#fcae2a" d="M1486 401h5v5h-5z"/><path fill="#fca224" d="M1491 401h5v5h-5z"/><path fill="#fc9624" d="M1496 401h5v5h-5z"/><path fill="#fc901e" d="M1501 401h5v5h-5z"/><path fill="#fc841e" d="M1506 401h5v5h-5zM1501 406h5v5h-5z"/><path fill="#fc7e18" d="M1511 401h5v5h-5z"/><path fill="#fc7818" d="M1516 401h5v5h-5zM1511 406h5v5h-5z"/><path fill="#fc6c12" d="M1526 401h5v5h-5z"/><path fill="#fc6612" d="M1531 401h5v5h-5zM1526 406h5v5h-5z"/><path fill="#fc540c" d="M1546 401h5v5h-5zM1541 406h5v5h-5z"/><path fill="#fc4e0c" d="M1551 401h5v5h-5zM1546 406h10v5h-10z"/><path fill="#fc3c06" d="M1576 401h10v5h-10zM1571 406h10v5h-10zM1566 411h5v5h-5z"/><path fill="#fc3606" d="M1586 401h5v5h-5zM1581 406h10v5h-10zM1571 411h10v5h-10zM1571 416h5v5h-5z"/><path fill="#fc1800" d="M1656 401h15v5h-15zM1651 406h20v5h-20zM1641 411h25v5h-25zM1631 416h25v5h-25zM1626 421h20v5h-20zM1621 426h15v5h-15zM1626 431h5v5h-5z"/><path fill="#00fc7e" d="M1306 406h15v5h-15z"/><path fill="#06fc78" d="M1336 406h10v5h-10z"/><path fill="#0cfc72" d="M1346 406h5v5h-5z"/><path fill="#12fc72" d="M1351 406h5v5h-5z"/><path fill="#18fc72" d="M1356 406h5v5h-5z"/><path fill="#1efc72" d="M1361 406h5v5h-5z"/><path fill="#24fc6c" d="M1366 406h5v5h-5z"/><path fill="#2afc6c" d="M1371 406h5v5h-5z"/><path fill="#30fc6c" d="M1376 406h5v5h-5z"/><path fill="#3cfc6c" d="M1381 406h5v5h-5z"/><path fill="#42fc66" d="M1386 406h5v5h-5z"/><path fill="#4efc66" d="M1391 406h5v5h-5z"/><path fill="#5afc66" d="M1396 406h5v5h-5z"/><path fill="#60fc66" d="M1401 406h5v5h-5z"/><path fill="#6cfc60" d="M1406 406h5v5h-5z"/><path fill="#78fc60" d="M1411 406h5v5h-5z"/><path fill="#84fc60" d="M1416 406h5v5h-5z"/><path fill="#96fc60" d="M1421 406h5v5h-5z"/><path fill="#a2fc5a" d="M1426 406h5v5h-5z"/><path fill="#b4fc5a" d="M1431 406h5v5h-5z"/><path fill="#c0fc5a" d="M1436 406h5v5h-5z"/><path fill="#d2fc54" d="M1441 406h5v5h-5z"/><path fill="#e4fc54" d="M1446 406h5v5h-5z"/><path fill="#f6fc54" d="M1451 406h5v5h-5z"/><path fill="#fcf64e" d="M1456 406h5v5h-5z"/><path fill="#fce448" d="M1461 406h5v5h-5z"/><path fill="#fcd242" d="M1466 406h5v5h-5z"/><path fill="#fcc63c" d="M1471 406h5v5h-5z"/><path fill="#fcba36" d="M1476 406h5v5h-5z"/><path fill="#fcae30" d="M1481 406h5v5h-5z"/><path fill="#fca22a" d="M1486 406h5v5h-5z"/><path fill="#fc962a" d="M1491 406h5v5h-5z"/><path fill="#fc9024" d="M1496 406h5v5h-5z"/><path fill="#fc7e1e" d="M1506 406h5v5h-5z"/><path fill="#fc7218" d="M1516 406h5v5h-5z"/><path fill="#fc6c18" d="M1521 406h5v5h-5zM1516 411h5v5h-5z"/><path fill="#fc6012" d="M1531 406h5v5h-5z"/><path fill="#fc5a12" d="M1536 406h5v5h-5zM1531 411h5v5h-5z"/><path fill="#fc480c" d="M1556 406h5v5h-5zM1546 411h10v5h-10z"/><path fill="#fc3006" d="M1591 406h5v5h-5zM1581 411h15v5h-15zM1576 416h10v5h-10zM1576 421h5v5h-5z"/><path fill="#fc1200" d="M1671 406h5v5h-5zM1666 411h20v5h-20zM1656 416h25v5h-25zM1646 421h25v5h-25zM1636 426h30v5h-30zM1631 431h25v5h-25zM1636 436h10v5h-10z"/><path fill="#00fc8a" d="M1306 411h5v5h-5zM1326 416h10v5h-10z"/><path fill="#00fc84" d="M1311 411h25v5h-25z"/><path fill="#06fc7e" d="M1336 411h10v5h-10z"/><path fill="#0cfc7e" d="M1346 411h5v5h-5z"/><path fill="#12fc7e" d="M1351 411h5v5h-5z"/><path fill="#18fc78" d="M1356 411h5v5h-5z"/><path fill="#1efc78" d="M1361 411h5v5h-5z"/><path fill="#24fc78" d="M1366 411h5v5h-5z"/><path fill="#2afc78" d="M1371 411h5v5h-5z"/><path fill="#36fc72" d="M1376 411h5v5h-5z"/><path fill="#3cfc72" d="M1381 411h5v5h-5z"/><path fill="#48fc72" d="M1386 411h5v5h-5z"/><path fill="#54fc72" d="M1391 411h5v5h-5z"/><path fill="#60fc6c" d="M1396 411h5v5h-5z"/><path fill="#66fc6c" d="M1401 411h5v5h-5z"/><path fill="#72fc6c" d="M1406 411h5v5h-5z"/><path fill="#84fc6c" d="M1411 411h5v5h-5z"/><path fill="#90fc66" d="M1416 411h5v5h-5z"/><path fill="#9cfc66" d="M1421 411h5v5h-5z"/><path fill="#aefc66" d="M1426 411h5v5h-5z"/><path fill="#c0fc66" d="M1431 411h5v5h-5z"/><path fill="#ccfc60" d="M1436 411h5v5h-5z"/><path fill="#defc60" d="M1441 411h5v5h-5z"/><path fill="#f0fc60" d="M1446 411h5v5h-5z"/><path fill="#fcf65a" d="M1451 411h5v5h-5z"/><path fill="#fce454" d="M1456 411h5v5h-5z"/><path fill="#fcd848" d="M1461 411h5v5h-5z"/><path fill="#fcc642" d="M1466 411h5v5h-5z"/><path fill="#fcba3c" d="M1471 411h5v5h-5z"/><path fill="#fcae36" d="M1476 411h5v5h-5z"/><path fill="#fca230" d="M1481 411h5v5h-5z"/><path fill="#fc9630" d="M1486 411h5v5h-5z"/><path fill="#fc902a" d="M1491 411h5v5h-5z"/><path fill="#fc8424" d="M1496 411h5v5h-5z"/><path fill="#fc7e24" d="M1501 411h5v5h-5z"/><path fill="#fc781e" d="M1506 411h5v5h-5z"/><path fill="#fc721e" d="M1511 411h5v5h-5z"/><path fill="#fc6618" d="M1521 411h5v5h-5z"/><path fill="#fc6018" d="M1526 411h5v5h-5z"/><path fill="#fc5412" d="M1536 411h5v5h-5z"/><path fill="#fc4e12" d="M1541 411h5v5h-5zM1536 416h5v5h-5z"/><path fill="#fc420c" d="M1556 411h10v5h-10zM1551 416h5v5h-5z"/><path fill="#fc2a06" d="M1596 411h5v5h-5zM1586 416h15v5h-15zM1581 421h10v5h-10z"/><path fill="#00fc90" d="M1306 416h20v5h-20z"/><path fill="#06fc8a" d="M1336 416h5v5h-5z"/><path fill="#0cfc8a" d="M1341 416h5v5h-5z"/><path fill="#0cfc84" d="M1346 416h5v5h-5z"/><path fill="#12fc84" d="M1351 416h5v5h-5z"/><path fill="#18fc84" d="M1356 416h5v5h-5z"/><path fill="#1efc84" d="M1361 416h5v5h-5z"/><path fill="#2afc84" d="M1366 416h5v5h-5z"/><path fill="#30fc7e" d="M1371 416h5v5h-5z"/><path fill="#3cfc7e" d="M1376 416h5v5h-5z"/><path fill="#42fc7e" d="M1381 416h5v5h-5z"/><path fill="#4efc7e" d="M1386 416h5v5h-5z"/><path fill="#5afc78" d="M1391 416h5v5h-5z"/><path fill="#66fc78" d="M1396 416h5v5h-5z"/><path fill="#72fc78" d="M1401 416h5v5h-5z"/><path fill="#7efc78" d="M1406 416h5v5h-5z"/><path fill="#8afc72" d="M1411 416h5v5h-5z"/><path fill="#9cfc72" d="M1416 416h5v5h-5z"/><path fill="#a8fc72" d="M1421 416h5v5h-5z"/><path fill="#bafc6c" d="M1426 416h5v5h-5z"/><path fill="#ccfc6c" d="M1431 416h5v5h-5z"/><path fill="#defc6c" d="M1436 416h5v5h-5z"/><path fill="#f0fc6c" d="M1441 416h5v5h-5z"/><path fill="#fcfc66" d="M1446 416h5v5h-5z"/><path fill="#fcea60" d="M1451 416h5v5h-5z"/><path fill="#fcd854" d="M1456 416h5v5h-5z"/><path fill="#fccc4e" d="M1461 416h5v5h-5z"/><path fill="#fcba48" d="M1466 416h5v5h-5z"/><path fill="#fcae42" d="M1471 416h5v5h-5z"/><path fill="#fca23c" d="M1476 416h5v5h-5z"/><path fill="#fc9636" d="M1481 416h5v5h-5z"/><path fill="#fc9030" d="M1486 416h5v5h-5z"/><path fill="#fc842a" d="M1491 416h5v5h-5z"/><path fill="#fc7e2a" d="M1496 416h5v5h-5z"/><path fill="#fc7824" d="M1501 416h5v5h-5z"/><path fill="#fc7224" d="M1506 416h5v5h-5z"/><path fill="#fc661e" d="M1511 416h5v5h-5z"/><path fill="#fc601e" d="M1516 416h5v5h-5z"/><path fill="#fc5a18" d="M1521 416h10v5h-10z"/><path fill="#fc5418" d="M1531 416h5v5h-5zM1526 421h5v5h-5z"/><path fill="#fc4812" d="M1541 416h10v5h-10zM1536 421h5v5h-5z"/><path fill="#fc3c0c" d="M1556 416h10v5h-10zM1556 421h5v5h-5z"/><path fill="#fc360c" d="M1566 416h5v5h-5zM1561 421h10v5h-10z"/><path fill="#fc2406" d="M1601 416h10v5h-10zM1591 421h15v5h-15zM1586 426h15v5h-15z"/><path fill="#fc0c00" d="M1681 416h10v5h-10zM1671 421h30v5h-30zM1666 426h35v5h-35zM1656 431h35v5h-35zM1646 436h35v5h-35zM1641 441h30v5h-30zM1646 446h10v5h-10z"/><path fill="#00fc9c" d="M1306 421h10v5h-10z"/><path fill="#00fc96" d="M1316 421h20v5h-20z"/><path fill="#06fc96" d="M1336 421h5v5h-5z"/><path fill="#0cfc90" d="M1341 421h5v5h-5z"/><path fill="#12fc90" d="M1346 421h5v5h-5z"/><path fill="#18fc90" d="M1351 421h5v5h-5z"/><path fill="#1efc90" d="M1356 421h5v5h-5z"/><path fill="#24fc90" d="M1361 421h5v5h-5z"/><path fill="#2afc8a" d="M1366 421h5v5h-5z"/><path fill="#36fc8a" d="M1371 421h5v5h-5z"/><path fill="#3cfc8a" d="M1376 421h5v5h-5z"/><path fill="#48fc8a" d="M1381 421h5v5h-5z"/><path fill="#54fc84" d="M1386 421h5v5h-5z"/><path fill="#60fc84" d="M1391 421h5v5h-5z"/><path fill="#6cfc84" d="M1396 421h5v5h-5z"/><path fill="#78fc84" d="M1401 421h5v5h-5z"/><path fill="#84fc7e" d="M1406 421h5v5h-5z"/><path fill="#96fc7e" d="M1411 421h5v5h-5z"/><path fill="#a2fc7e" d="M1416 421h5v5h-5z"/><path fill="#b4fc7e" d="M1421 421h5v5h-5z"/><path fill="#c6fc78" d="M1426 421h5v5h-5z"/><path fill="#d8fc78" d="M1431 421h5v5h-5z"/><path fill="#eafc78" d="M1436 421h5v5h-5z"/><path fill="#fcfc72" d="M1441 421h5v5h-5z"/><path fill="#fcea6c" d="M1446 421h5v5h-5z"/><path fill="#fcde60" d="M1451 421h5v5h-5z"/><path fill="#fccc5a" d="M1456 421h5v5h-5z"/><path fill="#fcc04e" d="M1461 421h5v5h-5z"/><path fill="#fcae48" d="M1466 421h5v5h-5z"/><path fill="#fca242" d="M1471 421h5v5h-5z"/><path fill="#fc9c3c" d="M1476 421h5v5h-5z"/><path fill="#fc9036" d="M1481 421h5v5h-5z"/><path fill="#fc8436" d="M1486 421h5v5h-5z"/><path fill="#fc7e30" d="M1491 421h5v5h-5z"/><path fill="#fc782a" d="M1496 421h5v5h-5z"/><path fill="#fc6c2a" d="M1501 421h5v5h-5z"/><path fill="#fc6624" d="M1506 421h5v5h-5z"/><path fill="#fc6024" d="M1511 421h5v5h-5zM1506 426h5v5h-5z"/><path fill="#fc5a1e" d="M1516 421h5v5h-5z"/><path fill="#fc541e" d="M1521 421h5v5h-5zM1516 426h5v5h-5z"/><path fill="#fc4e18" d="M1531 421h5v5h-5z"/><path fill="#fc4212" d="M1541 421h10v5h-10zM1541 426h5v5h-5z"/><path fill="#fc3c12" d="M1551 421h5v5h-5zM1546 426h5v5h-5z"/><path fill="#fc300c" d="M1571 421h5v5h-5zM1561 426h10v5h-10z"/><path fill="#fc1e06" d="M1606 421h10v5h-10zM1601 426h15v5h-15zM1591 431h15v5h-15zM1596 436h5v5h-5z"/><path fill="#00fca8" d="M1301 426h10v5h-10z"/><path fill="#00fca2" d="M1311 426h20v5h-20z"/><path fill="#06fca2" d="M1331 426h5v5h-5z"/><path fill="#06fc9c" d="M1336 426h5v5h-5z"/><path fill="#0cfc9c" d="M1341 426h5v5h-5z"/><path fill="#12fc9c" d="M1346 426h5v5h-5z"/><path fill="#18fc9c" d="M1351 426h5v5h-5z"/><path fill="#1efc9c" d="M1356 426h5v5h-5z"/><path fill="#2afc96" d="M1361 426h5v5h-5z"/><path fill="#30fc96" d="M1366 426h5v5h-5z"/><path fill="#36fc96" d="M1371 426h5v5h-5z"/><path fill="#42fc96" d="M1376 426h5v5h-5z"/><path fill="#4efc96" d="M1381 426h5v5h-5z"/><path fill="#5afc90" d="M1386 426h5v5h-5z"/><path fill="#66fc90" d="M1391 426h5v5h-5z"/><path fill="#72fc90" d="M1396 426h5v5h-5z"/><path fill="#7efc90" d="M1401 426h5v5h-5z"/><path fill="#90fc8a" d="M1406 426h5v5h-5z"/><path fill="#9cfc8a" d="M1411 426h5v5h-5z"/><path fill="#aefc8a" d="M1416 426h5v5h-5z"/><path fill="#c0fc8a" d="M1421 426h5v5h-5z"/><path fill="#d2fc84" d="M1426 426h5v5h-5z"/><path fill="#e4fc84" d="M1431 426h5v5h-5z"/><path fill="#fcfc84" d="M1436 426h5v5h-5z"/><path fill="#fcf078" d="M1441 426h5v5h-5z"/><path fill="#fcde6c" d="M1446 426h5v5h-5z"/><path fill="#fccc66" d="M1451 426h5v5h-5z"/><path fill="#fcc05a" d="M1456 426h5v5h-5z"/><path fill="#fcb454" d="M1461 426h5v5h-5z"/><path fill="#fca24e" d="M1466 426h5v5h-5z"/><path fill="#fc9c48" d="M1471 426h5v5h-5z"/><path fill="#fc9042" d="M1476 426h5v5h-5z"/><path fill="#fc843c" d="M1481 426h5v5h-5z"/><path fill="#fc7e36" d="M1486 426h5v5h-5z"/><path fill="#fc7830" d="M1491 426h5v5h-5z"/><path fill="#fc6c30" d="M1496 426h5v5h-5z"/><path fill="#fc662a" d="M1501 426h5v5h-5z"/><path fill="#fc5a24" d="M1511 426h5v5h-5z"/><path fill="#fc4e1e" d="M1521 426h10v5h-10z"/><path fill="#fc4818" d="M1531 426h5v5h-5z"/><path fill="#fc4218" d="M1536 426h5v5h-5zM1531 431h5v5h-5z"/><path fill="#fc3612" d="M1551 426h10v5h-10zM1546 431h10v5h-10z"/><path fill="#fc2a0c" d="M1571 426h15v5h-15zM1566 431h10v5h-10z"/><path fill="#fc1806" d="M1616 426h5v5h-5zM1606 431h20v5h-20zM1601 436h20v5h-20zM1601 441h10v5h-10z"/><path fill="#fc0600" d="M1701 426h5v5h-5zM1691 431h25v5h-25zM1681 436h40v5h-40zM1671 441h50v5h-50zM1656 446h55v5h-55zM1651 451h50v5h-50zM1661 456h25v5h-25zM1666 461h10v5h-10z"/><path fill="#00fcb4" d="M1301 431h10v5h-10z"/><path fill="#00fcae" d="M1311 431h20v5h-20z"/><path fill="#06fcae" d="M1331 431h5v5h-5z"/><path fill="#06fca8" d="M1336 431h5v5h-5z"/><path fill="#0cfca8" d="M1341 431h5v5h-5z"/><path fill="#12fca8" d="M1346 431h5v5h-5z"/><path fill="#18fca8" d="M1351 431h5v5h-5z"/><path fill="#24fca8" d="M1356 431h5v5h-5z"/><path fill="#2afca8" d="M1361 431h5v5h-5z"/><path fill="#36fca2" d="M1366 431h5v5h-5z"/><path fill="#3cfca2" d="M1371 431h5v5h-5z"/><path fill="#48fca2" d="M1376 431h5v5h-5z"/><path fill="#54fca2" d="M1381 431h5v5h-5z"/><path fill="#60fc9c" d="M1386 431h5v5h-5z"/><path fill="#6cfc9c" d="M1391 431h5v5h-5z"/><path fill="#78fc9c" d="M1396 431h5v5h-5z"/><path fill="#8afc9c" d="M1401 431h5v5h-5z"/><path fill="#96fc9c" d="M1406 431h5v5h-5z"/><path fill="#a8fc96" d="M1411 431h5v5h-5z"/><path fill="#bafc96" d="M1416 431h5v5h-5z"/><path fill="#ccfc96" d="M1421 431h5v5h-5z"/><path fill="#defc90" d="M1426 431h5v5h-5z"/><path fill="#f6fc90" d="M1431 431h5v5h-5z"/><path fill="#fcf68a" d="M1436 431h5v5h-5z"/><path fill="#fcde7e" d="M1441 431h5v5h-5z"/><path fill="#fcd272" d="M1446 431h5v5h-5z"/><path fill="#fcc066" d="M1451 431h5v5h-5z"/><path fill="#fcb460" d="M1456 431h5v5h-5z"/><path fill="#fca85a" d="M1461 431h5v5h-5z"/><path fill="#fc9c4e" d="M1466 431h5v5h-5z"/><path fill="#fc9048" d="M1471 431h5v5h-5z"/><path fill="#fc8442" d="M1476 431h5v5h-5z"/><path fill="#fc7e3c" d="M1481 431h5v5h-5z"/><path fill="#fc723c" d="M1486 431h5v5h-5z"/><path fill="#fc6c36" d="M1491 431h5v5h-5z"/><path fill="#fc6630" d="M1496 431h5v5h-5z"/><path fill="#fc602a" d="M1501 431h5v5h-5z"/><path fill="#fc5a2a" d="M1506 431h5v5h-5z"/><path fill="#fc5424" d="M1511 431h5v5h-5z"/><path fill="#fc4e24" d="M1516 431h5v5h-5z"/><path fill="#fc481e" d="M1521 431h10v5h-10z"/><path fill="#fc3c18" d="M1536 431h10v5h-10zM1536 436h5v5h-5z"/><path fill="#fc3012" d="M1556 431h10v5h-10zM1551 436h5v5h-5z"/><path fill="#fc240c" d="M1576 431h15v5h-15zM1571 436h15v5h-15z"/><path fill="#00fcc0" d="M1301 436h10v5h-10z"/><path fill="#00fcba" d="M1311 436h20v5h-20z"/><path fill="#06fcba" d="M1331 436h5v5h-5z"/><path fill="#0cfcba" d="M1336 436h5v5h-5z"/><path fill="#12fcb4" d="M1341 436h5v5h-5z"/><path fill="#18fcb4" d="M1346 436h5v5h-5z"/><path fill="#1efcb4" d="M1351 436h5v5h-5z"/><path fill="#24fcb4" d="M1356 436h5v5h-5z"/><path fill="#30fcb4" d="M1361 436h5v5h-5z"/><path fill="#36fcb4" d="M1366 436h5v5h-5z"/><path fill="#42fcae" d="M1371 436h5v5h-5z"/><path fill="#4efcae" d="M1376 436h5v5h-5z"/><path fill="#5afcae" d="M1381 436h5v5h-5z"/><path fill="#66fcae" d="M1386 436h5v5h-5z"/><path fill="#72fcae" d="M1391 436h5v5h-5z"/><path fill="#84fca8" d="M1396 436h5v5h-5z"/><path fill="#96fca8" d="M1401 436h5v5h-5z"/><path fill="#a2fca8" d="M1406 436h5v5h-5z"/><path fill="#b4fca8" d="M1411 436h5v5h-5z"/><path fill="#c6fca2" d="M1416 436h5v5h-5z"/><path fill="#defca2" d="M1421 436h5v5h-5z"/><path fill="#f0fca2" d="M1426 436h5v5h-5z"/><path fill="#fcf69c" d="M1431 436h5v5h-5z"/><path fill="#fce490" d="M1436 436h5v5h-5z"/><path fill="#fcd284" d="M1441 436h5v5h-5z"/><path fill="#fcc078" d="M1446 436h5v5h-5z"/><path fill="#fcb46c" d="M1451 436h5v5h-5z"/><path fill="#fca866" d="M1456 436h5v5h-5z"/><path fill="#fc9c5a" d="M1461 436h5v5h-5z"/><path fill="#fc9054" d="M1466 436h5v5h-5z"/><path fill="#fc844e" d="M1471 436h5v5h-5z"/><path fill="#fc7e48" d="M1476 436h5v5h-5z"/><path fill="#fc7242" d="M1481 436h5v5h-5z"/><path fill="#fc6c3c" d="M1486 436h5v5h-5z"/><path fill="#fc6636" d="M1491 436h5v5h-5z"/><path fill="#fc6030" d="M1496 436h5v5h-5z"/><path fill="#fc5a30" d="M1501 436h5v5h-5z"/><path fill="#fc542a" d="M1506 436h5v5h-5z"/><path fill="#fc4e2a" d="M1511 436h5v5h-5z"/><path fill="#fc4824" d="M1516 436h10v5h-10z"/><path fill="#fc421e" d="M1526 436h5v5h-5z"/><path fill="#fc3c1e" d="M1531 436h5v5h-5z"/><path fill="#fc3618" d="M1541 436h5v5h-5z"/><path fill="#fc3018" d="M1546 436h5v5h-5zM1541 441h10v5h-10z"/><path fill="#fc2a12" d="M1556 436h15v5h-15zM1556 441h5v5h-5z"/><path fill="#fc1e0c" d="M1586 436h10v5h-10zM1576 441h15v5h-15z"/><path fill="#fc1206" d="M1621 436h15v5h-15zM1611 441h25v5h-25zM1606 446h20v5h-20zM1611 451h5v5h-5z"/><path fill="#00fccc" d="M1301 441h20v5h-20z"/><path fill="#00fcc6" d="M1321 441h10v5h-10z"/><path fill="#06fcc6" d="M1331 441h5v5h-5z"/><path fill="#0cfcc6" d="M1336 441h5v5h-5z"/><path fill="#12fcc6" d="M1341 441h5v5h-5z"/><path fill="#18fcc6" d="M1346 441h5v5h-5z"/><path fill="#1efcc6" d="M1351 441h5v5h-5z"/><path fill="#2afcc0" d="M1356 441h5v5h-5z"/><path fill="#30fcc0" d="M1361 441h5v5h-5z"/><path fill="#3cfcc0" d="M1366 441h5v5h-5z"/><path fill="#48fcc0" d="M1371 441h5v5h-5z"/><path fill="#54fcc0" d="M1376 441h5v5h-5z"/><path fill="#60fcba" d="M1381 441h5v5h-5z"/><path fill="#72fcba" d="M1386 441h5v5h-5z"/><path fill="#7efcba" d="M1391 441h5v5h-5z"/><path fill="#90fcba" d="M1396 441h5v5h-5z"/><path fill="#9cfcba" d="M1401 441h5v5h-5z"/><path fill="#aefcba" d="M1406 441h5v5h-5z"/><path fill="#c0fcb4" d="M1411 441h5v5h-5z"/><path fill="#d8fcb4" d="M1416 441h5v5h-5z"/><path fill="#eafcb4" d="M1421 441h5v5h-5z"/><path fill="#fcfcae" d="M1426 441h5v5h-5z"/><path fill="#fceaa2" d="M1431 441h5v5h-5z"/><path fill="#fcd290" d="M1436 441h5v5h-5z"/><path fill="#fcc684" d="M1441 441h5v5h-5z"/><path fill="#fcb478" d="M1446 441h5v5h-5z"/><path fill="#fca872" d="M1451 441h5v5h-5z"/><path fill="#fc9c66" d="M1456 441h5v5h-5z"/><path fill="#fc9060" d="M1461 441h5v5h-5z"/><path fill="#fc8454" d="M1466 441h5v5h-5z"/><path fill="#fc7e4e" d="M1471 441h5v5h-5z"/><path fill="#fc7248" d="M1476 441h5v5h-5z"/><path fill="#fc6c42" d="M1481 441h5v5h-5z"/><path fill="#fc663c" d="M1486 441h5v5h-5z"/><path fill="#fc603c" d="M1491 441h5v5h-5z"/><path fill="#fc5a36" d="M1496 441h5v5h-5z"/><path fill="#fc5430" d="M1501 441h5v5h-5z"/><path fill="#fc4e30" d="M1506 441h5v5h-5z"/><path fill="#fc482a" d="M1511 441h5v5h-5z"/><path fill="#fc4224" d="M1516 441h10v5h-10z"/><path fill="#fc3c24" d="M1526 441h5v5h-5zM1521 446h5v5h-5z"/><path fill="#fc361e" d="M1531 441h10v5h-10zM1531 446h5v5h-5z"/><path fill="#fc2a18" d="M1551 441h5v5h-5zM1546 446h10v5h-10z"/><path fill="#fc2412" d="M1561 441h15v5h-15zM1561 446h5v5h-5z"/><path fill="#fc180c" d="M1591 441h10v5h-10zM1581 446h20v5h-20zM1586 451h5v5h-5z"/><path fill="#fc0c06" d="M1636 441h5v5h-5zM1626 446h20v5h-20zM1616 451h30v5h-30zM1616 456h20v5h-20zM1621 461h5v5h-5z"/><path fill="#fc0000" d="M1721 441h10v5h-10zM1711 446h25v5h-25zM1701 451h35v5h-35zM1686 456h50v5h-50zM1676 461h60v5h-60zM1671 466h65v5h-65zM1676 471h60v5h-60zM1686 476h50v5h-50zM1691 481h30v5h-30zM1696 486h15v5h-15z"/><path fill="#00fcde" d="M1296 446h5v5h-5z"/><path fill="#00fcd8" d="M1301 446h25v5h-25z"/><path fill="#06fcd8" d="M1326 446h10v5h-10z"/><path fill="#0cfcd8" d="M1336 446h5v5h-5z"/><path fill="#12fcd2" d="M1341 446h5v5h-5z"/><path fill="#1efcd2" d="M1346 446h5v5h-5z"/><path fill="#24fcd2" d="M1351 446h5v5h-5z"/><path fill="#30fcd2" d="M1356 446h5v5h-5z"/><path fill="#36fcd2" d="M1361 446h5v5h-5z"/><path fill="#42fcd2" d="M1366 446h5v5h-5z"/><path fill="#4efcd2" d="M1371 446h5v5h-5z"/><path fill="#5afccc" d="M1376 446h5v5h-5z"/><path fill="#6cfccc" d="M1381 446h5v5h-5z"/><path fill="#78fccc" d="M1386 446h5v5h-5z"/><path fill="#8afccc" d="M1391 446h5v5h-5z"/><path fill="#96fccc" d="M1396 446h5v5h-5z"/><path fill="#a8fccc" d="M1401 446h5v5h-5z"/><path fill="#bafcc6" d="M1406 446h5v5h-5z"/><path fill="#d2fcc6" d="M1411 446h5v5h-5z"/><path fill="#e4fcc6" d="M1416 446h5v5h-5z"/><path fill="#fcfcc6" d="M1421 446h5v5h-5z"/><path fill="#fceab4" d="M1426 446h5v5h-5z"/><path fill="#fcd8a2" d="M1431 446h5v5h-5z"/><path fill="#fcc696" d="M1436 446h5v5h-5z"/><path fill="#fcb48a" d="M1441 446h5v5h-5z"/><path fill="#fca87e" d="M1446 446h5v5h-5z"/><path fill="#fc9c72" d="M1451 446h5v5h-5z"/><path fill="#fc906c" d="M1456 446h5v5h-5z"/><path fill="#fc8460" d="M1461 446h5v5h-5z"/><path fill="#fc7e5a" d="M1466 446h5v5h-5z"/><path fill="#fc7254" d="M1471 446h5v5h-5z"/><path fill="#fc6c4e" d="M1476 446h5v5h-5z"/><path fill="#fc6648" d="M1481 446h5v5h-5z"/><path fill="#fc6042" d="M1486 446h5v5h-5z"/><path fill="#fc5a3c" d="M1491 446h5v5h-5z"/><path fill="#fc5436" d="M1496 446h5v5h-5z"/><path fill="#fc4e36" d="M1501 446h5v5h-5z"/><path fill="#fc4830" d="M1506 446h5v5h-5z"/><path fill="#fc422a" d="M1511 446h5v5h-5z"/><path fill="#fc3c2a" d="M1516 446h5v5h-5zM1516 451h5v5h-5z"/><path fill="#fc3624" d="M1526 446h5v5h-5z"/><path fill="#fc301e" d="M1536 446h10v5h-10z"/><path fill="#fc2418" d="M1556 446h5v5h-5zM1551 451h10v5h-10z"/><path fill="#fc1e12" d="M1566 446h15v5h-15zM1566 451h10v5h-10z"/><path fill="#fc120c" d="M1601 446h5v5h-5zM1591 451h20v5h-20zM1591 456h15v5h-15zM1591 461h5v5h-5z"/><path fill="#00fcea" d="M1296 451h30v5h-30z"/><path fill="#06fcea" d="M1326 451h5v5h-5z"/><path fill="#0cfce4" d="M1331 451h5v5h-5z"/><path fill="#12fce4" d="M1336 451h5v5h-5z"/><path fill="#18fce4" d="M1341 451h5v5h-5z"/><path fill="#1efce4" d="M1346 451h5v5h-5z"/><path fill="#2afce4" d="M1351 451h5v5h-5z"/><path fill="#30fce4" d="M1356 451h5v5h-5z"/><path fill="#3cfce4" d="M1361 451h5v5h-5z"/><path fill="#48fce4" d="M1366 451h5v5h-5z"/><path fill="#54fce4" d="M1371 451h5v5h-5z"/><path fill="#66fcde" d="M1376 451h5v5h-5z"/><path fill="#72fcde" d="M1381 451h5v5h-5z"/><path fill="#84fcde" d="M1386 451h5v5h-5z"/><path fill="#90fcde" d="M1391 451h5v5h-5z"/><path fill="#a2fcde" d="M1396 451h5v5h-5z"/><path fill="#bafcde" d="M1401 451h5v5h-5z"/><path fill="#ccfcde" d="M1406 451h5v5h-5z"/><path fill="#e4fcd8" d="M1411 451h5v5h-5z"/><path fill="#f6fcd8" d="M1416 451h5v5h-5z"/><path fill="#fcf0cc" d="M1421 451h5v5h-5z"/><path fill="#fcd8ba" d="M1426 451h5v5h-5z"/><path fill="#fcc6a8" d="M1431 451h5v5h-5z"/><path fill="#fcba9c" d="M1436 451h5v5h-5z"/><path fill="#fca890" d="M1441 451h5v5h-5z"/><path fill="#fc9c84" d="M1446 451h5v5h-5z"/><path fill="#fc9078" d="M1451 451h5v5h-5z"/><path fill="#fc846c" d="M1456 451h5v5h-5z"/><path fill="#fc7e66" d="M1461 451h5v5h-5z"/><path fill="#fc7260" d="M1466 451h5v5h-5z"/><path fill="#fc6c54" d="M1471 451h5v5h-5z"/><path fill="#fc664e" d="M1476 451h5v5h-5z"/><path fill="#fc5a48" d="M1481 451h5v5h-5z"/><path fill="#fc5442" d="M1486 451h5v5h-5z"/><path fill="#fc4e42" d="M1491 451h5v5h-5z"/><path fill="#fc4e3c" d="M1496 451h5v5h-5z"/><path fill="#fc4836" d="M1501 451h5v5h-5z"/><path fill="#fc4230" d="M1506 451h5v5h-5z"/><path fill="#fc3c30" d="M1511 451h5v5h-5z"/><path fill="#fc362a" d="M1521 451h5v5h-5z"/><path fill="#fc3024" d="M1526 451h10v5h-10zM1526 456h5v5h-5z"/><path fill="#fc2a1e" d="M1536 451h10v5h-10z"/><path fill="#fc241e" d="M1546 451h5v5h-5zM1541 456h10v5h-10zM1541 461h5v5h-5z"/><path fill="#fc1e18" d="M1561 451h5v5h-5zM1551 456h15v5h-15z"/><path fill="#fc1812" d="M1576 451h10v5h-10zM1571 456h15v5h-15zM1571 461h5v5h-5z"/><path fill="#fc0606" d="M1646 451h5v5h-5zM1636 456h25v5h-25zM1626 461h40v5h-40zM1626 466h40v5h-40zM1631 471h20v5h-20zM1636 476h5v5h-5z"/><path fill="#00fcfc" d="M1296 456h30v5h-30z"/><path fill="#06fcfc" d="M1326 456h5v5h-5z"/><path fill="#0cfcf6" d="M1331 456h5v5h-5z"/><path fill="#12fcf6" d="M1336 456h5v5h-5z"/><path fill="#18fcf6" d="M1341 456h5v5h-5z"/><path fill="#24fcf6" d="M1346 456h5v5h-5z"/><path fill="#2afcf6" d="M1351 456h5v5h-5z"/><path fill="#36fcf6" d="M1356 456h5v5h-5z"/><path fill="#42fcf6" d="M1361 456h5v5h-5z"/><path fill="#4efcf6" d="M1366 456h5v5h-5z"/><path fill="#5afcf6" d="M1371 456h5v5h-5z"/><path fill="#6cfcf6" d="M1376 456h5v5h-5z"/><path fill="#7efcf6" d="M1381 456h5v5h-5z"/><path fill="#8afcf6" d="M1386 456h5v5h-5z"/><path fill="#9cfcf0" d="M1391 456h5v5h-5z"/><path fill="#b4fcf0" d="M1396 456h5v5h-5z"/><path fill="#c6fcf0" d="M1401 456h5v5h-5z"/><path fill="#defcf0" d="M1406 456h5v5h-5z"/><path fill="#f0fcf0" d="M1411 456h5v5h-5z"/><path fill="#fcf6e4" d="M1416 456h5v5h-5z"/><path fill="#fcded2" d="M1421 456h5v5h-5z"/><path fill="#fcccba" d="M1426 456h5v5h-5z"/><path fill="#fcbaae" d="M1431 456h5v5h-5z"/><path fill="#fca89c" d="M1436 456h5v5h-5z"/><path fill="#fc9c90" d="M1441 456h5v5h-5z"/><path fill="#fc9084" d="M1446 456h5v5h-5z"/><path fill="#fc8478" d="M1451 456h5v5h-5z"/><path fill="#fc7e72" d="M1456 456h5v5h-5z"/><path fill="#fc7266" d="M1461 456h5v5h-5z"/><path fill="#fc6c60" d="M1466 456h5v5h-5z"/><path fill="#fc605a" d="M1471 456h5v5h-5z"/><path fill="#fc5a54" d="M1476 456h5v5h-5z"/><path fill="#fc544e" d="M1481 456h5v5h-5z"/><path fill="#fc4e48" d="M1486 456h5v5h-5z"/><path fill="#fc4842" d="M1491 456h5v5h-5z"/><path fill="#fc423c" d="M1496 456h5v5h-5z"/><path fill="#fc4236" d="M1501 456h5v5h-5z"/><path fill="#fc3c36" d="M1506 456h5v5h-5z"/><path fill="#fc3630" d="M1511 456h10v5h-10z"/><path fill="#fc302a" d="M1521 456h5v5h-5z"/><path fill="#fc2a24" d="M1531 456h10v5h-10z"/><path fill="#fc1818" d="M1566 456h5v5h-5zM1556 461h15v5h-15zM1561 466h5v5h-5z"/><path fill="#fc1212" d="M1586 456h5v5h-5zM1576 461h15v5h-15zM1576 466h10v5h-10z"/><path fill="#fc0c0c" d="M1606 456h10v5h-10zM1596 461h25v5h-25zM1596 466h20v5h-20zM1601 471h5v5h-5z"/><path fill="#00f0fc" d="M1296 461h30v5h-30z"/><path fill="#06f0fc" d="M1326 461h5v5h-5z"/><path fill="#0cf0fc" d="M1331 461h5v5h-5z"/><path fill="#12f0fc" d="M1336 461h5v5h-5z"/><path fill="#1ef0fc" d="M1341 461h5v5h-5z"/><path fill="#24f0fc" d="M1346 461h5v5h-5z"/><path fill="#30f0fc" d="M1351 461h5v5h-5z"/><path fill="#3cf6fc" d="M1356 461h5v5h-5z"/><path fill="#48f6fc" d="M1361 461h5v5h-5z"/><path fill="#54f6fc" d="M1366 461h5v5h-5z"/><path fill="#60f6fc" d="M1371 461h5v5h-5z"/><path fill="#72f6fc" d="M1376 461h5v5h-5z"/><path fill="#7ef6fc" d="M1381 461h5v5h-5z"/><path fill="#90f6fc" d="M1386 461h5v5h-5z"/><path fill="#a2f6fc" d="M1391 461h5v5h-5z"/><path fill="#baf6fc" d="M1396 461h5v5h-5z"/><path fill="#ccf6fc" d="M1401 461h5v5h-5z"/><path fill="#e4f6fc" d="M1406 461h5v5h-5z"/><path fill="#fcf6fc" d="M1411 461h5v5h-5z"/><path fill="#fcdeea" d="M1416 461h5v5h-5z"/><path fill="#fcccd2" d="M1421 461h5v5h-5z"/><path fill="#fcbac0" d="M1426 461h5v5h-5z"/><path fill="#fcaeae" d="M1431 461h5v5h-5z"/><path fill="#fc9ca2" d="M1436 461h5v5h-5z"/><path fill="#fc9096" d="M1441 461h5v5h-5z"/><path fill="#fc848a" d="M1446 461h5v5h-5z"/><path fill="#fc787e" d="M1451 461h5v5h-5z"/><path fill="#fc7272" d="M1456 461h5v5h-5z"/><path fill="#fc6c6c" d="M1461 461h5v5h-5z"/><path fill="#fc6066" d="M1466 461h5v5h-5z"/><path fill="#fc5a5a" d="M1471 461h5v5h-5z"/><path fill="#fc5454" d="M1476 461h5v5h-5z"/><path fill="#fc4e4e" d="M1481 461h5v5h-5z"/><path fill="#fc4848" d="M1486 461h5v5h-5z"/><path fill="#fc4242" d="M1491 461h5v5h-5z"/><path fill="#fc3c42" d="M1496 461h5v5h-5zM1496 466h5v5h-5z"/><path fill="#fc3c3c" d="M1501 461h5v5h-5z"/><path fill="#fc3636" d="M1506 461h5v5h-5z"/><path fill="#fc3030" d="M1511 461h10v5h-10z"/><path fill="#fc2a2a" d="M1521 461h10v5h-10z"/><path fill="#fc2424" d="M1531 461h10v5h-10z"/><path fill="#fc1e1e" d="M1546 461h10v5h-10zM1546 466h5v5h-5z"/><path fill="#00defc" d="M1291 466h30v5h-30z"/><path fill="#06defc" d="M1321 466h10v5h-10z"/><path fill="#0cdefc" d="M1331 466h5v5h-5z"/><path fill="#18defc" d="M1336 466h5v5h-5z"/><path fill="#1edefc" d="M1341 466h5v5h-5z"/><path fill="#24defc" d="M1346 466h5v5h-5z"/><path fill="#30defc" d="M1351 466h5v5h-5z"/><path fill="#3cdefc" d="M1356 466h5v5h-5z"/><path fill="#48defc" d="M1361 466h5v5h-5z"/><path fill="#54defc" d="M1366 466h5v5h-5z"/><path fill="#60defc" d="M1371 466h5v5h-5z"/><path fill="#72defc" d="M1376 466h5v5h-5z"/><path fill="#7edefc" d="M1381 466h5v5h-5z"/><path fill="#90defc" d="M1386 466h5v5h-5z"/><path fill="#a2defc" d="M1391 466h5v5h-5z"/><path fill="#b4defc" d="M1396 466h5v5h-5z"/><path fill="#ccdefc" d="M1401 466h5v5h-5z"/><path fill="#e4defc" d="M1406 466h5v5h-5z"/><path fill="#fcdefc" d="M1411 466h5v5h-5z"/><path fill="#fcd2f0" d="M1416 466h5v5h-5z"/><path fill="#fcbad8" d="M1421 466h5v5h-5z"/><path fill="#fcaec6" d="M1426 466h5v5h-5z"/><path fill="#fc9cb4" d="M1431 466h5v5h-5z"/><path fill="#fc90a8" d="M1436 466h5v5h-5z"/><path fill="#fc8496" d="M1441 466h5v5h-5z"/><path fill="#fc788a" d="M1446 466h5v5h-5z"/><path fill="#fc7284" d="M1451 466h5v5h-5z"/><path fill="#fc6678" d="M1456 466h5v5h-5z"/><path fill="#fc606c" d="M1461 466h5v5h-5z"/><path fill="#fc5a66" d="M1466 466h5v5h-5z"/><path fill="#fc5460" d="M1471 466h5v5h-5z"/><path fill="#fc4e5a" d="M1476 466h5v5h-5z"/><path fill="#fc4854" d="M1481 466h5v5h-5z"/><path fill="#fc424e" d="M1486 466h5v5h-5z"/><path fill="#fc3c48" d="M1491 466h5v5h-5z"/><path fill="#fc363c" d="M1501 466h5v5h-5z"/><path fill="#fc303c" d="M1506 466h5v5h-5z"/><path fill="#fc3036" d="M1511 466h5v5h-5z"/><path fill="#fc2a30" d="M1516 466h10v5h-10z"/><path fill="#fc242a" d="M1526 466h10v5h-10zM1526 471h5v5h-5z"/><path fill="#fc1e24" d="M1536 466h10v5h-10z"/><path fill="#fc181e" d="M1551 466h10v5h-10zM1551 471h5v5h-5z"/><path fill="#fc1218" d="M1566 466h10v5h-10zM1566 471h15v5h-15zM1566 476h5v5h-5z"/><path fill="#fc0c12" d="M1586 466h10v5h-10zM1581 471h20v5h-20zM1586 476h10v5h-10z"/><path fill="#fc060c" d="M1616 466h10v5h-10zM1606 471h25v5h-25zM1606 476h30v5h-30zM1611 481h15v5h-15z"/><path fill="#fc0006" d="M1666 466h5v5h-5zM1651 471h25v5h-25zM1641 476h45v5h-45zM1641 481h50v5h-50zM1646 486h50v5h-50zM1651 491h45v5h-45zM1656 496h25v5h-25zM1666 501h5v5h-5z"/><path fill="#00d2fc" d="M1291 471h30v5h-30z"/><path fill="#06d2fc" d="M1321 471h5v5h-5z"/><path fill="#0cd2fc" d="M1326 471h5v5h-5z"/><path fill="#12d2fc" d="M1331 471h5v5h-5z"/><path fill="#18ccfc" d="M1336 471h5v5h-5z"/><path fill="#1eccfc" d="M1341 471h5v5h-5z"/><path fill="#24ccfc" d="M1346 471h5v5h-5z"/><path fill="#30ccfc" d="M1351 471h5v5h-5z"/><path fill="#3cccfc" d="M1356 471h5v5h-5z"/><path fill="#48ccfc" d="M1361 471h5v5h-5z"/><path fill="#54ccfc" d="M1366 471h5v5h-5z"/><path fill="#60ccfc" d="M1371 471h5v5h-5z"/><path fill="#72ccfc" d="M1376 471h5v5h-5z"/><path fill="#7eccfc" d="M1381 471h5v5h-5z"/><path fill="#90ccfc" d="M1386 471h5v5h-5z"/><path fill="#a2ccfc" d="M1391 471h5v5h-5z"/><path fill="#b4ccfc" d="M1396 471h5v5h-5z"/><path fill="#c6ccfc" d="M1401 471h5v5h-5z"/><path fill="#deccfc" d="M1406 471h5v5h-5z"/><path fill="#f6ccfc" d="M1411 471h5v5h-5z"/><path fill="#fcc0f0" d="M1416 471h5v5h-5z"/><path fill="#fcaede" d="M1421 471h5v5h-5z"/><path fill="#fc9ccc" d="M1426 471h5v5h-5z"/><path fill="#fc90ba" d="M1431 471h5v5h-5z"/><path fill="#fc84a8" d="M1436 471h5v5h-5z"/><path fill="#fc789c" d="M1441 471h5v5h-5z"/><path fill="#fc7290" d="M1446 471h5v5h-5z"/><path fill="#fc6684" d="M1451 471h5v5h-5z"/><path fill="#fc607e" d="M1456 471h5v5h-5z"/><path fill="#fc5a72" d="M1461 471h5v5h-5z"/><path fill="#fc546c" d="M1466 471h5v5h-5z"/><path fill="#fc4e60" d="M1471 471h5v5h-5z"/><path fill="#fc485a" d="M1476 471h5v5h-5z"/><path fill="#fc4254" d="M1481 471h5v5h-5z"/><path fill="#fc3c4e" d="M1486 471h5v5h-5z"/><path fill="#fc3648" d="M1491 471h5v5h-5z"/><path fill="#fc3642" d="M1496 471h5v5h-5z"/><path fill="#fc3042" d="M1501 471h5v5h-5z"/><path fill="#fc2a3c" d="M1506 471h5v5h-5zM1506 476h5v5h-5z"/><path fill="#fc2a36" d="M1511 471h5v5h-5z"/><path fill="#fc2436" d="M1516 471h5v5h-5zM1516 476h5v5h-5z"/><path fill="#fc2430" d="M1521 471h5v5h-5z"/><path fill="#fc1e2a" d="M1531 471h10v5h-10zM1531 476h5v5h-5z"/><path fill="#fc1824" d="M1541 471h10v5h-10zM1541 476h10v5h-10z"/><path fill="#fc121e" d="M1556 471h10v5h-10zM1556 476h10v5h-10zM1556 481h5v5h-5z"/><path fill="#00c0fc" d="M1291 476h30v5h-30z"/><path fill="#06c0fc" d="M1321 476h5v5h-5z"/><path fill="#0cc0fc" d="M1326 476h5v5h-5z"/><path fill="#12c0fc" d="M1331 476h5v5h-5z"/><path fill="#18c0fc" d="M1336 476h5v5h-5z"/><path fill="#1ec0fc" d="M1341 476h5v5h-5z"/><path fill="#2ac0fc" d="M1346 476h5v5h-5z"/><path fill="#30c0fc" d="M1351 476h5v5h-5z"/><path fill="#3cbafc" d="M1356 476h5v5h-5z"/><path fill="#48bafc" d="M1361 476h5v5h-5z"/><path fill="#54bafc" d="M1366 476h5v5h-5z"/><path fill="#60bafc" d="M1371 476h5v5h-5z"/><path fill="#6cbafc" d="M1376 476h5v5h-5z"/><path fill="#7ebafc" d="M1381 476h5v5h-5z"/><path fill="#90bafc" d="M1386 476h5v5h-5z"/><path fill="#a2bafc" d="M1391 476h5v5h-5z"/><path fill="#b4bafc" d="M1396 476h5v5h-5z"/><path fill="#c6bafc" d="M1401 476h5v5h-5z"/><path fill="#d8bafc" d="M1406 476h5v5h-5z"/><path fill="#f0b4fc" d="M1411 476h5v5h-5z"/><path fill="#fcaef6" d="M1416 476h5v5h-5z"/><path fill="#fca2de" d="M1421 476h5v5h-5z"/><path fill="#fc90cc" d="M1426 476h5v5h-5z"/><path fill="#fc84ba" d="M1431 476h5v5h-5z"/><path fill="#fc78ae" d="M1436 476h5v5h-5z"/><path fill="#fc72a2" d="M1441 476h5v5h-5z"/><path fill="#fc6696" d="M1446 476h5v5h-5z"/><path fill="#fc608a" d="M1451 476h5v5h-5z"/><path fill="#fc547e" d="M1456 476h5v5h-5z"/><path fill="#fc4e78" d="M1461 476h5v5h-5z"/><path fill="#fc486c" d="M1466 476h5v5h-5z"/><path fill="#fc4266" d="M1471 476h5v5h-5z"/><path fill="#fc4260" d="M1476 476h5v5h-5z"/><path fill="#fc3c5a" d="M1481 476h5v5h-5z"/><path fill="#fc3654" d="M1486 476h5v5h-5z"/><path fill="#fc304e" d="M1491 476h5v5h-5z"/><path fill="#fc3048" d="M1496 476h5v5h-5z"/><path fill="#fc2a42" d="M1501 476h5v5h-5z"/><path fill="#fc243c" d="M1511 476h5v5h-5z"/><path fill="#fc1e30" d="M1521 476h10v5h-10z"/><path fill="#fc182a" d="M1536 476h5v5h-5zM1536 481h5v5h-5z"/><path fill="#fc1224" d="M1551 476h5v5h-5zM1546 481h10v5h-10z"/><path fill="#fc0c18" d="M1571 476h15v5h-15zM1571 481h15v5h-15z"/><path fill="#fc0612" d="M1596 476h10v5h-10zM1591 481h20v5h-20zM1596 486h20v5h-20zM1601 491h5v5h-5z"/><path fill="#00b4fc" d="M1291 481h30v5h-30z"/><path fill="#06b4fc" d="M1321 481h5v5h-5z"/><path fill="#0caefc" d="M1326 481h5v5h-5z"/><path fill="#12aefc" d="M1331 481h5v5h-5z"/><path fill="#18aefc" d="M1336 481h5v5h-5z"/><path fill="#1eaefc" d="M1341 481h5v5h-5z"/><path fill="#2aaefc" d="M1346 481h5v5h-5z"/><path fill="#30aefc" d="M1351 481h5v5h-5z"/><path fill="#3caefc" d="M1356 481h5v5h-5z"/><path fill="#48aefc" d="M1361 481h5v5h-5z"/><path fill="#54aefc" d="M1366 481h5v5h-5z"/><path fill="#60a8fc" d="M1371 481h5v5h-5z"/><path fill="#6ca8fc" d="M1376 481h5v5h-5z"/><path fill="#7ea8fc" d="M1381 481h5v5h-5z"/><path fill="#90a8fc" d="M1386 481h5v5h-5z"/><path fill="#9ca8fc" d="M1391 481h5v5h-5z"/><path fill="#aea8fc" d="M1396 481h5v5h-5z"/><path fill="#c6a8fc" d="M1401 481h5v5h-5z"/><path fill="#d8a8fc" d="M1406 481h5v5h-5z"/><path fill="#f0a2fc" d="M1411 481h5v5h-5z"/><path fill="#fca2fc" d="M1416 481h5v5h-5z"/><path fill="#fc90e4" d="M1421 481h5v5h-5z"/><path fill="#fc84d2" d="M1426 481h5v5h-5z"/><path fill="#fc78c0" d="M1431 481h5v5h-5z"/><path fill="#fc6cb4" d="M1436 481h5v5h-5z"/><path fill="#fc66a2" d="M1441 481h5v5h-5z"/><path fill="#fc6096" d="M1446 481h5v5h-5z"/><path fill="#fc548a" d="M1451 481h5v5h-5z"/><path fill="#fc4e84" d="M1456 481h5v5h-5z"/><path fill="#fc4878" d="M1461 481h5v5h-5z"/><path fill="#fc4272" d="M1466 481h5v5h-5z"/><path fill="#fc3c66" d="M1471 481h5v5h-5z"/><path fill="#fc3660" d="M1476 481h5v5h-5z"/><path fill="#fc365a" d="M1481 481h5v5h-5z"/><path fill="#fc3054" d="M1486 481h5v5h-5z"/><path fill="#fc2a4e" d="M1491 481h5v5h-5z"/><path fill="#fc2a48" d="M1496 481h5v5h-5z"/><path fill="#fc2442" d="M1501 481h10v5h-10z"/><path fill="#fc1e3c" d="M1511 481h5v5h-5zM1511 486h5v5h-5z"/><path fill="#fc1e36" d="M1516 481h10v5h-10z"/><path fill="#fc1830" d="M1526 481h10v5h-10zM1526 486h5v5h-5z"/><path fill="#fc122a" d="M1541 481h5v5h-5zM1536 486h15v5h-15z"/><path fill="#fc0c1e" d="M1561 481h10v5h-10zM1561 486h15v5h-15z"/><path fill="#fc0618" d="M1586 481h5v5h-5zM1576 486h20v5h-20zM1581 491h20v5h-20zM1586 496h5v5h-5z"/><path fill="#fc000c" d="M1626 481h15v5h-15zM1616 486h30v5h-30zM1621 491h30v5h-30zM1626 496h30v5h-30zM1631 501h35v5h-35zM1636 506h20v5h-20z"/><path fill="#00a8fc" d="M1286 486h30v5h-30z"/><path fill="#06a2fc" d="M1316 486h10v5h-10z"/><path fill="#0ca2fc" d="M1326 486h5v5h-5z"/><path fill="#12a2fc" d="M1331 486h5v5h-5z"/><path fill="#18a2fc" d="M1336 486h5v5h-5z"/><path fill="#24a2fc" d="M1341 486h5v5h-5z"/><path fill="#2aa2fc" d="M1346 486h5v5h-5z"/><path fill="#30a2fc" d="M1351 486h5v5h-5z"/><path fill="#3c9cfc" d="M1356 486h5v5h-5z"/><path fill="#489cfc" d="M1361 486h5v5h-5z"/><path fill="#549cfc" d="M1366 486h5v5h-5z"/><path fill="#609cfc" d="M1371 486h5v5h-5z"/><path fill="#6c9cfc" d="M1376 486h5v5h-5z"/><path fill="#7e9cfc" d="M1381 486h5v5h-5z"/><path fill="#8a96fc" d="M1386 486h5v5h-5z"/><path fill="#9c96fc" d="M1391 486h5v5h-5z"/><path fill="#ae96fc" d="M1396 486h5v5h-5z"/><path fill="#c096fc" d="M1401 486h5v5h-5z"/><path fill="#d896fc" d="M1406 486h5v5h-5z"/><path fill="#ea96fc" d="M1411 486h5v5h-5z"/><path fill="#fc90fc" d="M1416 486h5v5h-5z"/><path fill="#fc84ea" d="M1421 486h5v5h-5z"/><path fill="#fc78d8" d="M1426 486h5v5h-5z"/><path fill="#fc6cc6" d="M1431 486h5v5h-5z"/><path fill="#fc66b4" d="M1436 486h5v5h-5z"/><path fill="#fc5aa8" d="M1441 486h5v5h-5z"/><path fill="#fc549c" d="M1446 486h5v5h-5z"/><path fill="#fc4e90" d="M1451 486h5v5h-5z"/><path fill="#fc4884" d="M1456 486h5v5h-5z"/><path fill="#fc427e" d="M1461 486h5v5h-5z"/><path fill="#fc3c72" d="M1466 486h5v5h-5z"/><path fill="#fc366c" d="M1471 486h5v5h-5z"/><path fill="#fc3066" d="M1476 486h5v5h-5zM1476 491h5v5h-5z"/><path fill="#fc3060" d="M1481 486h5v5h-5z"/><path fill="#fc2a54" d="M1486 486h10v5h-10z"/><path fill="#fc244e" d="M1496 486h5v5h-5z"/><path fill="#fc2448" d="M1501 486h5v5h-5z"/><path fill="#fc1e42" d="M1506 486h5v5h-5zM1506 491h5v5h-5z"/><path fill="#fc183c" d="M1516 486h5v5h-5zM1516 491h5v5h-5z"/><path fill="#fc1836" d="M1521 486h5v5h-5z"/><path fill="#fc1230" d="M1531 486h5v5h-5zM1531 491h10v5h-10z"/><path fill="#fc0c24" d="M1551 486h10v5h-10zM1551 491h15v5h-15z"/><path fill="#009cfc" d="M1286 491h25v5h-25z"/><path fill="#0096fc" d="M1311 491h5v5h-5z"/><path fill="#0696fc" d="M1316 491h10v5h-10z"/><path fill="#0c96fc" d="M1326 491h5v5h-5z"/><path fill="#1296fc" d="M1331 491h5v5h-5z"/><path fill="#1896fc" d="M1336 491h5v5h-5z"/><path fill="#2496fc" d="M1341 491h5v5h-5z"/><path fill="#2a90fc" d="M1346 491h5v5h-5z"/><path fill="#3690fc" d="M1351 491h5v5h-5z"/><path fill="#3c90fc" d="M1356 491h5v5h-5z"/><path fill="#4890fc" d="M1361 491h5v5h-5z"/><path fill="#5490fc" d="M1366 491h5v5h-5z"/><path fill="#6090fc" d="M1371 491h5v5h-5z"/><path fill="#6c8afc" d="M1376 491h5v5h-5z"/><path fill="#7e8afc" d="M1381 491h5v5h-5z"/><path fill="#8a8afc" d="M1386 491h5v5h-5z"/><path fill="#9c8afc" d="M1391 491h5v5h-5z"/><path fill="#ae8afc" d="M1396 491h5v5h-5z"/><path fill="#c084fc" d="M1401 491h5v5h-5z"/><path fill="#d284fc" d="M1406 491h5v5h-5z"/><path fill="#e484fc" d="M1411 491h5v5h-5z"/><path fill="#fc84fc" d="M1416 491h5v5h-5z"/><path fill="#fc78ea" d="M1421 491h5v5h-5z"/><path fill="#fc6cd8" d="M1426 491h5v5h-5z"/><path fill="#fc66c6" d="M1431 491h5v5h-5z"/><path fill="#fc5aba" d="M1436 491h5v5h-5z"/><path fill="#fc54a8" d="M1441 491h5v5h-5z"/><path fill="#fc4e9c" d="M1446 491h5v5h-5z"/><path fill="#fc4890" d="M1451 491h5v5h-5z"/><path fill="#fc428a" d="M1456 491h5v5h-5z"/><path fill="#fc3c7e" d="M1461 491h5v5h-5z"/><path fill="#fc3678" d="M1466 491h5v5h-5z"/><path fill="#fc306c" d="M1471 491h5v5h-5z"/><path fill="#fc2a60" d="M1481 491h5v5h-5z"/><path fill="#fc245a" d="M1486 491h5v5h-5zM1486 496h5v5h-5z"/><path fill="#fc2454" d="M1491 491h5v5h-5z"/><path fill="#fc1e4e" d="M1496 491h5v5h-5zM1496 496h5v5h-5z"/><path fill="#fc1e48" d="M1501 491h5v5h-5z"/><path fill="#fc1842" d="M1511 491h5v5h-5zM1511 496h5v5h-5z"/><path fill="#fc1236" d="M1521 491h10v5h-10zM1526 496h5v5h-5z"/><path fill="#fc0c2a" d="M1541 491h10v5h-10zM1546 496h10v5h-10z"/><path fill="#fc061e" d="M1566 491h15v5h-15zM1571 496h15v5h-15zM1571 501h10v5h-10z"/><path fill="#fc0012" d="M1606 491h15v5h-15zM1601 496h25v5h-25zM1606 501h25v5h-25zM1611 506h25v5h-25zM1616 511h25v5h-25zM1621 516h5v5h-5z"/><path fill="#0090fc" d="M1286 496h25v5h-25z"/><path fill="#008afc" d="M1311 496h5v5h-5z"/><path fill="#068afc" d="M1316 496h5v5h-5z"/><path fill="#0c8afc" d="M1321 496h10v5h-10z"/><path fill="#128afc" d="M1331 496h5v5h-5z"/><path fill="#1e8afc" d="M1336 496h5v5h-5z"/><path fill="#2484fc" d="M1341 496h5v5h-5z"/><path fill="#2a84fc" d="M1346 496h5v5h-5z"/><path fill="#3684fc" d="M1351 496h5v5h-5z"/><path fill="#3c84fc" d="M1356 496h5v5h-5z"/><path fill="#4884fc" d="M1361 496h5v5h-5z"/><path fill="#5484fc" d="M1366 496h5v5h-5z"/><path fill="#607efc" d="M1371 496h5v5h-5z"/><path fill="#6c7efc" d="M1376 496h5v5h-5z"/><path fill="#7e7efc" d="M1381 496h5v5h-5z"/><path fill="#8a7efc" d="M1386 496h5v5h-5z"/><path fill="#9c7efc" d="M1391 496h5v5h-5z"/><path fill="#ae78fc" d="M1396 496h5v5h-5z"/><path fill="#ba78fc" d="M1401 496h5v5h-5z"/><path fill="#d278fc" d="M1406 496h5v5h-5z"/><path fill="#e478fc" d="M1411 496h5v5h-5z"/><path fill="#f672fc" d="M1416 496h5v5h-5z"/><path fill="#fc6cf0" d="M1421 496h5v5h-5z"/><path fill="#fc60de" d="M1426 496h5v5h-5z"/><path fill="#fc5acc" d="M1431 496h5v5h-5z"/><path fill="#fc54ba" d="M1436 496h5v5h-5z"/><path fill="#fc48ae" d="M1441 496h5v5h-5z"/><path fill="#fc42a2" d="M1446 496h5v5h-5z"/><path fill="#fc3c96" d="M1451 496h5v5h-5z"/><path fill="#fc368a" d="M1456 496h5v5h-5z"/><path fill="#fc3684" d="M1461 496h5v5h-5z"/><path fill="#fc3078" d="M1466 496h5v5h-5z"/><path fill="#fc2a72" d="M1471 496h5v5h-5z"/><path fill="#fc2a6c" d="M1476 496h5v5h-5z"/><path fill="#fc2460" d="M1481 496h5v5h-5z"/><path fill="#fc1e54" d="M1491 496h5v5h-5z"/><path fill="#fc184e" d="M1501 496h5v5h-5zM1501 501h5v5h-5z"/><path fill="#fc1848" d="M1506 496h5v5h-5z"/><path fill="#fc123c" d="M1516 496h10v5h-10z"/><path fill="#fc0c36" d="M1531 496h5v5h-5zM1531 501h5v5h-5zM1531 506h5v5h-5z"/><path fill="#fc0c30" d="M1536 496h10v5h-10zM1536 501h10v5h-10z"/><path fill="#fc0624" d="M1556 496h15v5h-15zM1561 501h10v5h-10zM1561 506h10v5h-10z"/><path fill="#fc0018" d="M1591 496h10v5h-10zM1586 501h20v5h-20zM1591 506h20v5h-20zM1596 511h20v5h-20zM1601 516h20v5h-20zM1606 521h10v5h-10z"/><path fill="#0084fc" d="M1286 501h25v5h-25z"/><path fill="#007efc" d="M1311 501h5v5h-5zM1281 506h10v5h-10z"/><path fill="#067efc" d="M1316 501h5v5h-5z"/><path fill="#0c7efc" d="M1321 501h5v5h-5z"/><path fill="#127efc" d="M1326 501h5v5h-5z"/><path fill="#187efc" d="M1331 501h5v5h-5z"/><path fill="#1e7efc" d="M1336 501h5v5h-5z"/><path fill="#2478fc" d="M1341 501h5v5h-5z"/><path fill="#2a78fc" d="M1346 501h5v5h-5z"/><path fill="#3678fc" d="M1351 501h5v5h-5z"/><path fill="#3c78fc" d="M1356 501h5v5h-5z"/><path fill="#4878fc" d="M1361 501h5v5h-5z"/><path fill="#5472fc" d="M1366 501h5v5h-5z"/><path fill="#6072fc" d="M1371 501h5v5h-5z"/><path fill="#6c72fc" d="M1376 501h5v5h-5z"/><path fill="#7e72fc" d="M1381 501h5v5h-5z"/><path fill="#8a72fc" d="M1386 501h5v5h-5z"/><path fill="#9c6cfc" d="M1391 501h5v5h-5z"/><path fill="#a86cfc" d="M1396 501h5v5h-5z"/><path fill="#ba6cfc" d="M1401 501h5v5h-5z"/><path fill="#cc6cfc" d="M1406 501h5v5h-5z"/><path fill="#de66fc" d="M1411 501h5v5h-5z"/><path fill="#f666fc" d="M1416 501h5v5h-5z"/><path fill="#fc60f6" d="M1421 501h5v5h-5z"/><path fill="#fc5ade" d="M1426 501h5v5h-5z"/><path fill="#fc4ed2" d="M1431 501h5v5h-5z"/><path fill="#fc48c0" d="M1436 501h5v5h-5z"/><path fill="#fc42b4" d="M1441 501h5v5h-5z"/><path fill="#fc3ca2" d="M1446 501h5v5h-5z"/><path fill="#fc369c" d="M1451 501h5v5h-5z"/><path fill="#fc3090" d="M1456 501h5v5h-5z"/><path fill="#fc3084" d="M1461 501h5v5h-5z"/><path fill="#fc2a7e" d="M1466 501h5v5h-5z"/><path fill="#fc2472" d="M1471 501h5v5h-5z"/><path fill="#fc246c" d="M1476 501h5v5h-5z"/><path fill="#fc1e66" d="M1481 501h5v5h-5zM1481 506h5v5h-5z"/><path fill="#fc1e60" d="M1486 501h5v5h-5z"/><path fill="#fc185a" d="M1491 501h5v5h-5zM1491 506h5v5h-5z"/><path fill="#fc1854" d="M1496 501h5v5h-5z"/><path fill="#fc1248" d="M1506 501h5v5h-5z"/><path fill="#fc1242" d="M1511 501h10v5h-10z"/><path fill="#fc0c3c" d="M1521 501h10v5h-10zM1521 506h10v5h-10z"/><path fill="#fc062a" d="M1546 501h15v5h-15zM1551 506h10v5h-10z"/><path fill="#fc001e" d="M1581 501h5v5h-5zM1576 506h15v5h-15zM1581 511h15v5h-15zM1581 516h20v5h-20zM1586 521h20v5h-20zM1591 526h10v5h-10z"/><path fill="#0078fc" d="M1291 506h25v5h-25z"/><path fill="#0678fc" d="M1316 506h5v5h-5z"/><path fill="#0c72fc" d="M1321 506h5v5h-5z"/><path fill="#1272fc" d="M1326 506h5v5h-5z"/><path fill="#1872fc" d="M1331 506h5v5h-5z"/><path fill="#1e72fc" d="M1336 506h5v5h-5z"/><path fill="#2472fc" d="M1341 506h5v5h-5z"/><path fill="#2a6cfc" d="M1346 506h5v5h-5z"/><path fill="#366cfc" d="M1351 506h5v5h-5z"/><path fill="#426cfc" d="M1356 506h5v5h-5z"/><path fill="#486cfc" d="M1361 506h5v5h-5z"/><path fill="#546cfc" d="M1366 506h5v5h-5z"/><path fill="#6066fc" d="M1371 506h5v5h-5z"/><path fill="#6c66fc" d="M1376 506h5v5h-5z"/><path fill="#7866fc" d="M1381 506h5v5h-5z"/><path fill="#8a66fc" d="M1386 506h5v5h-5z"/><path fill="#9660fc" d="M1391 506h5v5h-5z"/><path fill="#a860fc" d="M1396 506h5v5h-5z"/><path fill="#ba60fc" d="M1401 506h5v5h-5z"/><path fill="#cc60fc" d="M1406 506h5v5h-5z"/><path fill="#de5afc" d="M1411 506h5v5h-5z"/><path fill="#f05afc" d="M1416 506h5v5h-5z"/><path fill="#fc54f6" d="M1421 506h5v5h-5z"/><path fill="#fc4ee4" d="M1426 506h5v5h-5z"/><path fill="#fc48d2" d="M1431 506h5v5h-5z"/><path fill="#fc42c6" d="M1436 506h5v5h-5z"/><path fill="#fc3cb4" d="M1441 506h5v5h-5z"/><path fill="#fc36a8" d="M1446 506h5v5h-5z"/><path fill="#fc309c" d="M1451 506h5v5h-5z"/><path fill="#fc2a90" d="M1456 506h5v5h-5z"/><path fill="#fc2a8a" d="M1461 506h5v5h-5z"/><path fill="#fc247e" d="M1466 506h5v5h-5z"/><path fill="#fc1e78" d="M1471 506h5v5h-5zM1471 511h5v5h-5z"/><path fill="#fc1e72" d="M1476 506h5v5h-5z"/><path fill="#fc1860" d="M1486 506h5v5h-5z"/><path fill="#fc1254" d="M1496 506h5v5h-5z"/><path fill="#fc124e" d="M1501 506h10v5h-10z"/><path fill="#fc0c48" d="M1511 506h5v5h-5zM1511 511h5v5h-5z"/><path fill="#fc0c42" d="M1516 506h5v5h-5zM1516 511h10v5h-10z"/><path fill="#fc0636" d="M1536 506h5v5h-5zM1536 511h10v5h-10zM1536 516h10v5h-10z"/><path fill="#fc0630" d="M1541 506h10v5h-10zM1546 511h10v5h-10z"/><path fill="#fc0024" d="M1571 506h5v5h-5zM1566 511h15v5h-15zM1571 516h10v5h-10zM1571 521h15v5h-15zM1576 526h15v5h-15zM1581 531h5v5h-5z"/><path fill="#0072fc" d="M1281 511h20v5h-20z"/><path fill="#006cfc" d="M1301 511h10v5h-10zM1281 516h5v5h-5z"/><path fill="#066cfc" d="M1311 511h10v5h-10z"/><path fill="#0c6cfc" d="M1321 511h5v5h-5z"/><path fill="#1266fc" d="M1326 511h5v5h-5z"/><path fill="#1866fc" d="M1331 511h5v5h-5z"/><path fill="#1e66fc" d="M1336 511h5v5h-5z"/><path fill="#2466fc" d="M1341 511h5v5h-5z"/><path fill="#3066fc" d="M1346 511h5v5h-5z"/><path fill="#3660fc" d="M1351 511h5v5h-5z"/><path fill="#4260fc" d="M1356 511h5v5h-5z"/><path fill="#4860fc" d="M1361 511h5v5h-5z"/><path fill="#5460fc" d="M1366 511h5v5h-5z"/><path fill="#6060fc" d="M1371 511h5v5h-5z"/><path fill="#6c5afc" d="M1376 511h5v5h-5z"/><path fill="#785afc" d="M1381 511h5v5h-5z"/><path fill="#8a5afc" d="M1386 511h5v5h-5z"/><path fill="#965afc" d="M1391 511h5v5h-5z"/><path fill="#a854fc" d="M1396 511h5v5h-5z"/><path fill="#ba54fc" d="M1401 511h5v5h-5z"/><path fill="#c654fc" d="M1406 511h5v5h-5z"/><path fill="#de54fc" d="M1411 511h5v5h-5z"/><path fill="#f04efc" d="M1416 511h5v5h-5z"/><path fill="#fc4efc" d="M1421 511h5v5h-5z"/><path fill="#fc48ea" d="M1426 511h5v5h-5z"/><path fill="#fc3cd8" d="M1431 511h5v5h-5z"/><path fill="#fc36c6" d="M1436 511h5v5h-5z"/><path fill="#fc36ba" d="M1441 511h5v5h-5z"/><path fill="#fc30ae" d="M1446 511h5v5h-5z"/><path fill="#fc2aa2" d="M1451 511h5v5h-5z"/><path fill="#fc2496" d="M1456 511h5v5h-5z"/><path fill="#fc248a" d="M1461 511h5v5h-5z"/><path fill="#fc1e84" d="M1466 511h5v5h-5z"/><path fill="#fc1872" d="M1476 511h5v5h-5zM1476 516h5v5h-5z"/><path fill="#fc186c" d="M1481 511h5v5h-5z"/><path fill="#fc1266" d="M1486 511h5v5h-5zM1486 516h5v5h-5z"/><path fill="#fc1260" d="M1491 511h5v5h-5zM1491 516h5v5h-5z"/><path fill="#fc125a" d="M1496 511h5v5h-5z"/><path fill="#fc0c54" d="M1501 511h5v5h-5zM1501 516h5v5h-5z"/><path fill="#fc0c4e" d="M1506 511h5v5h-5zM1506 516h10v5h-10z"/><path fill="#fc063c" d="M1526 511h10v5h-10zM1531 516h5v5h-5zM1531 521h5v5h-5z"/><path fill="#fc002a" d="M1556 511h10v5h-10zM1556 516h15v5h-15zM1561 521h10v5h-10zM1566 526h10v5h-10zM1566 531h15v5h-15zM1571 536h5v5h-5z"/><path fill="#0066fc" d="M1286 516h25v5h-25z"/><path fill="#0660fc" d="M1311 516h10v5h-10z"/><path fill="#0c60fc" d="M1321 516h5v5h-5z"/><path fill="#1260fc" d="M1326 516h5v5h-5z"/><path fill="#1860fc" d="M1331 516h5v5h-5z"/><path fill="#1e5afc" d="M1336 516h5v5h-5z"/><path fill="#245afc" d="M1341 516h5v5h-5z"/><path fill="#305afc" d="M1346 516h5v5h-5z"/><path fill="#365afc" d="M1351 516h5v5h-5z"/><path fill="#425afc" d="M1356 516h5v5h-5z"/><path fill="#4854fc" d="M1361 516h5v5h-5z"/><path fill="#5454fc" d="M1366 516h5v5h-5z"/><path fill="#6054fc" d="M1371 516h5v5h-5z"/><path fill="#6c54fc" d="M1376 516h5v5h-5z"/><path fill="#784efc" d="M1381 516h5v5h-5z"/><path fill="#8a4efc" d="M1386 516h5v5h-5z"/><path fill="#964efc" d="M1391 516h5v5h-5z"/><path fill="#a84efc" d="M1396 516h5v5h-5z"/><path fill="#b448fc" d="M1401 516h5v5h-5z"/><path fill="#c648fc" d="M1406 516h5v5h-5z"/><path fill="#d848fc" d="M1411 516h5v5h-5z"/><path fill="#ea42fc" d="M1416 516h5v5h-5z"/><path fill="#fc42fc" d="M1421 516h5v5h-5z"/><path fill="#fc3cea" d="M1426 516h5v5h-5z"/><path fill="#fc36d8" d="M1431 516h5v5h-5z"/><path fill="#fc30cc" d="M1436 516h5v5h-5z"/><path fill="#fc2aba" d="M1441 516h5v5h-5z"/><path fill="#fc2aae" d="M1446 516h5v5h-5z"/><path fill="#fc24a2" d="M1451 516h5v5h-5z"/><path fill="#fc1e96" d="M1456 516h5v5h-5z"/><path fill="#fc1e90" d="M1461 516h5v5h-5z"/><path fill="#fc1884" d="M1466 516h5v5h-5z"/><path fill="#fc187e" d="M1471 516h5v5h-5z"/><path fill="#fc126c" d="M1481 516h5v5h-5z"/><path fill="#fc0c5a" d="M1496 516h5v5h-5z"/><path fill="#fc0648" d="M1516 516h5v5h-5zM1516 521h10v5h-10z"/><path fill="#fc0642" d="M1521 516h10v5h-10zM1526 521h5v5h-5z"/><path fill="#fc0030" d="M1546 516h10v5h-10zM1551 521h10v5h-10zM1551 526h15v5h-15zM1556 531h10v5h-10zM1561 536h10v5h-10z"/><path fill="#0060fc" d="M1281 521h20v5h-20z"/><path fill="#005afc" d="M1301 521h10v5h-10zM1276 526h10v5h-10z"/><path fill="#065afc" d="M1311 521h10v5h-10z"/><path fill="#0c5afc" d="M1321 521h5v5h-5z"/><path fill="#1254fc" d="M1326 521h5v5h-5z"/><path fill="#1854fc" d="M1331 521h5v5h-5z"/><path fill="#1e54fc" d="M1336 521h5v5h-5z"/><path fill="#2a54fc" d="M1341 521h5v5h-5z"/><path fill="#304efc" d="M1346 521h5v5h-5z"/><path fill="#364efc" d="M1351 521h5v5h-5z"/><path fill="#424efc" d="M1356 521h5v5h-5z"/><path fill="#484efc" d="M1361 521h5v5h-5z"/><path fill="#544efc" d="M1366 521h5v5h-5z"/><path fill="#6048fc" d="M1371 521h5v5h-5z"/><path fill="#6c48fc" d="M1376 521h5v5h-5z"/><path fill="#7848fc" d="M1381 521h5v5h-5z"/><path fill="#8448fc" d="M1386 521h5v5h-5z"/><path fill="#9642fc" d="M1391 521h5v5h-5z"/><path fill="#a242fc" d="M1396 521h5v5h-5z"/><path fill="#b442fc" d="M1401 521h5v5h-5z"/><path fill="#c63cfc" d="M1406 521h5v5h-5z"/><path fill="#d83cfc" d="M1411 521h5v5h-5z"/><path fill="#ea3cfc" d="M1416 521h5v5h-5z"/><path fill="#fc3cfc" d="M1421 521h5v5h-5z"/><path fill="#fc36f0" d="M1426 521h5v5h-5z"/><path fill="#fc30de" d="M1431 521h5v5h-5z"/><path fill="#fc2acc" d="M1436 521h5v5h-5z"/><path fill="#fc24c0" d="M1441 521h5v5h-5z"/><path fill="#fc24b4" d="M1446 521h5v5h-5z"/><path fill="#fc1ea8" d="M1451 521h5v5h-5z"/><path fill="#fc1e9c" d="M1456 521h5v5h-5z"/><path fill="#fc1890" d="M1461 521h5v5h-5z"/><path fill="#fc188a" d="M1466 521h5v5h-5z"/><path fill="#fc127e" d="M1471 521h5v5h-5z"/><path fill="#fc1278" d="M1476 521h5v5h-5z"/><path fill="#fc1272" d="M1481 521h5v5h-5z"/><path fill="#fc0c6c" d="M1486 521h5v5h-5zM1486 526h5v5h-5z"/><path fill="#fc0c60" d="M1491 521h10v5h-10z"/><path fill="#fc065a" d="M1501 521h5v5h-5zM1501 526h5v5h-5zM1501 531h10v5h-10z"/><path fill="#fc0654" d="M1506 521h5v5h-5zM1506 526h5v5h-5z"/><path fill="#fc064e" d="M1511 521h5v5h-5zM1511 526h10v5h-10z"/><path fill="#fc003c" d="M1536 521h5v5h-5zM1536 526h5v5h-5zM1536 531h10v5h-10zM1541 536h10v5h-10zM1541 541h10v5h-10z"/><path fill="#fc0036" d="M1541 521h10v5h-10zM1541 526h10v5h-10zM1546 531h10v5h-10zM1551 536h10v5h-10zM1551 541h10v5h-10z"/><path fill="#0054fc" d="M1286 526h25v5h-25zM1276 531h5v5h-5z"/><path fill="#0654fc" d="M1311 526h5v5h-5z"/><path fill="#0c4efc" d="M1316 526h10v5h-10z"/><path fill="#124efc" d="M1326 526h5v5h-5z"/><path fill="#184efc" d="M1331 526h5v5h-5z"/><path fill="#1e48fc" d="M1336 526h5v5h-5z"/><path fill="#2a48fc" d="M1341 526h5v5h-5z"/><path fill="#3048fc" d="M1346 526h5v5h-5z"/><path fill="#3648fc" d="M1351 526h5v5h-5z"/><path fill="#4248fc" d="M1356 526h5v5h-5z"/><path fill="#4e42fc" d="M1361 526h5v5h-5z"/><path fill="#5442fc" d="M1366 526h5v5h-5z"/><path fill="#6042fc" d="M1371 526h5v5h-5z"/><path fill="#6c42fc" d="M1376 526h5v5h-5z"/><path fill="#783cfc" d="M1381 526h5v5h-5z"/><path fill="#843cfc" d="M1386 526h5v5h-5z"/><path fill="#963cfc" d="M1391 526h5v5h-5z"/><path fill="#a23cfc" d="M1396 526h5v5h-5z"/><path fill="#b436fc" d="M1401 526h5v5h-5z"/><path fill="#c036fc" d="M1406 526h5v5h-5z"/><path fill="#d236fc" d="M1411 526h5v5h-5z"/><path fill="#e430fc" d="M1416 526h5v5h-5z"/><path fill="#f630fc" d="M1421 526h5v5h-5z"/><path fill="#fc2af0" d="M1426 526h5v5h-5z"/><path fill="#fc2ade" d="M1431 526h5v5h-5z"/><path fill="#fc24d2" d="M1436 526h5v5h-5z"/><path fill="#fc1ec0" d="M1441 526h5v5h-5z"/><path fill="#fc1eb4" d="M1446 526h5v5h-5z"/><path fill="#fc18a8" d="M1451 526h5v5h-5z"/><path fill="#fc189c" d="M1456 526h5v5h-5z"/><path fill="#fc1296" d="M1461 526h5v5h-5zM1461 531h5v5h-5z"/><path fill="#fc128a" d="M1466 526h5v5h-5z"/><path fill="#fc1284" d="M1471 526h5v5h-5z"/><path fill="#fc0c78" d="M1476 526h5v5h-5z"/><path fill="#fc0c72" d="M1481 526h5v5h-5z"/><path fill="#fc0666" d="M1491 526h5v5h-5zM1491 531h5v5h-5zM1496 536h5v5h-5z"/><path fill="#fc0660" d="M1496 526h5v5h-5zM1496 531h5v5h-5z"/><path fill="#fc0048" d="M1521 526h5v5h-5zM1521 531h10v5h-10zM1526 536h5v5h-5zM1526 541h10v5h-10zM1531 546h5v5h-5zM1531 551h5v5h-5z"/><path fill="#fc0042" d="M1526 526h10v5h-10zM1531 531h5v5h-5zM1531 536h10v5h-10zM1536 541h5v5h-5zM1536 546h10v5h-10z"/><path fill="#004efc" d="M1281 531h25v5h-25z"/><path fill="#0648fc" d="M1306 531h10v5h-10z"/><path fill="#0c48fc" d="M1316 531h5v5h-5z"/><path fill="#1248fc" d="M1321 531h10v5h-10z"/><path fill="#1842fc" d="M1331 531h5v5h-5z"/><path fill="#2442fc" d="M1336 531h5v5h-5z"/><path fill="#2a42fc" d="M1341 531h5v5h-5z"/><path fill="#3042fc" d="M1346 531h5v5h-5z"/><path fill="#363cfc" d="M1351 531h5v5h-5z"/><path fill="#423cfc" d="M1356 531h5v5h-5z"/><path fill="#4e3cfc" d="M1361 531h5v5h-5z"/><path fill="#543cfc" d="M1366 531h5v5h-5z"/><path fill="#6036fc" d="M1371 531h5v5h-5z"/><path fill="#6c36fc" d="M1376 531h5v5h-5z"/><path fill="#7836fc" d="M1381 531h5v5h-5z"/><path fill="#8436fc" d="M1386 531h5v5h-5z"/><path fill="#9030fc" d="M1391 531h5v5h-5z"/><path fill="#a230fc" d="M1396 531h5v5h-5z"/><path fill="#ae30fc" d="M1401 531h5v5h-5z"/><path fill="#c030fc" d="M1406 531h5v5h-5z"/><path fill="#d22afc" d="M1411 531h5v5h-5z"/><path fill="#e42afc" d="M1416 531h5v5h-5z"/><path fill="#f62afc" d="M1421 531h5v5h-5z"/><path fill="#fc24f6" d="M1426 531h5v5h-5z"/><path fill="#fc24e4" d="M1431 531h5v5h-5z"/><path fill="#fc1ed2" d="M1436 531h5v5h-5z"/><path fill="#fc18c6" d="M1441 531h5v5h-5zM1441 536h5v5h-5z"/><path fill="#fc18ba" d="M1446 531h5v5h-5z"/><path fill="#fc12ae" d="M1451 531h5v5h-5zM1451 536h5v5h-5z"/><path fill="#fc12a2" d="M1456 531h5v5h-5z"/><path fill="#fc0c90" d="M1466 531h5v5h-5zM1466 536h5v5h-5z"/><path fill="#fc0c84" d="M1471 531h5v5h-5z"/><path fill="#fc0c7e" d="M1476 531h5v5h-5z"/><path fill="#fc0678" d="M1481 531h5v5h-5zM1481 536h5v5h-5zM1481 541h5v5h-5z"/><path fill="#fc066c" d="M1486 531h5v5h-5zM1491 536h5v5h-5z"/><path fill="#fc0054" d="M1511 531h5v5h-5zM1511 536h5v5h-5zM1511 541h10v5h-10zM1516 546h5v5h-5zM1516 551h10v5h-10z"/><path fill="#fc004e" d="M1516 531h5v5h-5zM1516 536h10v5h-10zM1521 541h5v5h-5zM1521 546h10v5h-10zM1526 551h5v5h-5z"/><path fill="#0048fc" d="M1276 536h25v5h-25z"/><path fill="#0042fc" d="M1301 536h5v5h-5zM1276 541h20v5h-20z"/><path fill="#0642fc" d="M1306 536h10v5h-10z"/><path fill="#0c42fc" d="M1316 536h5v5h-5z"/><path fill="#1242fc" d="M1321 536h5v5h-5z"/><path fill="#183cfc" d="M1326 536h5v5h-5z"/><path fill="#1e3cfc" d="M1331 536h5v5h-5z"/><path fill="#243cfc" d="M1336 536h5v5h-5z"/><path fill="#2a3cfc" d="M1341 536h5v5h-5z"/><path fill="#3036fc" d="M1346 536h5v5h-5z"/><path fill="#3c36fc" d="M1351 536h5v5h-5z"/><path fill="#4236fc" d="M1356 536h5v5h-5z"/><path fill="#4e36fc" d="M1361 536h5v5h-5z"/><path fill="#5430fc" d="M1366 536h5v5h-5z"/><path fill="#6030fc" d="M1371 536h5v5h-5z"/><path fill="#6c30fc" d="M1376 536h5v5h-5z"/><path fill="#7830fc" d="M1381 536h5v5h-5z"/><path fill="#842afc" d="M1386 536h5v5h-5z"/><path fill="#902afc" d="M1391 536h5v5h-5z"/><path fill="#a22afc" d="M1396 536h5v5h-5z"/><path fill="#ae2afc" d="M1401 536h5v5h-5z"/><path fill="#c024fc" d="M1406 536h5v5h-5z"/><path fill="#cc24fc" d="M1411 536h5v5h-5z"/><path fill="#de24fc" d="M1416 536h5v5h-5z"/><path fill="#f024fc" d="M1421 536h5v5h-5z"/><path fill="#fc1ef6" d="M1426 536h5v5h-5z"/><path fill="#fc1eea" d="M1431 536h5v5h-5z"/><path fill="#fc18d8" d="M1436 536h5v5h-5z"/><path fill="#fc12ba" d="M1446 536h5v5h-5z"/><path fill="#fc0ca2" d="M1456 536h5v5h-5z"/><path fill="#fc0c9c" d="M1461 536h5v5h-5z"/><path fill="#fc068a" d="M1471 536h5v5h-5zM1471 541h5v5h-5zM1471 546h5v5h-5z"/><path fill="#fc067e" d="M1476 536h5v5h-5z"/><path fill="#fc0672" d="M1486 536h5v5h-5z"/><path fill="#fc0060" d="M1501 536h5v5h-5zM1501 541h5v5h-5zM1506 546h5v5h-5zM1506 551h5v5h-5zM1506 556h10v5h-10z"/><path fill="#fc005a" d="M1506 536h5v5h-5zM1506 541h5v5h-5zM1511 546h5v5h-5zM1511 551h5v5h-5zM1516 556h5v5h-5z"/><path fill="#003cfc" d="M1296 541h10v5h-10zM1271 546h20v5h-20z"/><path fill="#063cfc" d="M1306 541h10v5h-10z"/><path fill="#0c3cfc" d="M1316 541h5v5h-5z"/><path fill="#1236fc" d="M1321 541h5v5h-5z"/><path fill="#1836fc" d="M1326 541h5v5h-5z"/><path fill="#1e36fc" d="M1331 541h5v5h-5z"/><path fill="#2436fc" d="M1336 541h5v5h-5z"/><path fill="#2a30fc" d="M1341 541h5v5h-5z"/><path fill="#3030fc" d="M1346 541h5v5h-5z"/><path fill="#3c30fc" d="M1351 541h5v5h-5z"/><path fill="#4230fc" d="M1356 541h5v5h-5z"/><path fill="#4e30fc" d="M1361 541h5v5h-5z"/><path fill="#542afc" d="M1366 541h5v5h-5z"/><path fill="#602afc" d="M1371 541h5v5h-5z"/><path fill="#6c2afc" d="M1376 541h5v5h-5z"/><path fill="#782afc" d="M1381 541h5v5h-5z"/><path fill="#8424fc" d="M1386 541h5v5h-5z"/><path fill="#9024fc" d="M1391 541h5v5h-5z"/><path fill="#9c24fc" d="M1396 541h5v5h-5z"/><path fill="#ae24fc" d="M1401 541h5v5h-5z"/><path fill="#ba1efc" d="M1406 541h5v5h-5z"/><path fill="#cc1efc" d="M1411 541h5v5h-5z"/><path fill="#de1efc" d="M1416 541h5v5h-5z"/><path fill="#f018fc" d="M1421 541h5v5h-5z"/><path fill="#fc18fc" d="M1426 541h5v5h-5z"/><path fill="#fc18ea" d="M1431 541h5v5h-5z"/><path fill="#fc12d8" d="M1436 541h5v5h-5z"/><path fill="#fc12cc" d="M1441 541h5v5h-5z"/><path fill="#fc0cc0" d="M1446 541h5v5h-5zM1446 546h5v5h-5z"/><path fill="#fc0cb4" d="M1451 541h5v5h-5z"/><path fill="#fc0ca8" d="M1456 541h5v5h-5z"/><path fill="#fc069c" d="M1461 541h5v5h-5z"/><path fill="#fc0696" d="M1466 541h5v5h-5zM1466 546h5v5h-5z"/><path fill="#fc0684" d="M1476 541h5v5h-5z"/><path fill="#fc0072" d="M1486 541h5v5h-5zM1491 546h5v5h-5zM1491 551h5v5h-5zM1491 556h5v5h-5zM1496 561h5v5h-5z"/><path fill="#fc006c" d="M1491 541h5v5h-5zM1496 546h5v5h-5zM1496 551h5v5h-5zM1496 556h5v5h-5zM1501 561h5v5h-5z"/><path fill="#fc0066" d="M1496 541h5v5h-5zM1501 546h5v5h-5zM1501 551h5v5h-5zM1501 556h5v5h-5z"/><path fill="#0036fc" d="M1291 546h15v5h-15zM1271 551h20v5h-20z"/><path fill="#0636fc" d="M1306 546h10v5h-10z"/><path fill="#0c30fc" d="M1316 546h5v5h-5zM1311 551h5v5h-5z"/><path fill="#1230fc" d="M1321 546h5v5h-5z"/><path fill="#1830fc" d="M1326 546h5v5h-5z"/><path fill="#1e30fc" d="M1331 546h5v5h-5z"/><path fill="#2430fc" d="M1336 546h5v5h-5z"/><path fill="#2a2afc" d="M1341 546h5v5h-5z"/><path fill="#302afc" d="M1346 546h5v5h-5z"/><path fill="#3c2afc" d="M1351 546h5v5h-5z"/><path fill="#422afc" d="M1356 546h5v5h-5z"/><path fill="#4e24fc" d="M1361 546h5v5h-5z"/><path fill="#5424fc" d="M1366 546h5v5h-5z"/><path fill="#6024fc" d="M1371 546h5v5h-5z"/><path fill="#6c24fc" d="M1376 546h5v5h-5z"/><path fill="#781efc" d="M1381 546h5v5h-5zM1381 551h5v5h-5z"/><path fill="#841efc" d="M1386 546h5v5h-5z"/><path fill="#901efc" d="M1391 546h5v5h-5z"/><path fill="#9c1efc" d="M1396 546h5v5h-5z"/><path fill="#ae18fc" d="M1401 546h5v5h-5z"/><path fill="#ba18fc" d="M1406 546h5v5h-5z"/><path fill="#cc18fc" d="M1411 546h5v5h-5z"/><path fill="#de18fc" d="M1416 546h5v5h-5z"/><path fill="#ea12fc" d="M1421 546h5v5h-5zM1421 551h5v5h-5z"/><path fill="#fc12fc" d="M1426 546h5v5h-5z"/><path fill="#fc12f0" d="M1431 546h5v5h-5z"/><path fill="#fc0cde" d="M1436 546h5v5h-5zM1436 551h5v5h-5z"/><path fill="#fc0ccc" d="M1441 546h5v5h-5z"/><path fill="#fc06b4" d="M1451 546h5v5h-5z"/><path fill="#fc06a8" d="M1456 546h5v5h-5z"/><path fill="#fc06a2" d="M1461 546h5v5h-5zM1461 551h5v5h-5z"/><path fill="#fc0084" d="M1476 546h5v5h-5zM1481 556h5v5h-5zM1481 561h5v5h-5z"/><path fill="#fc007e" d="M1481 546h5v5h-5zM1481 551h5v5h-5zM1486 561h5v5h-5zM1486 566h5v5h-5z"/><path fill="#fc0078" d="M1486 546h5v5h-5zM1486 551h5v5h-5zM1486 556h5v5h-5zM1491 561h5v5h-5z"/><path fill="#0030fc" d="M1291 551h15v5h-15zM1271 556h20v5h-20z"/><path fill="#0630fc" d="M1306 551h5v5h-5z"/><path fill="#0c2afc" d="M1316 551h5v5h-5zM1311 556h5v5h-5z"/><path fill="#122afc" d="M1321 551h5v5h-5z"/><path fill="#182afc" d="M1326 551h5v5h-5z"/><path fill="#1e2afc" d="M1331 551h5v5h-5z"/><path fill="#242afc" d="M1336 551h5v5h-5z"/><path fill="#2a24fc" d="M1341 551h5v5h-5z"/><path fill="#3024fc" d="M1346 551h5v5h-5z"/><path fill="#3c24fc" d="M1351 551h5v5h-5z"/><path fill="#4224fc" d="M1356 551h5v5h-5z"/><path fill="#4e1efc" d="M1361 551h5v5h-5zM1361 556h5v5h-5z"/><path fill="#541efc" d="M1366 551h5v5h-5z"/><path fill="#601efc" d="M1371 551h5v5h-5z"/><path fill="#6c1efc" d="M1376 551h5v5h-5z"/><path fill="#8418fc" d="M1386 551h5v5h-5z"/><path fill="#9018fc" d="M1391 551h5v5h-5z"/><path fill="#9c18fc" d="M1396 551h5v5h-5z"/><path fill="#a818fc" d="M1401 551h5v5h-5z"/><path fill="#ba12fc" d="M1406 551h5v5h-5zM1406 556h5v5h-5z"/><path fill="#c612fc" d="M1411 551h5v5h-5z"/><path fill="#d812fc" d="M1416 551h5v5h-5z"/><path fill="#fc0cfc" d="M1426 551h5v5h-5z"/><path fill="#fc0cf0" d="M1431 551h5v5h-5z"/><path fill="#fc06d2" d="M1441 551h5v5h-5z"/><path fill="#fc06c6" d="M1446 551h5v5h-5zM1446 556h5v5h-5z"/><path fill="#fc06ba" d="M1451 551h5v5h-5z"/><path fill="#fc06ae" d="M1456 551h5v5h-5z"/><path fill="#fc0096" d="M1466 551h5v5h-5zM1471 561h5v5h-5zM1471 566h5v5h-5z"/><path fill="#fc0090" d="M1471 551h5v5h-5zM1471 556h5v5h-5zM1476 566h5v5h-5zM1476 571h5v5h-5z"/><path fill="#fc008a" d="M1476 551h5v5h-5zM1476 556h5v5h-5zM1476 561h5v5h-5zM1481 566h5v5h-5z"/><path fill="#002afc" d="M1291 556h10v5h-10zM1271 561h25v5h-25zM1266 566h10v5h-10z"/><path fill="#062afc" d="M1301 556h10v5h-10z"/><path fill="#0c24fc" d="M1316 556h5v5h-5zM1311 561h5v5h-5z"/><path fill="#1224fc" d="M1321 556h5v5h-5zM1316 561h5v5h-5z"/><path fill="#1824fc" d="M1326 556h5v5h-5z"/><path fill="#1e24fc" d="M1331 556h5v5h-5z"/><path fill="#2424fc" d="M1336 556h5v5h-5z"/><path fill="#2a1efc" d="M1341 556h5v5h-5zM1341 561h5v5h-5z"/><path fill="#361efc" d="M1346 556h5v5h-5z"/><path fill="#3c1efc" d="M1351 556h5v5h-5z"/><path fill="#421efc" d="M1356 556h5v5h-5z"/><path fill="#5418fc" d="M1366 556h5v5h-5z"/><path fill="#6018fc" d="M1371 556h5v5h-5z"/><path fill="#6c18fc" d="M1376 556h5v5h-5z"/><path fill="#7818fc" d="M1381 556h5v5h-5z"/><path fill="#8412fc" d="M1386 556h5v5h-5zM1386 561h5v5h-5z"/><path fill="#9012fc" d="M1391 556h5v5h-5z"/><path fill="#9c12fc" d="M1396 556h5v5h-5z"/><path fill="#a812fc" d="M1401 556h5v5h-5z"/><path fill="#c60cfc" d="M1411 556h5v5h-5zM1411 561h5v5h-5z"/><path fill="#d80cfc" d="M1416 556h5v5h-5z"/><path fill="#ea0cfc" d="M1421 556h5v5h-5z"/><path fill="#f60cfc" d="M1426 556h5v5h-5z"/><path fill="#fc06f6" d="M1431 556h5v5h-5zM1431 561h5v5h-5z"/><path fill="#fc06e4" d="M1436 556h5v5h-5zM1436 561h5v5h-5z"/><path fill="#fc06d8" d="M1441 556h5v5h-5z"/><path fill="#fc00ba" d="M1451 556h5v5h-5zM1456 571h5v5h-5zM1456 576h5v5h-5z"/><path fill="#fc00ae" d="M1456 556h5v5h-5zM1461 571h5v5h-5zM1461 576h5v5h-5z"/><path fill="#fc00a8" d="M1461 556h5v5h-5zM1461 561h5v5h-5zM1461 566h5v5h-5z"/><path fill="#fc009c" d="M1466 556h5v5h-5zM1466 561h5v5h-5zM1471 571h5v5h-5z"/><path fill="#0024fc" d="M1296 561h5v5h-5zM1276 566h25v5h-25zM1266 571h15v5h-15z"/><path fill="#0624fc" d="M1301 561h10v5h-10z"/><path fill="#121efc" d="M1321 561h5v5h-5zM1316 566h10v5h-10z"/><path fill="#181efc" d="M1326 561h5v5h-5z"/><path fill="#1e1efc" d="M1331 561h5v5h-5z"/><path fill="#241efc" d="M1336 561h5v5h-5z"/><path fill="#3618fc" d="M1346 561h5v5h-5zM1346 566h5v5h-5z"/><path fill="#3c18fc" d="M1351 561h5v5h-5z"/><path fill="#4218fc" d="M1356 561h5v5h-5z"/><path fill="#4e18fc" d="M1361 561h5v5h-5z"/><path fill="#5412fc" d="M1366 561h5v5h-5zM1366 566h5v5h-5z"/><path fill="#6012fc" d="M1371 561h5v5h-5zM1371 566h5v5h-5z"/><path fill="#6c12fc" d="M1376 561h5v5h-5z"/><path fill="#7812fc" d="M1381 561h5v5h-5z"/><path fill="#900cfc" d="M1391 561h5v5h-5zM1391 566h5v5h-5z"/><path fill="#9c0cfc" d="M1396 561h5v5h-5zM1396 566h5v5h-5z"/><path fill="#a80cfc" d="M1401 561h5v5h-5z"/><path fill="#b40cfc" d="M1406 561h5v5h-5z"/><path fill="#d206fc" d="M1416 561h5v5h-5zM1416 566h5v5h-5z"/><path fill="#e406fc" d="M1421 561h5v5h-5zM1421 566h5v5h-5z"/><path fill="#f606fc" d="M1426 561h5v5h-5z"/><path fill="#fc00d8" d="M1441 561h5v5h-5zM1446 581h5v5h-5z"/><path fill="#fc00cc" d="M1446 561h5v5h-5zM1446 566h5v5h-5z"/><path fill="#fc00c0" d="M1451 561h5v5h-5zM1451 566h5v5h-5z"/><path fill="#fc00b4" d="M1456 561h5v5h-5zM1456 566h5v5h-5z"/><path fill="#061efc" d="M1301 566h10v5h-10zM1301 571h5v5h-5z"/><path fill="#0c1efc" d="M1311 566h5v5h-5z"/><path fill="#1818fc" d="M1326 566h5v5h-5zM1321 571h5v5h-5z"/><path fill="#1e18fc" d="M1331 566h5v5h-5zM1326 571h5v5h-5z"/><path fill="#2418fc" d="M1336 566h5v5h-5z"/><path fill="#3018fc" d="M1341 566h5v5h-5z"/><path fill="#3c12fc" d="M1351 566h5v5h-5zM1351 571h5v5h-5z"/><path fill="#4212fc" d="M1356 566h5v5h-5z"/><path fill="#4e12fc" d="M1361 566h5v5h-5z"/><path fill="#6c0cfc" d="M1376 566h5v5h-5zM1376 571h5v5h-5z"/><path fill="#780cfc" d="M1381 566h5v5h-5zM1381 571h5v5h-5z"/><path fill="#840cfc" d="M1386 566h5v5h-5z"/><path fill="#a806fc" d="M1401 566h5v5h-5zM1401 571h5v5h-5z"/><path fill="#b406fc" d="M1406 566h5v5h-5zM1406 571h5v5h-5z"/><path fill="#c606fc" d="M1411 566h5v5h-5z"/><path fill="#f000fc" d="M1426 566h5v5h-5zM1426 571h5v5h-5zM1426 576h5v5h-5z"/><path fill="#fc00fc" d="M1431 566h5v5h-5zM1431 571h5v5h-5zM1431 576h5v5h-5zM1431 581h5v5h-5z"/><path fill="#fc00ea" d="M1436 566h5v5h-5zM1436 571h5v5h-5z"/><path fill="#fc00de" d="M1441 566h5v5h-5zM1441 571h5v5h-5zM1441 576h5v5h-5z"/><path fill="#fc00a2" d="M1466 566h5v5h-5zM1466 571h5v5h-5z"/><path fill="#001efc" d="M1281 571h20v5h-20zM1266 576h20v5h-20z"/><path fill="#0618fc" d="M1306 571h5v5h-5zM1301 576h5v5h-5z"/><path fill="#0c18fc" d="M1311 571h5v5h-5zM1306 576h5v5h-5z"/><path fill="#1218fc" d="M1316 571h5v5h-5z"/><path fill="#1e12fc" d="M1331 571h5v5h-5zM1326 576h5v5h-5z"/><path fill="#2a12fc" d="M1336 571h5v5h-5zM1336 576h5v5h-5z"/><path fill="#3012fc" d="M1341 571h5v5h-5z"/><path fill="#3612fc" d="M1346 571h5v5h-5z"/><path fill="#480cfc" d="M1356 571h5v5h-5zM1356 576h5v5h-5z"/><path fill="#4e0cfc" d="M1361 571h5v5h-5zM1361 576h5v5h-5z"/><path fill="#540cfc" d="M1366 571h5v5h-5z"/><path fill="#600cfc" d="M1371 571h5v5h-5z"/><path fill="#7e06fc" d="M1386 571h5v5h-5zM1386 576h5v5h-5z"/><path fill="#8a06fc" d="M1391 571h5v5h-5zM1391 576h5v5h-5z"/><path fill="#9606fc" d="M1396 571h5v5h-5zM1396 576h5v5h-5z"/><path fill="#c000fc" d="M1411 571h5v5h-5zM1411 576h5v5h-5zM1411 581h5v5h-5z"/><path fill="#d200fc" d="M1416 571h5v5h-5z"/><path fill="#de00fc" d="M1421 571h5v5h-5zM1421 576h5v5h-5zM1421 581h5v5h-5z"/><path fill="#fc00d2" d="M1446 571h5v5h-5zM1446 576h5v5h-5z"/><path fill="#fc00c6" d="M1451 571h5v5h-5zM1451 576h5v5h-5z"/><path fill="#0018fc" d="M1286 576h15v5h-15zM1266 581h30v5h-30zM1261 586h15v5h-15z"/><path fill="#0c12fc" d="M1311 576h5v5h-5zM1306 581h10v5h-10z"/><path fill="#1212fc" d="M1316 576h5v5h-5zM1316 581h5v5h-5z"/><path fill="#1812fc" d="M1321 576h5v5h-5z"/><path fill="#2412fc" d="M1331 576h5v5h-5z"/><path fill="#300cfc" d="M1341 576h5v5h-5zM1341 581h5v5h-5z"/><path fill="#360cfc" d="M1346 576h5v5h-5zM1346 581h5v5h-5z"/><path fill="#3c0cfc" d="M1351 576h5v5h-5z"/><path fill="#5a06fc" d="M1366 576h5v5h-5zM1366 581h5v5h-5zM1366 586h5v5h-5z"/><path fill="#6006fc" d="M1371 576h5v5h-5zM1371 581h5v5h-5z"/><path fill="#6c06fc" d="M1376 576h5v5h-5zM1376 581h5v5h-5z"/><path fill="#7806fc" d="M1381 576h5v5h-5z"/><path fill="#a200fc" d="M1401 576h5v5h-5zM1401 581h5v5h-5zM1401 586h5v5h-5zM1401 591h5v5h-5zM1401 596h5v5h-5z"/><path fill="#b400fc" d="M1406 576h5v5h-5z"/><path fill="#cc00fc" d="M1416 576h5v5h-5zM1416 581h5v5h-5zM1416 586h5v5h-5z"/><path fill="#fc00f0" d="M1436 576h5v5h-5zM1436 581h5v5h-5z"/><path fill="#0612fc" d="M1296 581h10v5h-10zM1296 586h10v5h-10z"/><path fill="#180cfc" d="M1321 581h5v5h-5zM1321 586h5v5h-5z"/><path fill="#1e0cfc" d="M1326 581h5v5h-5zM1326 586h5v5h-5z"/><path fill="#240cfc" d="M1331 581h5v5h-5zM1331 586h5v5h-5z"/><path fill="#2a0cfc" d="M1336 581h5v5h-5z"/><path fill="#3c06fc" d="M1351 581h5v5h-5zM1351 586h5v5h-5zM1351 591h5v5h-5z"/><path fill="#4806fc" d="M1356 581h5v5h-5zM1356 586h5v5h-5z"/><path fill="#4e06fc" d="M1361 581h5v5h-5zM1361 586h5v5h-5z"/><path fill="#7206fc" d="M1381 581h5v5h-5z"/><path fill="#7e00fc" d="M1386 581h5v5h-5zM1386 586h5v5h-5zM1386 591h5v5h-5zM1386 596h5v5h-5zM1386 601h5v5h-5z"/><path fill="#8a00fc" d="M1391 581h5v5h-5zM1391 586h5v5h-5zM1391 591h5v5h-5zM1391 596h5v5h-5zM1391 601h5v5h-5z"/><path fill="#9600fc" d="M1396 581h5v5h-5zM1396 586h5v5h-5zM1396 591h5v5h-5zM1396 596h5v5h-5zM1396 601h5v5h-5z"/><path fill="#ae00fc" d="M1406 581h5v5h-5zM1406 586h5v5h-5zM1406 591h5v5h-5zM1406 596h5v5h-5z"/><path fill="#ea00fc" d="M1426 581h5v5h-5zM1426 586h5v5h-5z"/><path fill="#fc00e4" d="M1441 581h5v5h-5z"/><path fill="#0012fc" d="M1276 586h20v5h-20zM1261 591h25v5h-25zM1261 596h10v5h-10z"/><path fill="#0c0cfc" d="M1306 586h10v5h-10zM1306 591h5v5h-5z"/><path fill="#120cfc" d="M1316 586h5v5h-5zM1311 591h10v5h-10z"/><path fill="#2a06fc" d="M1336 586h5v5h-5zM1336 591h5v5h-5zM1336 596h5v5h-5z"/><path fill="#3006fc" d="M1341 586h5v5h-5zM1341 591h5v5h-5z"/><path fill="#3606fc" d="M1346 586h5v5h-5zM1346 591h5v5h-5z"/><path fill="#6000fc" d="M1371 586h5v5h-5zM1371 591h5v5h-5zM1371 596h5v5h-5zM1371 601h5v5h-5zM1371 606h5v5h-5z"/><path fill="#6c00fc" d="M1376 586h5v5h-5zM1376 591h5v5h-5zM1376 596h5v5h-5zM1376 601h5v5h-5zM1376 606h5v5h-5z"/><path fill="#7200fc" d="M1381 586h5v5h-5zM1381 591h5v5h-5zM1381 596h5v5h-5zM1381 601h5v5h-5zM1381 606h5v5h-5z"/><path fill="#ba00fc" d="M1411 586h5v5h-5zM1411 591h5v5h-5z"/><path fill="#d800fc" d="M1421 586h5v5h-5zM1421 591h5v5h-5z"/><path fill="#f600fc" d="M1431 586h5v5h-5z"/><path fill="#fc00f6" d="M1436 586h5v5h-5z"/><path fill="#000cfc" d="M1286 591h10v5h-10zM1271 596h25v5h-25zM1261 601h25v5h-25zM1256 606h15v5h-15z"/><path fill="#060cfc" d="M1296 591h10v5h-10zM1296 596h10v5h-10z"/><path fill="#1806fc" d="M1321 591h5v5h-5zM1321 596h5v5h-5zM1316 601h10v5h-10z"/><path fill="#1e06fc" d="M1326 591h5v5h-5zM1326 596h5v5h-5z"/><path fill="#2406fc" d="M1331 591h5v5h-5zM1331 596h5v5h-5z"/><path fill="#4800fc" d="M1356 591h5v5h-5zM1356 596h5v5h-5zM1356 601h5v5h-5zM1356 606h5v5h-5zM1356 611h5v5h-5z"/><path fill="#4e00fc" d="M1361 591h5v5h-5zM1361 596h5v5h-5zM1361 601h5v5h-5zM1361 606h5v5h-5zM1361 611h5v5h-5z"/><path fill="#5a00fc" d="M1366 591h5v5h-5zM1366 596h5v5h-5zM1366 601h5v5h-5zM1366 606h5v5h-5zM1366 611h5v5h-5z"/><path fill="#c600fc" d="M1416 591h5v5h-5z"/><path fill="#0c06fc" d="M1306 596h5v5h-5zM1306 601h5v5h-5zM1301 606h10v5h-10z"/><path fill="#1206fc" d="M1311 596h10v5h-10zM1311 601h5v5h-5z"/><path fill="#3000fc" d="M1341 596h5v5h-5zM1341 601h5v5h-5zM1341 606h5v5h-5zM1341 611h5v5h-5zM1336 621h5v5h-5z"/><path fill="#3600fc" d="M1346 596h5v5h-5zM1346 601h5v5h-5zM1346 606h5v5h-5zM1341 616h5v5h-5zM1341 621h5v5h-5z"/><path fill="#4200fc" d="M1351 596h5v5h-5zM1351 601h5v5h-5zM1351 606h5v5h-5zM1351 611h5v5h-5zM1351 616h5v5h-5z"/><path fill="#0006fc" d="M1286 601h5v5h-5zM1271 606h20v5h-20zM1256 611h35v5h-35zM1256 616h25v5h-25zM1256 621h10v5h-10z"/><path fill="#0606fc" d="M1291 601h15v5h-15zM1291 606h10v5h-10zM1291 611h5v5h-5z"/><path fill="#1e00fc" d="M1326 601h5v5h-5zM1326 606h5v5h-5zM1321 611h10v5h-10zM1321 616h5v5h-5zM1321 621h5v5h-5zM1321 626h5v5h-5z"/><path fill="#2400fc" d="M1331 601h5v5h-5zM1331 606h5v5h-5zM1331 611h5v5h-5zM1326 616h10v5h-10zM1326 621h5v5h-5zM1326 626h5v5h-5z"/><path fill="#2a00fc" d="M1336 601h5v5h-5zM1336 606h5v5h-5zM1336 611h5v5h-5zM1336 616h5v5h-5zM1331 621h5v5h-5z"/><path fill="#1200fc" d="M1311 606h5v5h-5zM1311 611h5v5h-5zM1311 616h5v5h-5zM1306 621h10v5h-10zM1306 626h10v5h-10zM1306 631h10v5h-10z"/><path fill="#1800fc" d="M1316 606h10v5h-10zM1316 611h5v5h-5zM1316 616h5v5h-5zM1316 621h5v5h-5zM1316 626h5v5h-5z"/><path fill="#0600fc" d="M1296 611h5v5h-5zM1291 616h10v5h-10zM1291 621h10v5h-10zM1286 626h15v5h-15zM1286 631h10v5h-10zM1286 636h10v5h-10zM1286 641h5v5h-5z"/><path fill="#0c00fc" d="M1301 611h10v5h-10zM1301 616h10v5h-10zM1301 621h5v5h-5zM1301 626h5v5h-5zM1296 631h10v5h-10zM1296 636h10v5h-10z"/><path fill="#3c00fc" d="M1346 611h5v5h-5zM1346 616h5v5h-5z"/><path fill="#0000fc" d="M1281 616h10v5h-10zM1266 621h25v5h-25zM1256 626h30v5h-30zM1256 631h30v5h-30zM1256 636h30v5h-30zM1256 641h30v5h-30z"/></g></g><rect x="1151.5" y="136.5" width="704.5" height="535.3" fill="none" stroke="#a8a8a8" stroke-width="1.5"/><line x1="1144.5" y1="672.5" x2="1151.5" y2="672.5" stroke="#c8c8c8" stroke-width="1.3" /><text x="1144.2" y="678.4" font-size="15.20" fill="#d4d4d4" text-anchor="end" >0</text><line x1="1151.3" y1="671.8" x2="1151.3" y2="678.3" stroke="#c8c8c8" stroke-width="1.5" /><text x="1151.3" y="696.2" font-size="15.20" fill="#d4d4d4" text-anchor="middle" >0</text><line x1="1144.5" y1="608.9" x2="1151.5" y2="608.9" stroke="#c8c8c8" stroke-width="1.3" /><text x="1144.2" y="614.8" font-size="15.20" fill="#d4d4d4" text-anchor="end" >0,1</text><line x1="1235.2" y1="671.8" x2="1235.2" y2="678.3" stroke="#c8c8c8" stroke-width="1.5" /><text x="1235.2" y="696.2" font-size="15.20" fill="#d4d4d4" text-anchor="middle" >0,1</text><line x1="1144.5" y1="545.2" x2="1151.5" y2="545.2" stroke="#c8c8c8" stroke-width="1.3" /><text x="1144.2" y="551.1" font-size="15.20" fill="#d4d4d4" text-anchor="end" >0,2</text><line x1="1319.1" y1="671.8" x2="1319.1" y2="678.3" stroke="#c8c8c8" stroke-width="1.5" /><text x="1319.1" y="696.2" font-size="15.20" fill="#d4d4d4" text-anchor="middle" >0,2</text><line x1="1144.5" y1="481.6" x2="1151.5" y2="481.6" stroke="#c8c8c8" stroke-width="1.3" /><text x="1144.2" y="487.5" font-size="15.20" fill="#d4d4d4" text-anchor="end" >0,3</text><line x1="1403.0" y1="671.8" x2="1403.0" y2="678.3" stroke="#c8c8c8" stroke-width="1.5" /><text x="1403.0" y="696.2" font-size="15.20" fill="#d4d4d4" text-anchor="middle" >0,3</text><line x1="1144.5" y1="418.0" x2="1151.5" y2="418.0" stroke="#c8c8c8" stroke-width="1.3" /><text x="1144.2" y="423.9" font-size="15.20" fill="#d4d4d4" text-anchor="end" >0,4</text><line x1="1486.9" y1="671.8" x2="1486.9" y2="678.3" stroke="#c8c8c8" stroke-width="1.5" /><text x="1486.9" y="696.2" font-size="15.20" fill="#d4d4d4" text-anchor="middle" >0,4</text><line x1="1144.5" y1="354.4" x2="1151.5" y2="354.4" stroke="#c8c8c8" stroke-width="1.3" /><text x="1144.2" y="360.3" font-size="15.20" fill="#d4d4d4" text-anchor="end" >0,5</text><line x1="1570.8" y1="671.8" x2="1570.8" y2="678.3" stroke="#c8c8c8" stroke-width="1.5" /><text x="1570.8" y="696.2" font-size="15.20" fill="#d4d4d4" text-anchor="middle" >0,5</text><line x1="1144.5" y1="290.8" x2="1151.5" y2="290.8" stroke="#c8c8c8" stroke-width="1.3" /><text x="1144.2" y="296.6" font-size="15.20" fill="#d4d4d4" text-anchor="end" >0,6</text><line x1="1654.7" y1="671.8" x2="1654.7" y2="678.3" stroke="#c8c8c8" stroke-width="1.5" /><text x="1654.7" y="696.2" font-size="15.20" fill="#d4d4d4" text-anchor="middle" >0,6</text><line x1="1144.5" y1="227.1" x2="1151.5" y2="227.1" stroke="#c8c8c8" stroke-width="1.3" /><text x="1144.2" y="233.0" font-size="15.20" fill="#d4d4d4" text-anchor="end" >0,7</text><line x1="1738.6" y1="671.8" x2="1738.6" y2="678.3" stroke="#c8c8c8" stroke-width="1.5" /><text x="1738.6" y="696.2" font-size="15.20" fill="#d4d4d4" text-anchor="middle" >0,7</text><line x1="1144.5" y1="163.5" x2="1151.5" y2="163.5" stroke="#c8c8c8" stroke-width="1.3" /><text x="1144.2" y="169.4" font-size="15.20" fill="#d4d4d4" text-anchor="end" >0,8</text><line x1="1822.5" y1="671.8" x2="1822.5" y2="678.3" stroke="#c8c8c8" stroke-width="1.5" /><text x="1822.5" y="696.2" font-size="15.20" fill="#d4d4d4" text-anchor="middle" >0,8</text><g clip-path="url(#cPlot)"><rect x="1366.2" y="224.2" width="14.6" height="14.6" fill="none" stroke="#f4f4f4" stroke-width="2"/><rect x="1373.7" y="269.7" width="14.6" height="14.6" fill="none" stroke="#f4f4f4" stroke-width="2"/><rect x="1381.2" y="315.7" width="14.6" height="14.6" fill="none" stroke="#f4f4f4" stroke-width="2"/><rect x="1389.7" y="361.5" width="14.6" height="14.6" fill="none" stroke="#f4f4f4" stroke-width="2"/><rect x="1397.7" y="409.6" width="14.6" height="14.6" fill="none" stroke="#f4f4f4" stroke-width="2"/><rect x="1511.5" y="321.5" width="14.6" height="14.6" fill="none" stroke="#f4f4f4" stroke-width="2"/><rect x="1489.2" y="348.7" width="14.6" height="14.6" fill="none" stroke="#f4f4f4" stroke-width="2"/><rect x="1468.7" y="376.4" width="14.6" height="14.6" fill="none" stroke="#f4f4f4" stroke-width="2"/><rect x="1446.4" y="403.4" width="14.6" height="14.6" fill="none" stroke="#f4f4f4" stroke-width="2"/><rect x="1427.3" y="427.2" width="14.6" height="14.6" fill="none" stroke="#f4f4f4" stroke-width="2"/><rect x="1714.6" y="459.6" width="14.6" height="14.6" fill="none" stroke="#f4f4f4" stroke-width="2"/><rect x="1653.7" y="459.6" width="14.6" height="14.6" fill="none" stroke="#f4f4f4" stroke-width="2"/><rect x="1592.7" y="458.0" width="14.6" height="14.6" fill="none" stroke="#f4f4f4" stroke-width="2"/><rect x="1526.3" y="456.6" width="14.6" height="14.6" fill="none" stroke="#f4f4f4" stroke-width="2"/><rect x="1467.4" y="455.2" width="14.6" height="14.6" fill="none" stroke="#f4f4f4" stroke-width="2"/><rect x="1311.5" y="452.4" width="14.6" height="14.6" fill="none" stroke="#f4f4f4" stroke-width="2"/><rect x="1330.4" y="453.6" width="14.6" height="14.6" fill="none" stroke="#f4f4f4" stroke-width="2"/><rect x="1348.7" y="453.7" width="14.6" height="14.6" fill="none" stroke="#f4f4f4" stroke-width="2"/><rect x="1367.5" y="453.7" width="14.6" height="14.6" fill="none" stroke="#f4f4f4" stroke-width="2"/><rect x="1386.4" y="453.7" width="14.6" height="14.6" fill="none" stroke="#f4f4f4" stroke-width="2"/><rect x="1425.7" y="567.9" width="14.6" height="14.6" fill="none" stroke="#f4f4f4" stroke-width="2"/><rect x="1421.4" y="545.7" width="14.6" height="14.6" fill="none" stroke="#f4f4f4" stroke-width="2"/><rect x="1418.3" y="521.6" width="14.6" height="14.6" fill="none" stroke="#f4f4f4" stroke-width="2"/><rect x="1413.5" y="499.4" width="14.6" height="14.6" fill="none" stroke="#f4f4f4" stroke-width="2"/><rect x="1408.9" y="475.5" width="14.6" height="14.6" fill="none" stroke="#f4f4f4" stroke-width="2"/><rect x="1268.7" y="625.8" width="14.6" height="14.6" fill="none" stroke="#f4f4f4" stroke-width="2"/><rect x="1296.7" y="591.5" width="14.6" height="14.6" fill="none" stroke="#f4f4f4" stroke-width="2"/><rect x="1323.7" y="557.7" width="14.6" height="14.6" fill="none" stroke="#f4f4f4" stroke-width="2"/><rect x="1351.7" y="523.5" width="14.6" height="14.6" fill="none" stroke="#f4f4f4" stroke-width="2"/><rect x="1379.8" y="487.8" width="14.6" height="14.6" fill="none" stroke="#f4f4f4" stroke-width="2"/><rect x="1405.9" y="454.9" width="14.6" height="14.6" fill="none" stroke="#000" stroke-width="2.4"/><circle cx="1373.5" cy="231.7" r="4.7" fill="#2a9a2a" stroke="#111" stroke-width="1.4"/><circle cx="1382.7" cy="272.7" r="4.7" fill="#84ac84" stroke="#111" stroke-width="1.4"/><circle cx="1391.5" cy="315.4" r="4.7" fill="#8cb08c" stroke="#111" stroke-width="1.4"/><circle cx="1399.6" cy="360.0" r="4.7" fill="#92b292" stroke="#111" stroke-width="1.4"/><circle cx="1409.0" cy="407.9" r="4.7" fill="#9cb09c" stroke="#111" stroke-width="1.4"/><circle cx="1515.8" cy="327.9" r="4.7" fill="#b4b42a" stroke="#111" stroke-width="1.4"/><circle cx="1496.0" cy="351.3" r="4.7" fill="#b8b888" stroke="#111" stroke-width="1.4"/><circle cx="1477.3" cy="376.3" r="4.7" fill="#b4b48c" stroke="#111" stroke-width="1.4"/><circle cx="1456.4" cy="403.1" r="4.7" fill="#b2b294" stroke="#111" stroke-width="1.4"/><circle cx="1438.9" cy="425.5" r="4.7" fill="#acac9e" stroke="#111" stroke-width="1.4"/><circle cx="1719.0" cy="466.8" r="4.7" fill="#d01818" stroke="#111" stroke-width="1.4"/><circle cx="1659.7" cy="463.9" r="4.7" fill="#b86070" stroke="#111" stroke-width="1.4"/><circle cx="1601.9" cy="460.8" r="4.7" fill="#b87080" stroke="#111" stroke-width="1.4"/><circle cx="1536.5" cy="457.7" r="4.7" fill="#b48890" stroke="#111" stroke-width="1.4"/><circle cx="1477.7" cy="454.8" r="4.7" fill="#b0a0a8" stroke="#111" stroke-width="1.4"/><circle cx="1319.9" cy="447.7" r="4.7" fill="#3cb0b0" stroke="#111" stroke-width="1.4"/><circle cx="1341.0" cy="448.6" r="4.7" fill="#84b0b0" stroke="#111" stroke-width="1.4"/><circle cx="1359.9" cy="448.9" r="4.7" fill="#94b0b0" stroke="#111" stroke-width="1.4"/><circle cx="1379.4" cy="450.7" r="4.7" fill="#a0b0b0" stroke="#111" stroke-width="1.4"/><circle cx="1398.9" cy="452.0" r="4.7" fill="#a8b0b0" stroke="#111" stroke-width="1.4"/><circle cx="1440.0" cy="571.8" r="4.7" fill="#b040b0" stroke="#111" stroke-width="1.4"/><circle cx="1435.8" cy="547.0" r="4.7" fill="#b070b0" stroke="#111" stroke-width="1.4"/><circle cx="1431.5" cy="523.4" r="4.7" fill="#b088b0" stroke="#111" stroke-width="1.4"/><circle cx="1425.4" cy="497.8" r="4.7" fill="#aca0b0" stroke="#111" stroke-width="1.4"/><circle cx="1420.9" cy="474.2" r="4.7" fill="#b0a8b0" stroke="#111" stroke-width="1.4"/><circle cx="1273.1" cy="635.7" r="4.7" fill="#1c1cc0" stroke="#111" stroke-width="1.4"/><circle cx="1304.2" cy="597.2" r="4.7" fill="#6464b4" stroke="#111" stroke-width="1.4"/><circle cx="1333.5" cy="559.0" r="4.7" fill="#7a7ab4" stroke="#111" stroke-width="1.4"/><circle cx="1363.0" cy="521.8" r="4.7" fill="#8a8ab4" stroke="#111" stroke-width="1.4"/><circle cx="1391.3" cy="485.7" r="4.7" fill="#9a9ab4" stroke="#111" stroke-width="1.4"/><circle cx="1416.4" cy="453.8" r="4.7" fill="#ffffff" stroke="#111" stroke-width="1.4"/><circle cx="1357.5" cy="502.2" r="5.4" fill="#000"/></g><rect x="1610" y="143.4" width="240.6" height="202" fill="#262626" stroke="#3c3c3c" stroke-width="1"/><g clip-path="url(#cIns)"><path d="M1600 100H1677.3L1860 249.8V400H1600Z" fill="url(#gInO)"/><path d="M1600 147L1860 341V400H1600Z" fill="url(#gInB)"/><circle cx="1717" cy="228.7" r="4.4" fill="#7a8a00" stroke="#111" stroke-width="1.5"/><rect x="1721.3" y="236.7" width="14.6" height="14.6" fill="none" stroke="#f4f4f4" stroke-width="2"/></g><rect x="1611.5" y="144.5" width="238" height="200" fill="none" stroke="#a0a0a0" stroke-width="2"/><text x="68.4" y="776.0" font-size="32.30" fill="#f4f4f4" textLength="237.0" lengthAdjust="spacingAndGlyphs" stroke="#f4f4f4" stroke-width="0.35">Current Reading</text><text x="68.0" y="821.6" font-size="25.70" fill="#f4f4f4" textLength="110.0" lengthAdjust="spacingAndGlyphs" stroke="#f4f4f4" stroke-width="0.35">x: 0,4351</text><text x="68.0" y="866.0" font-size="25.70" fill="#f4f4f4" textLength="111.5" lengthAdjust="spacingAndGlyphs" stroke="#f4f4f4" stroke-width="0.35">y: 0,5397</text><text x="68.0" y="911.0" font-size="25.70" fill="#f4f4f4" textLength="104.6" lengthAdjust="spacingAndGlyphs" stroke="#f4f4f4" stroke-width="0.35">fL: 61,38</text><text x="68.0" y="955.0" font-size="25.70" fill="#f4f4f4" textLength="172.0" lengthAdjust="spacingAndGlyphs" stroke="#f4f4f4" stroke-width="0.35">cd/m²: 210,31</text><rect x="427.6" y="753.6" width="284.6" height="196.0" fill="#262626" /><line x1="427.6" y1="802.6" x2="712.2" y2="802.6" stroke="#a8a8a8" stroke-width="1.3" /><line x1="427.6" y1="851.6" x2="712.2" y2="851.6" stroke="#a8a8a8" stroke-width="1.3" /><line x1="427.6" y1="900.6" x2="712.2" y2="900.6" stroke="#a8a8a8" stroke-width="1.3" /><rect x="427.6" y="753.6" width="284.6" height="196.0" fill="none" stroke="#a8a8a8" stroke-width="1.5"/><line x1="421.6" y1="753.6" x2="427.6" y2="753.6" stroke="#c8c8c8" stroke-width="1.3" /><text x="421.5" y="759.2" font-size="15.80" fill="#d4d4d4" text-anchor="end" >4</text><line x1="421.6" y1="802.6" x2="427.6" y2="802.6" stroke="#c8c8c8" stroke-width="1.3" /><text x="421.5" y="808.2" font-size="15.80" fill="#d4d4d4" text-anchor="end" >2</text><line x1="421.6" y1="851.6" x2="427.6" y2="851.6" stroke="#c8c8c8" stroke-width="1.3" /><text x="421.5" y="857.2" font-size="15.80" fill="#d4d4d4" text-anchor="end" >0</text><line x1="421.6" y1="900.6" x2="427.6" y2="900.6" stroke="#c8c8c8" stroke-width="1.3" /><text x="421.5" y="906.2" font-size="15.80" fill="#d4d4d4" text-anchor="end" >-2</text><line x1="421.6" y1="949.6" x2="427.6" y2="949.6" stroke="#c8c8c8" stroke-width="1.3" /><text x="421.5" y="955.2" font-size="15.80" fill="#d4d4d4" text-anchor="end" >-4</text><line x1="427.6" y1="949.6" x2="427.6" y2="955.6" stroke="#c8c8c8" stroke-width="1.5" /><line x1="712.2" y1="949.6" x2="712.2" y2="955.6" stroke="#c8c8c8" stroke-width="1.5" /><text x="514.8" y="747.0" font-size="15.20" fill="#d4d4d4" textLength="90.0" lengthAdjust="spacingAndGlyphs" >RGB Balance</text><text x="570.0" y="966.3" font-size="15.00" fill="#d4d4d4" text-anchor="middle" textLength="38.0" lengthAdjust="spacingAndGlyphs" >100%</text><rect x="455.8" y="851.6" width="74.2" height="34.4" fill="url(#gRb)" stroke="#000" stroke-width="1.3"/><rect x="531.5" y="812.5" width="74" height="39.1" fill="url(#gGb)" stroke="#000" stroke-width="1.3"/><rect x="606.6" y="851.6" width="74.5" height="87.6" fill="url(#gBb)" stroke="#000" stroke-width="1.3"/><rect x="735.9" y="728.2" width="784.9" height="32.6" fill="url(#gHdr)" /><rect x="735.9" y="728.2" width="22.1" height="32.6" fill="#000000" /><text x="938.6" y="751.2" font-size="17.40" fill="#ffffff" textLength="43.5" lengthAdjust="spacingAndGlyphs" stroke="#ffffff" stroke-width="0.45">20%</text><text x="1056.4" y="751.2" font-size="17.40" fill="#ffffff" textLength="43.5" lengthAdjust="spacingAndGlyphs" stroke="#ffffff" stroke-width="0.45">40%</text><text x="1174.3" y="751.2" font-size="17.40" fill="#ffffff" textLength="43.5" lengthAdjust="spacingAndGlyphs" stroke="#ffffff" stroke-width="0.45">60%</text><text x="1292.0" y="751.2" font-size="17.40" fill="#ffffff" textLength="43.5" lengthAdjust="spacingAndGlyphs" stroke="#ffffff" stroke-width="0.45">80%</text><text x="1410.0" y="751.2" font-size="17.40" fill="#ffffff" textLength="57.0" lengthAdjust="spacingAndGlyphs" stroke="#ffffff" stroke-width="0.45">100%</text><rect x="735.9" y="760.8" width="784.9" height="31.0" fill="#404040" /><rect x="735.9" y="760.8" width="22.1" height="31.0" fill="url(#gNar)" /><text x="764.4" y="783.8" font-size="19.60" fill="#f0f0f0" textLength="84.3" lengthAdjust="spacingAndGlyphs" >x: CIE31</text><text x="938.6" y="783.8" font-size="19.60" fill="#f0f0f0" textLength="74.0" lengthAdjust="spacingAndGlyphs" >0,3425</text><text x="1056.4" y="783.8" font-size="19.60" fill="#f0f0f0" textLength="74.0" lengthAdjust="spacingAndGlyphs" >0,3645</text><text x="1174.3" y="783.8" font-size="19.60" fill="#f0f0f0" textLength="74.0" lengthAdjust="spacingAndGlyphs" >0,3885</text><text x="1292.0" y="783.8" font-size="19.60" fill="#f0f0f0" textLength="74.0" lengthAdjust="spacingAndGlyphs" >0,4121</text><text x="1410.0" y="783.8" font-size="19.60" fill="#f0f0f0" textLength="74.0" lengthAdjust="spacingAndGlyphs" >0,4351</text><rect x="735.9" y="791.8" width="784.9" height="31.0" fill="#7f7f7f" /><rect x="735.9" y="791.8" width="22.1" height="31.0" fill="url(#gNar)" /><text x="764.4" y="814.8" font-size="19.60" fill="#f0f0f0" textLength="87.0" lengthAdjust="spacingAndGlyphs" >y: CIE31</text><text x="938.6" y="814.8" font-size="19.60" fill="#f0f0f0" textLength="74.0" lengthAdjust="spacingAndGlyphs" >0,3849</text><text x="1056.4" y="814.8" font-size="19.60" fill="#f0f0f0" textLength="74.0" lengthAdjust="spacingAndGlyphs" >0,4217</text><text x="1174.3" y="814.8" font-size="19.60" fill="#f0f0f0" textLength="74.0" lengthAdjust="spacingAndGlyphs" >0,4617</text><text x="1292.0" y="814.8" font-size="19.60" fill="#f0f0f0" textLength="74.0" lengthAdjust="spacingAndGlyphs" >0,5013</text><text x="1410.0" y="814.8" font-size="19.60" fill="#f0f0f0" textLength="74.0" lengthAdjust="spacingAndGlyphs" >0,5397</text><rect x="735.9" y="822.9" width="784.9" height="31.0" fill="#404040" /><rect x="735.9" y="822.9" width="22.1" height="31.0" fill="url(#gNar)" /><text x="764.4" y="845.9" font-size="19.60" fill="#f0f0f0" textLength="13.5" lengthAdjust="spacingAndGlyphs" >Y</text><text x="938.6" y="845.9" font-size="19.60" fill="#f0f0f0" textLength="101.0" lengthAdjust="spacingAndGlyphs" >222,0285</text><text x="1056.4" y="845.9" font-size="19.60" fill="#f0f0f0" textLength="101.0" lengthAdjust="spacingAndGlyphs" >218,6705</text><text x="1174.3" y="845.9" font-size="19.60" fill="#f0f0f0" textLength="101.0" lengthAdjust="spacingAndGlyphs" >215,6506</text><text x="1292.0" y="845.9" font-size="19.60" fill="#f0f0f0" textLength="101.0" lengthAdjust="spacingAndGlyphs" >213,1813</text><text x="1410.0" y="845.9" font-size="19.60" fill="#f0f0f0" textLength="101.0" lengthAdjust="spacingAndGlyphs" >210,3092</text><rect x="735.9" y="853.9" width="784.9" height="31.0" fill="#7f7f7f" /><rect x="735.9" y="853.9" width="22.1" height="31.0" fill="url(#gNar)" /><text x="764.4" y="876.9" font-size="19.60" fill="#f0f0f0" textLength="156.0" lengthAdjust="spacingAndGlyphs" >Target x:CIE31</text><text x="938.6" y="876.9" font-size="19.60" fill="#f0f0f0" textLength="74.0" lengthAdjust="spacingAndGlyphs" >0,3384</text><text x="1056.4" y="876.9" font-size="19.60" fill="#f0f0f0" textLength="74.0" lengthAdjust="spacingAndGlyphs" >0,3619</text><text x="1174.3" y="876.9" font-size="19.60" fill="#f0f0f0" textLength="74.0" lengthAdjust="spacingAndGlyphs" >0,3869</text><text x="1292.0" y="876.9" font-size="19.60" fill="#f0f0f0" textLength="74.0" lengthAdjust="spacingAndGlyphs" >0,4127</text><text x="1410.0" y="876.9" font-size="19.60" fill="#f0f0f0" textLength="74.0" lengthAdjust="spacingAndGlyphs" >0,4378</text><rect x="735.9" y="885.0" width="784.9" height="31.0" fill="#404040" /><rect x="735.9" y="885.0" width="22.1" height="31.0" fill="url(#gNar)" /><text x="764.4" y="908.0" font-size="19.60" fill="#f0f0f0" textLength="157.0" lengthAdjust="spacingAndGlyphs" >Target y:CIE31</text><text x="938.6" y="908.0" font-size="19.60" fill="#f0f0f0" textLength="74.0" lengthAdjust="spacingAndGlyphs" >0,3714</text><text x="1056.4" y="908.0" font-size="19.60" fill="#f0f0f0" textLength="74.0" lengthAdjust="spacingAndGlyphs" >0,4103</text><text x="1174.3" y="908.0" font-size="19.60" fill="#f0f0f0" textLength="74.0" lengthAdjust="spacingAndGlyphs" >0,4517</text><text x="1292.0" y="908.0" font-size="19.60" fill="#f0f0f0" textLength="74.0" lengthAdjust="spacingAndGlyphs" >0,4944</text><text x="1410.0" y="908.0" font-size="19.60" fill="#f0f0f0" textLength="74.0" lengthAdjust="spacingAndGlyphs" >0,5359</text><rect x="735.9" y="916.0" width="784.9" height="31.0" fill="#7f7f7f" /><rect x="735.9" y="916.0" width="22.1" height="31.0" fill="url(#gNar)" /><text x="764.4" y="939.0" font-size="19.60" fill="#f0f0f0" textLength="91.0" lengthAdjust="spacingAndGlyphs" >Target Y</text><text x="938.6" y="939.0" font-size="19.60" fill="#f0f0f0" textLength="101.0" lengthAdjust="spacingAndGlyphs" >220,7062</text><text x="1056.4" y="939.0" font-size="19.60" fill="#f0f0f0" textLength="101.0" lengthAdjust="spacingAndGlyphs" >216,7535</text><text x="1174.3" y="939.0" font-size="19.60" fill="#f0f0f0" textLength="101.0" lengthAdjust="spacingAndGlyphs" >213,4095</text><text x="1292.0" y="939.0" font-size="19.60" fill="#f0f0f0" textLength="101.0" lengthAdjust="spacingAndGlyphs" >210,6253</text><text x="1410.0" y="939.0" font-size="19.60" fill="#f0f0f0" textLength="101.0" lengthAdjust="spacingAndGlyphs" >208,3981</text><rect x="0.0" y="977.8" width="1912.0" height="62.2" fill="url(#gBar)" /><rect x="0.0" y="977.8" width="810.0" height="62.2" fill="#2c2c2c" /><rect x="1" y="977.8" width="45" height="70" rx="4" fill="url(#gGb2)"/><circle cx="23.6" cy="986.3" r="7" fill="url(#gKnb)"/><path d="M19.6 988.6H27.6L23.6 983.6Z" fill="#222"/><rect x="6" y="1004" width="35.2" height="30" rx="3.5" fill="#ffff00" stroke="#6a6a20" stroke-width="0.8"/><rect x="52.0" y="977.8" width="150" height="70" rx="4" fill="url(#gGb2)"/><rect x="58.5" y="983.8" width="138.5" height="35.1" rx="3" fill="#c1c39d" stroke="#8a8a70" stroke-width="0.8"/><text x="127.0" y="1033.5" font-size="11.20" fill="#2a2a2a" text-anchor="middle" >20%</text><rect x="204.0" y="977.8" width="150" height="70" rx="4" fill="url(#gGb2)"/><rect x="210.5" y="983.8" width="138.5" height="35.1" rx="3" fill="#c2c37e" stroke="#8a8a70" stroke-width="0.8"/><text x="279.0" y="1033.5" font-size="11.20" fill="#2a2a2a" text-anchor="middle" >40%</text><rect x="356.0" y="977.8" width="150" height="70" rx="4" fill="url(#gGb2)"/><rect x="362.5" y="983.8" width="138.5" height="35.1" rx="3" fill="#c3c35f" stroke="#8a8a70" stroke-width="0.8"/><text x="431.0" y="1033.5" font-size="11.20" fill="#2a2a2a" text-anchor="middle" >60%</text><rect x="508.0" y="977.8" width="150" height="70" rx="4" fill="url(#gGb2)"/><rect x="514.5" y="983.8" width="138.5" height="35.1" rx="3" fill="#c3c13c" stroke="#8a8a70" stroke-width="0.8"/><text x="583.0" y="1033.5" font-size="11.20" fill="#2a2a2a" text-anchor="middle" >80%</text><rect x="660" y="977.8" width="149.4" height="70" rx="4" fill="url(#gSel)"/><rect x="664.6" y="982.6" width="140.6" height="36.6" rx="3.5" fill="#c4c400" stroke="#2a2a00" stroke-width="1"/><text x="735.0" y="1034.0" font-size="11.60" fill="#ffffff" text-anchor="middle" font-weight="bold" >100%</text><rect x="1596.7" y="977.8" width="48.4" height="70" rx="4" fill="url(#gCtl)"/><line x1="1596.7" y1="996.2" x2="1645.1" y2="996.2" stroke="#3a3a3a" stroke-width="1.0" /><circle cx="1621.6" cy="986.6" r="7" fill="url(#gKnb)"/><path d="M1617.6 989H1625.6L1621.6 984Z" fill="#222"/><rect x="1606.6" y="1003.5" width="28.2" height="27.7" rx="3.5" fill="url(#gSq)" stroke="#2a2a2a" stroke-width="2"/><rect x="1614.2" y="1011.2" width="13.6" height="13.4" fill="#111" /><rect x="1646.2" y="977.8" width="226" height="30.2" rx="3" fill="url(#gCtl2)"/><rect x="1860.0" y="977.8" width="12.2" height="30.2" fill="url(#gCtl2)" /><line x1="1692.5" y1="977.8" x2="1692.5" y2="1008.0" stroke="#333" stroke-width="1.0" /><line x1="1737.5" y1="977.8" x2="1737.5" y2="1008.0" stroke="#333" stroke-width="1.0" /><line x1="1782.6" y1="977.8" x2="1782.6" y2="1008.0" stroke="#333" stroke-width="1.0" /><line x1="1827.4" y1="977.8" x2="1827.4" y2="1008.0" stroke="#333" stroke-width="1.0" /><rect x="1872.2" y="977.8" width="40.0" height="30.2" fill="url(#gDk)" /><circle cx="1895.2" cy="993" r="9.5" fill="#2e2e2e"/><circle cx="1668.6" cy="993" r="9.5" fill="url(#gKnb)"/><circle cx="1714.6" cy="993" r="9.5" fill="url(#gKnb)"/><circle cx="1759.7" cy="993" r="9.5" fill="url(#gKnb)"/><circle cx="1804.9" cy="993" r="9.5" fill="url(#gKnb)"/><circle cx="1849.7" cy="993" r="9.5" fill="url(#gKnb)"/><rect x="1664.7" y="989.1" width="7.8" height="7.8" fill="#222" /><path d="M1711.4 988.2V998L1719 993.1Z" fill="#222"/><path d="M1756.2 988.5h-1.6v9h1.6M1763.2 988.5h1.6v9h-1.6" fill="none" stroke="#222" stroke-width="1.6"/><circle cx="1758.4" cy="993" r="0.9" fill="#222"/><circle cx="1761" cy="993" r="0.9" fill="#222"/><path d="M1804.9 993c-2-2.6-5.6-2.6-5.6 0s3.6 2.6 5.6 0s5.6-2.6 5.6 0s-3.6 2.6-5.6 0z" fill="none" stroke="#222" stroke-width="1.7"/><path d="M1845.4 991.6a4.6 4.6 0 0 1 8.2-1.6M1854 994.4a4.6 4.6 0 0 1-8.2 1.6" fill="none" stroke="#222" stroke-width="1.7"/><path d="M1854.6 986.8v4h-4zM1844.8 999.2v-4h4z" fill="#222"/><rect x="1646.2" y="1009" width="270" height="40" rx="3" fill="url(#gCtl2)"/><line x1="1782.3" y1="1009.0" x2="1782.3" y2="1040.0" stroke="#333" stroke-width="1.0" /><circle cx="1676.4" cy="1024.2" r="9.5" fill="url(#gKnb)"/><circle cx="1890.0" cy="1024.2" r="9.5" fill="url(#gKnb)"/><path d="M1675.4 1020l-3.6 4.2l3.6 4.2M1679.4 1020l-3.6 4.2l3.6 4.2" fill="none" stroke="#222" stroke-width="1.4"/><path d="M1887.4 1020l3.6 4.2l-3.6 4.2M1891.4 1020l3.6 4.2l-3.6 4.2" fill="none" stroke="#222" stroke-width="1.4"/><text x="1703.6" y="1031.5" font-size="21.00" fill="#2e2e2e" textLength="50.0" lengthAdjust="spacingAndGlyphs" stroke="#2e2e2e" stroke-width="0.6">Back</text><text x="1810.0" y="1031.5" font-size="21.00" fill="#2e2e2e" textLength="51.6" lengthAdjust="spacingAndGlyphs" stroke="#2e2e2e" stroke-width="0.6">Next</text></svg></body></html>
